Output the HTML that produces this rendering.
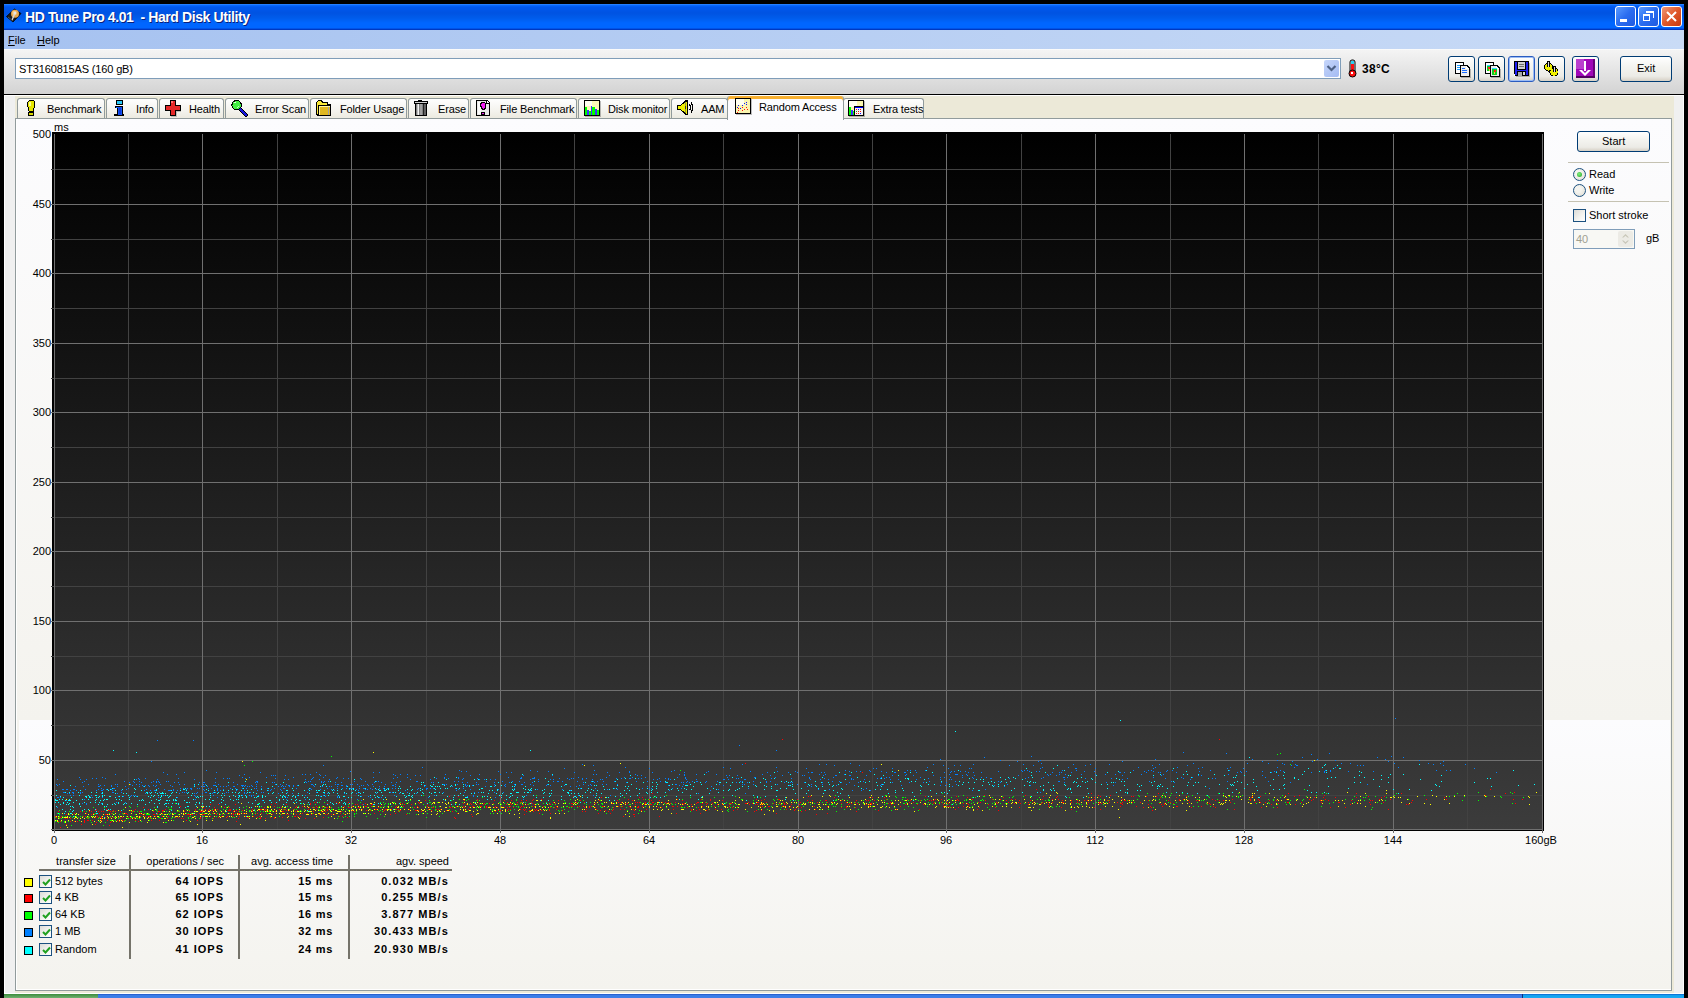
<!DOCTYPE html>
<html><head><meta charset="utf-8">
<style>
*{box-sizing:border-box;margin:0;padding:0}
html,body{width:1688px;height:998px;overflow:hidden;background:#000}
body{position:relative;font-family:"Liberation Sans",sans-serif;font-size:11px;color:#000}
.a{position:absolute}
#title{left:4px;top:4px;width:1680px;height:26px;
 background:linear-gradient(to bottom,#3d8fff 0px,#0a6cff 1px,#0058ee 3px,#0053e2 9px,#005ceb 14px,#0066ff 19px,#0066ff 24px,#0040d0 25px,#0030b0 26px)}
#title .t{left:21px;top:5px;color:#fff;font-weight:bold;font-size:14px;letter-spacing:-0.4px;text-shadow:1px 1px 0 #0a1f7a;white-space:nowrap}
#menu{left:4px;top:30px;width:1680px;height:19px;background:linear-gradient(to right,#a6c2f0,#c9dbf6)}
#menu span{position:absolute;top:4px}
#tool{left:4px;top:49px;width:1680px;height:45px;background:linear-gradient(to bottom,#f4f4f4,#d3d3d3);border-top:1px solid #fafafa}
#dark{left:4px;top:94px;width:1680px;height:1px;background:#000}
#body{left:4px;top:95px;width:1680px;height:899px;background:#f0f0f0;border-left:1px solid #fff;border-top:1px solid #fff;border-right:1px solid #fff;border-bottom:1px solid #fff}
#tan{left:15px;top:96px;width:1659px;height:897px;background:#ece9d8}
#panel{left:15px;top:118px;width:1657px;height:873px;border:1px solid #919b9c;
 background:linear-gradient(to bottom,#fcfcfe 0px,#f4f3ee 602px,#f4f3ee 873px);box-shadow:inset 1px -1px 0 #fff}
#lower{left:19px;top:720px;width:1651px;height:269px;background:linear-gradient(to bottom,#fcfcfe,#f4f3ee)}
#taskbar{left:4px;top:994px;width:1680px;height:4px;background:#3a7be6}

.tx{position:absolute;white-space:nowrap;line-height:13px;font-size:11px}
.b{font-weight:bold}
.xpbtn{position:absolute;border:1px solid #003c74;border-radius:3px;background:linear-gradient(to bottom,#ffffff 0%,#f4f4f0 40%,#ecebe6 80%,#d6d0c5 100%)}
.combo{position:absolute;left:15px;top:58px;width:1326px;height:21px;background:#fff;border:1px solid #7f9db9}
.drop{position:absolute;left:1324px;top:60px;width:15px;height:17px;border-radius:2px;background:linear-gradient(135deg,#c6d6fb 0%,#b4c8f6 50%,#a4bbf3 100%)}
.tab{position:absolute;top:98px;height:20px;border:1px solid #919b9c;border-bottom:none;border-radius:3px 3px 0 0;background:linear-gradient(to bottom,#fefefe,#f4f3ee 60%,#eceae0)}
.tab .tx{top:4px;left:29px;letter-spacing:-0.15px}
.tab svg{position:absolute;left:6px;top:1px}

.radio{position:absolute;width:13px;height:13px;border-radius:50%;border:1px solid #1c5180;background:radial-gradient(circle at 40% 40%,#f4f4f0 30%,#dcdad0 100%)}
.chk{position:absolute;width:13px;height:13px;border:1px solid #1c5180;background:linear-gradient(135deg,#dcdcd7 0%,#f4f4f0 60%,#ffffff 100%)}
.sw{position:absolute;left:24px;width:9px;height:9px;border:1px solid #000}
.sep{position:absolute;width:2px;top:855px;height:104px;background:#75736a}
.lt{position:absolute;white-space:nowrap;line-height:13px;font-size:11px;text-align:right}
.tbtn{position:absolute;top:6px;width:21px;height:21px;border:1px solid #fff;border-radius:3px}
</style></head><body>
<div class="a" id="title"><div class="a t">HD Tune Pro 4.01&nbsp; - Hard Disk Utility</div></div>
<div class="a" id="menu"><span style="left:4px"><u>F</u>ile</span><span style="left:33px"><u>H</u>elp</span></div>
<div class="a" id="tool"></div>
<div class="a" id="dark"></div>
<div class="a" id="body"></div>
<div class="a" id="tan"></div>
<div class="a" id="panel"></div>
<div class="a" id="lower"></div>

<!-- toolbar -->
<div class="combo"></div>
<div class="tx" style="left:19px;top:63px;letter-spacing:-0.15px">ST3160815AS (160 gB)</div>
<div class="drop"><svg width="16" height="17" style="position:absolute;left:0;top:0"><path d="M3.5 6 L7.5 10 L11.5 6" fill="none" stroke="#4d6185" stroke-width="2.2"/></svg></div>
<svg class="a" style="left:1347px;top:59px" width="12" height="19" viewBox="0 0 12 19">
<rect x="3" y="1" width="5" height="13" rx="2" fill="#e0e0e0" stroke="#000" stroke-width="1"/>
<rect x="4" y="2" width="3" height="3" fill="#2ad0f0"/><rect x="4" y="5" width="3" height="9" fill="#ff1010"/>
<circle cx="5.5" cy="14.5" r="3.5" fill="#ff1010" stroke="#000" stroke-width="1"/><rect x="4" y="13" width="2" height="2" fill="#fff"/>
</svg>
<div class="tx b" style="left:1362px;top:63px;font-size:12px;letter-spacing:0.3px">38°C</div>
<div class="xpbtn" style="left:1448px;top:56px;width:27px;height:26px"></div>
<div class="xpbtn" style="left:1478px;top:56px;width:27px;height:26px"></div>
<div class="xpbtn" style="left:1508px;top:56px;width:27px;height:26px;border-color:#2a5cc0;box-shadow:inset 0 0 0 1px #9cbcf5"></div>
<div class="xpbtn" style="left:1538px;top:56px;width:27px;height:26px"></div>
<div class="xpbtn" style="left:1572px;top:56px;width:27px;height:26px"></div>
<div class="xpbtn" style="left:1620px;top:56px;width:52px;height:26px"></div>
<div class="tx" style="left:1637px;top:62px">Exit</div>
<!-- tabs -->
<div class="tab" style="left:17px;width:88px"><div class="tx">Benchmark</div></div>
<div class="tab" style="left:106px;width:52px"><div class="tx">Info</div></div>
<div class="tab" style="left:159px;width:65px"><div class="tx">Health</div></div>
<div class="tab" style="left:225px;width:84px"><div class="tx">Error Scan</div></div>
<div class="tab" style="left:310px;width:97px"><div class="tx">Folder Usage</div></div>
<div class="tab" style="left:408px;width:61px"><div class="tx">Erase</div></div>
<div class="tab" style="left:470px;width:107px"><div class="tx">File Benchmark</div></div>
<div class="tab" style="left:578px;width:92px"><div class="tx">Disk monitor</div></div>
<div class="tab" style="left:671px;width:57px"><div class="tx">AAM</div></div>
<div class="tab" style="left:727px;width:117px;top:96px;height:24px;border-top:none;background:#fcfcfe;box-shadow:inset 0 3px 0 #f8b030"><div class="tx" style="left:31px;top:5px">Random Access</div></div>
<div class="tab" style="left:843px;width:81px"><div class="tx">Extra tests</div></div>
<!-- toolbar icons -->
<svg class="a" style="left:1454px;top:61px" width="17" height="17" viewBox="0 0 17 17" shape-rendering="crispEdges"><path d="M1 1h8l1 1v11H1z" fill="#000"/><path d="M2 2h7v10H2z" fill="#fff"/><rect x="3" y="4" width="4" height="1" fill="#1a9cff"/><rect x="3" y="6" width="5" height="1" fill="#1a9cff"/><rect x="3" y="8" width="5" height="1" fill="#1a9cff"/><path d="M6 4h7l3 3v9H6z" fill="#000"/><path d="M7 5h5v3h3v7H7z" fill="#eee"/><path d="M12 5l3 3h-3z" fill="#fff"/><rect x="8" y="7" width="3" height="1" fill="#1a6cff"/><rect x="8" y="9" width="5" height="1" fill="#1a6cff"/><rect x="8" y="11" width="5" height="1" fill="#1a6cff"/><path d="M16 8h1v9H7v-1h9z" fill="#000" opacity="0.25"/></svg>
<svg class="a" style="left:1484px;top:61px" width="17" height="17" viewBox="0 0 17 17" shape-rendering="crispEdges"><path d="M1 1h8l1 1v11H1z" fill="#000"/><path d="M2 2h7v10H2z" fill="#fff"/><rect x="3" y="4" width="5" height="1" fill="#29d6ff"/><rect x="3" y="5" width="5" height="5" fill="#10d020"/><rect x="4" y="6" width="2" height="2" fill="#ff2020"/><rect x="5" y="8" width="1" height="2" fill="#e0e020"/><path d="M6 4h7l3 3v9H6z" fill="#000"/><path d="M7 5h5v3h3v7H7z" fill="#eee"/><path d="M12 5l3 3h-3z" fill="#fff"/><rect x="8" y="7" width="5" height="1" fill="#29d6ff"/><rect x="8" y="8" width="5" height="6" fill="#10d020"/><rect x="10" y="9" width="2" height="2" fill="#ff2020"/><rect x="10" y="11" width="1" height="2" fill="#e0e020"/><path d="M16 8h1v9H7v-1h9z" fill="#000" opacity="0.25"/></svg>
<svg class="a" style="left:1514px;top:61px" width="17" height="17" viewBox="0 0 17 17" shape-rendering="crispEdges"><rect x="0" y="0" width="15" height="15" fill="#000"/><rect x="1" y="1" width="13" height="13" fill="#2020f0"/><rect x="3" y="1" width="9" height="8" fill="#000"/><rect x="4" y="1" width="7" height="7" fill="#d0d0d0"/><rect x="5" y="3" width="5" height="1" fill="#707070"/><rect x="5" y="5" width="5" height="1" fill="#707070"/><rect x="3" y="10" width="9" height="5" fill="#000"/><rect x="4" y="11" width="4" height="4" fill="#a8a8a8"/><rect x="9" y="11" width="2" height="3" fill="#d8d8d8"/><rect x="0" y="13" width="1" height="2" fill="#fff"/><path d="M15 2h1v14H2v-1h13z" fill="#000" opacity="0.25"/></svg>
<svg class="a" style="left:1543px;top:61px" width="17" height="17" viewBox="0 0 17 17" shape-rendering="crispEdges"><circle cx="5.5" cy="6" r="4.6" fill="#000"/><circle cx="11" cy="11" r="4.6" fill="#000"/><circle cx="5.5" cy="6" r="3.6" fill="#f0f000"/><circle cx="11" cy="11" r="3.6" fill="#f0f000"/><rect x="4" y="0" width="3" height="6" fill="#000"/><rect x="5" y="1" width="1" height="5" fill="#ddd"/><rect x="9.5" y="5" width="3" height="6" fill="#000"/><rect x="10.5" y="6" width="1" height="5" fill="#ddd"/></svg>
<svg class="a" style="left:1576px;top:59px" width="19" height="19" viewBox="0 0 19 19" shape-rendering="crispEdges"><rect x="0" y="0" width="19" height="19" rx="1" fill="#a008b8"/><rect x="0" y="0" width="8" height="10" fill="#d070e0" opacity="0.55"/><rect x="0" y="17" width="19" height="2" fill="#500060"/><rect x="17" y="0" width="2" height="19" fill="#500060" opacity="0.7"/><rect x="8" y="2" width="2" height="10" fill="#fff"/><path d="M3 11h3l3 3 3-3h3l-6 6z" fill="#fff" shape-rendering="auto"/></svg>
<!-- tab icons -->
<svg class="a" style="left:23px;top:100px" width="16" height="17" viewBox="0 0 16 17" shape-rendering="crispEdges" shape-rendering="auto"><path d="M6 0H10L12 2V7L11 8V11L10 12H6L5 11V8L4 7V2Z" fill="#000"/><path d="M6 1H10L11 2V7L10 8V11H6V8L5 7V2Z" fill="#e6e600"/><rect x="6" y="2" width="2" height="4" fill="#fafa90"/><rect x="5" y="12" width="6" height="4" fill="#000"/><rect x="6" y="13" width="4" height="2" fill="#d8d800"/></svg>
<svg class="a" style="left:111px;top:100px" width="16" height="17" viewBox="0 0 16 17" shape-rendering="crispEdges"><rect x="5" y="0" width="7" height="5" fill="#000"/><rect x="6" y="1" width="5" height="3" fill="#28c8f8"/><path d="M4 6H12V14H13V16H3V14H6V8H4Z" fill="#000"/><path d="M5 7H11V15H4V15H7V8H5Z" fill="#1060ff"/><rect x="7" y="7" width="4" height="8" fill="#1450f0"/><rect x="8" y="8" width="2" height="6" fill="#0a3ae0"/></svg>
<svg class="a" style="left:165px;top:100px" width="17" height="17" viewBox="0 0 17 17" shape-rendering="crispEdges"><path d="M5 0H11V5H16V11H11V16H5V11H0V5H5Z" fill="#000"/><path d="M6 1H10V6H15V10H10V15H6V10H1V6H6Z" fill="#e42828"/><rect x="6" y="1" width="2" height="2" fill="#ff7070"/><path d="M11 11H16V12H12V17H6V16H11Z" fill="#000" opacity="0.2"/></svg>
<svg class="a" style="left:231px;top:100px" width="17" height="17" viewBox="0 0 17 17" shape-rendering="crispEdges" shape-rendering="auto"><circle cx="5.6" cy="5.2" r="5.3" fill="#000"/><circle cx="5.6" cy="5.2" r="4.2" fill="#44ee44"/><rect x="3" y="2" width="2" height="1" fill="#e0ffe0"/><path d="M6 8L8 6" stroke="#e0ffe0" stroke-width="0.8"/><path d="M9.5 9.5L15 15" stroke="#000" stroke-width="4" stroke-linecap="round"/><path d="M9.5 9.5L15 15" stroke="#1818e0" stroke-width="2.2" stroke-linecap="round"/></svg>
<svg class="a" style="left:316px;top:100px" width="16" height="17" viewBox="0 0 16 17" shape-rendering="crispEdges" shape-rendering="auto"><path d="M0 2L2 0H5L7 2H12V4H15V16H1L0 15Z" fill="#000"/><path d="M1 2.5L2.5 1H4.5L6.5 3H11V5H2V14H1Z" fill="#f8e838"/><rect x="2" y="5" width="13" height="11" fill="#000"/><rect x="3" y="6" width="11" height="9" fill="#e0b820"/><rect x="3" y="6" width="11" height="1" fill="#fff6a0"/><rect x="3" y="6" width="1" height="9" fill="#fff6a0"/><rect x="12" y="7" width="1" height="8" fill="#a0a0a0"/></svg>
<svg class="a" style="left:413px;top:100px" width="16" height="17" viewBox="0 0 16 17" shape-rendering="crispEdges"><rect x="1" y="1" width="14" height="3" fill="#000"/><rect x="5" y="0" width="4" height="2" fill="#000"/><rect x="2" y="2" width="12" height="1" fill="#d0d0d0"/><rect x="2" y="4" width="12" height="12" fill="#000"/><rect x="3" y="4" width="10" height="11" fill="#808080"/><rect x="4" y="4" width="1" height="11" fill="#c0c0c0"/><rect x="5" y="4" width="1" height="11" fill="#f4f4f4"/><rect x="7" y="4" width="2" height="11" fill="#a0a0a0"/><rect x="10" y="4" width="1" height="11" fill="#222"/><rect x="11" y="4" width="2" height="11" fill="#606060"/></svg>
<svg class="a" style="left:476px;top:100px" width="16" height="17" viewBox="0 0 16 17" shape-rendering="crispEdges" shape-rendering="auto"><path d="M0 0H11L14 3V16H0Z" fill="#000"/><path d="M1 1H10V4H13V15H1Z" fill="#e8e8e8"/><rect x="2" y="2" width="3" height="12" fill="#fafafa"/><path d="M11 1L13 3H11Z" fill="#fff"/><path d="M5 2H8L10 4V8L9 10H6L5 9V8L4 7V4Z" fill="#000"/><path d="M6 3H8L9 4V7L8 9H7L6 8V7L5 6V4Z" fill="#f020f0"/><rect x="5" y="12" width="4" height="3" fill="#000"/><rect x="6" y="13" width="2" height="1" fill="#f020f0"/></svg>
<svg class="a" style="left:584px;top:100px" width="17" height="17" viewBox="0 0 17 17" shape-rendering="crispEdges"><rect x="0" y="0" width="16" height="16" fill="#000"/><rect x="1" y="1" width="14" height="14" fill="#fdf8b8"/><rect x="1" y="1" width="7" height="5" fill="#fffff0"/><rect x="1" y="7" width="2" height="8" fill="#00ff00"/><rect x="3" y="10" width="2" height="5" fill="#4030ff"/><rect x="5" y="11" width="2" height="4" fill="#00ff00"/><rect x="7" y="6" width="1" height="9" fill="#4030ff"/><rect x="8" y="7" width="3" height="8" fill="#00ff00"/><rect x="11" y="9" width="2" height="6" fill="#4030ff"/><rect x="13" y="10" width="2" height="5" fill="#00ff00"/><path d="M16 1h1v16H1v-1h15z" fill="#000" opacity="0.25"/></svg>
<svg class="a" style="left:677px;top:100px" width="17" height="16" viewBox="0 0 17 16" shape-rendering="crispEdges" shape-rendering="auto"><path d="M0 5H3L9 0H11V15H9L3 10H0Z" fill="#000"/><path d="M1 6H3.5L9 1.5H10V13.5H9L3.5 9H1Z" fill="#f0f000"/><rect x="8" y="6" width="1" height="3" fill="#000"/><rect x="8" y="2" width="1" height="11" fill="#606060" opacity="0.6"/><path d="M12.5 4.5Q14.5 7.5 12.5 10.5" stroke="#000" stroke-width="1.1" fill="none"/><path d="M14 2.5Q17.5 7.5 14 12.5" stroke="#000" stroke-width="1.1" fill="none"/></svg>
<svg class="a" style="left:735px;top:98px" width="17" height="17" viewBox="0 0 17 17" shape-rendering="crispEdges"><rect x="0" y="0" width="16" height="16" fill="#000"/><rect x="1" y="1" width="14" height="14" fill="#fbf6b0"/><rect x="1" y="1" width="8" height="6" fill="#fffff0"/><rect x="3" y="7" width="1" height="1" fill="#1010ff"/><rect x="7" y="7" width="1" height="1" fill="#1010ff"/><rect x="9" y="5" width="1" height="1" fill="#1010ff"/><rect x="11" y="4" width="1" height="1" fill="#1010ff"/><rect x="11" y="6" width="1" height="1" fill="#1010ff"/><rect x="2" y="9" width="1" height="1" fill="#1010ff"/><rect x="5" y="10" width="1" height="1" fill="#1010ff"/><rect x="3" y="10" width="1" height="1" fill="#ff1010"/><rect x="7" y="9" width="1" height="1" fill="#ff1010"/><rect x="11" y="9" width="1" height="1" fill="#ff1010"/><rect x="9" y="11" width="1" height="1" fill="#ff1010"/><rect x="12" y="11" width="1" height="1" fill="#ff1010"/><rect x="3" y="12" width="1" height="1" fill="#ff1010"/><rect x="7" y="12" width="1" height="1" fill="#ff1010"/><rect x="2" y="14" width="1" height="1" fill="#ff1010"/><path d="M16 1h1v16H1v-1h15z" fill="#000" opacity="0.25"/></svg>
<svg class="a" style="left:848px;top:100px" width="17" height="17" viewBox="0 0 17 17" shape-rendering="crispEdges"><rect x="0" y="0" width="16" height="16" fill="#000"/><rect x="1" y="1" width="14" height="14" fill="#fbf6b0"/><rect x="1" y="1" width="8" height="6" fill="#fffff0"/><rect x="1" y="7" width="2" height="8" fill="#00ff00"/><rect x="3" y="10" width="2" height="5" fill="#4030ff"/><rect x="5" y="11" width="1" height="4" fill="#00ff00"/><rect x="6" y="6" width="10" height="10" fill="#000"/><rect x="7" y="7" width="8" height="8" fill="#f4f4f4"/><rect x="7" y="7" width="8" height="1" fill="#0000ff"/><rect x="8" y="9" width="1" height="1" fill="#ff1010"/><rect x="10" y="9" width="1" height="1" fill="#1010ff"/><rect x="12" y="9" width="1" height="1" fill="#ff1010"/><rect x="8" y="11" width="1" height="1" fill="#10c010"/><rect x="10" y="11" width="1" height="1" fill="#ff1010"/><rect x="12" y="11" width="1" height="1" fill="#ff1010"/><rect x="8" y="13" width="1" height="1" fill="#ff1010"/><rect x="10" y="13" width="1" height="1" fill="#ff1010"/><rect x="12" y="13" width="1" height="1" fill="#1010ff"/><path d="M16 1h1v16H1v-1h15z" fill="#000" opacity="0.25"/></svg>

<!-- title icon + buttons -->
<svg class="a" style="left:6px;top:8px" width="16" height="15" viewBox="0 0 16 15">
<path d="M0.5 8.5L8.5 1L15 5.5L7 14Z" fill="#1a1a1a" stroke="#000" stroke-width="0.8"/>
<circle cx="9" cy="5.8" r="4" fill="#e8a850"/><circle cx="8.5" cy="5" r="2.2" fill="#f8d090"/>
<path d="M6 12L8.8 5.5" stroke="#d8d8d8" stroke-width="1.4"/><circle cx="9" cy="5" r="1.3" fill="#e8e8e8"/>
<path d="M2 9L7 13" stroke="#555" stroke-width="1"/></svg>
<div class="tbtn" style="left:1615px;background:linear-gradient(135deg,#5a9bff 0%,#2a6cf0 50%,#1f5ae0 100%)"><div class="a" style="left:4px;top:12px;width:7px;height:3px;background:#fff"></div></div>
<div class="tbtn" style="left:1638px;background:linear-gradient(135deg,#5a9bff 0%,#2a6cf0 50%,#1f5ae0 100%)"><div class="a" style="left:7px;top:4px;width:8px;height:7px;border-top:2px solid #fff;border-right:1px solid #fff"></div><div class="a" style="left:4px;top:7px;width:7px;height:7px;border:1px solid #fff;border-top-width:2px"></div></div>
<div class="tbtn" style="left:1661px;background:linear-gradient(135deg,#f09878 0%,#e0582a 50%,#c83a10 100%)"><svg class="a" style="left:3px;top:3px" width="13" height="13"><path d="M2 2L11 11M11 2L2 11" stroke="#fff" stroke-width="2"/></svg></div>
<!-- right controls -->
<div class="xpbtn" style="left:1577px;top:131px;width:73px;height:21px"></div>
<div class="tx" style="left:1602px;top:135px">Start</div>
<div class="a" style="left:1568px;top:162px;width:101px;height:1px;background:#c5c2b2"></div>
<div class="radio" style="left:1573px;top:168px"><div class="a" style="left:3px;top:3px;width:5px;height:5px;border-radius:50%;background:radial-gradient(circle at 40% 40%,#80f080,#20a020)"></div></div>
<div class="tx" style="left:1589px;top:168px">Read</div>
<div class="radio" style="left:1573px;top:184px"></div>
<div class="tx" style="left:1589px;top:184px">Write</div>
<div class="a" style="left:1568px;top:201px;width:101px;height:1px;background:#c5c2b2"></div>
<div class="chk" style="left:1573px;top:209px"></div>
<div class="tx" style="left:1589px;top:209px">Short stroke</div>
<div class="a" style="left:1573px;top:229px;width:62px;height:20px;border:1px solid #7f9db9;background:#f8f8f4"></div>
<div class="a" style="left:1618px;top:231px;width:15px;height:16px;background:#ecebe5;border-radius:2px"></div>
<svg class="a" style="left:1618px;top:231px" width="15" height="16"><path d="M4 6.5L7.5 3 11 6.5H9.5L7.5 4.8 5.5 6.5ZM4 9.5L7.5 13 11 9.5H9.5L7.5 11.2 5.5 9.5Z" fill="#c8c6b8"/></svg>
<div class="tx" style="left:1576px;top:233px;color:#a0a090">40</div>
<div class="tx" style="left:1646px;top:232px">gB</div>
<!-- legend table -->
<div class="a" style="left:39px;top:869px;width:413px;height:2px;background:#75736a"></div>
<div class="sep" style="left:129px"></div><div class="sep" style="left:238px"></div><div class="sep" style="left:348px"></div>
<div class="lt" style="right:1572px;top:855px">transfer size</div>
<div class="lt" style="right:1464px;top:855px">operations / sec</div>
<div class="lt" style="right:1355px;top:855px">avg. access time</div>
<div class="lt" style="right:1239px;top:855px">agv. speed</div>
<div class="sw" style="top:878px;background:#ffff00"></div>
<div class="chk" style="left:39px;top:875px"><svg class="a" style="left:2px;top:2px" width="9" height="9"><path d="M1 4L3.5 6.5 8 1.5" fill="none" stroke="#21a121" stroke-width="2"/></svg></div>
<div class="tx" style="left:55px;top:875px">512 bytes</div>
<div class="lt b" style="right:1464px;top:875px;letter-spacing:1px">64 IOPS</div>
<div class="lt b" style="right:1355px;top:875px;letter-spacing:0.7px">15 ms</div>
<div class="lt b" style="right:1239px;top:875px;letter-spacing:1.1px">0.032 MB/s</div>
<div class="sw" style="top:894px;background:#ff0000"></div>
<div class="chk" style="left:39px;top:891px"><svg class="a" style="left:2px;top:2px" width="9" height="9"><path d="M1 4L3.5 6.5 8 1.5" fill="none" stroke="#21a121" stroke-width="2"/></svg></div>
<div class="tx" style="left:55px;top:891px">4 KB</div>
<div class="lt b" style="right:1464px;top:891px;letter-spacing:1px">65 IOPS</div>
<div class="lt b" style="right:1355px;top:891px;letter-spacing:0.7px">15 ms</div>
<div class="lt b" style="right:1239px;top:891px;letter-spacing:1.1px">0.255 MB/s</div>
<div class="sw" style="top:911px;background:#00ff00"></div>
<div class="chk" style="left:39px;top:908px"><svg class="a" style="left:2px;top:2px" width="9" height="9"><path d="M1 4L3.5 6.5 8 1.5" fill="none" stroke="#21a121" stroke-width="2"/></svg></div>
<div class="tx" style="left:55px;top:908px">64 KB</div>
<div class="lt b" style="right:1464px;top:908px;letter-spacing:1px">62 IOPS</div>
<div class="lt b" style="right:1355px;top:908px;letter-spacing:0.7px">16 ms</div>
<div class="lt b" style="right:1239px;top:908px;letter-spacing:1.1px">3.877 MB/s</div>
<div class="sw" style="top:928px;background:#0080ff"></div>
<div class="chk" style="left:39px;top:925px"><svg class="a" style="left:2px;top:2px" width="9" height="9"><path d="M1 4L3.5 6.5 8 1.5" fill="none" stroke="#21a121" stroke-width="2"/></svg></div>
<div class="tx" style="left:55px;top:925px">1 MB</div>
<div class="lt b" style="right:1464px;top:925px;letter-spacing:1px">30 IOPS</div>
<div class="lt b" style="right:1355px;top:925px;letter-spacing:0.7px">32 ms</div>
<div class="lt b" style="right:1239px;top:925px;letter-spacing:1.1px">30.433 MB/s</div>
<div class="sw" style="top:946px;background:#00ffff"></div>
<div class="chk" style="left:39px;top:943px"><svg class="a" style="left:2px;top:2px" width="9" height="9"><path d="M1 4L3.5 6.5 8 1.5" fill="none" stroke="#21a121" stroke-width="2"/></svg></div>
<div class="tx" style="left:55px;top:943px">Random</div>
<div class="lt b" style="right:1464px;top:943px;letter-spacing:1px">41 IOPS</div>
<div class="lt b" style="right:1355px;top:943px;letter-spacing:0.7px">24 ms</div>
<div class="lt b" style="right:1239px;top:943px;letter-spacing:1.1px">20.930 MB/s</div>

<!-- taskbar -->
<div class="a" style="left:4px;top:993px;width:1680px;height:1px;background:#fff"></div>
<div class="a" style="left:4px;top:994px;width:94px;height:4px;background:linear-gradient(to bottom,#3c8c3c,#70b070)"></div>
<div class="a" style="left:98px;top:994px;width:1425px;height:4px;background:linear-gradient(to bottom,#1848b8 0px,#3a7ce8 1px,#3c80e8 4px)"></div>
<div class="a" style="left:1522px;top:994px;width:1px;height:4px;background:#10307a"></div>
<div class="a" style="left:1523px;top:994px;width:161px;height:4px;background:linear-gradient(to bottom,#0a4cc0 0px,#12a0ee 1px,#18aaf2 4px)"></div>
<svg class="a" style="left:0;top:118px" width="1560" height="740" viewBox="0 0 1560 740" shape-rendering="crispEdges">
<defs><linearGradient id="cg" gradientUnits="userSpaceOnUse" x1="0" y1="16" x2="0" y2="712"><stop offset="0" stop-color="#000"/><stop offset="1" stop-color="#3c3c3c"/></linearGradient></defs>
<rect x="52" y="14" width="1492" height="699" fill="#000"/>
<rect x="54" y="16" width="1489" height="696" fill="url(#cg)"/>
<path d="M128 16h1v697h-1zM277 16h1v697h-1zM426 16h1v697h-1zM574 16h1v697h-1zM723 16h1v697h-1zM872 16h1v697h-1zM1021 16h1v697h-1zM1170 16h1v697h-1zM1318 16h1v697h-1zM1467 16h1v697h-1zM51 677h1492v1h-1492zM51 607h1492v1h-1492zM51 538h1492v1h-1492zM51 468h1492v1h-1492zM51 399h1492v1h-1492zM51 329h1492v1h-1492zM51 260h1492v1h-1492zM51 190h1492v1h-1492zM51 121h1492v1h-1492zM51 51h1492v1h-1492z" fill="#424242"/>
<path d="M54 16h1v699h-1zM202 16h1v699h-1zM351 16h1v699h-1zM500 16h1v699h-1zM649 16h1v699h-1zM798 16h1v699h-1zM946 16h1v699h-1zM1095 16h1v699h-1zM1244 16h1v699h-1zM1393 16h1v699h-1zM1542 16h1v699h-1zM51 711h1492v1h-1492zM51 642h1492v1h-1492zM51 572h1492v1h-1492zM51 503h1492v1h-1492zM51 433h1492v1h-1492zM51 364h1492v1h-1492zM51 294h1492v1h-1492zM51 225h1492v1h-1492zM51 155h1492v1h-1492zM51 86h1492v1h-1492z" fill="#707070"/>
<path d="M52 14h2v699h-2zM52 712h1492v1h-1492zM1543 14h1v699h-1zM52 14h1492v2h-1492z" fill="#000"/>
<path d="M54 712h1v3h-1zM202 712h1v3h-1zM351 712h1v3h-1zM500 712h1v3h-1zM649 712h1v3h-1zM798 712h1v3h-1zM946 712h1v3h-1zM1095 712h1v3h-1zM1244 712h1v3h-1zM1393 712h1v3h-1zM1542 712h1v3h-1zM51 711h3v1h-3zM51 642h3v1h-3zM51 572h3v1h-3zM51 503h3v1h-3zM51 433h3v1h-3zM51 364h3v1h-3zM51 294h3v1h-3zM51 225h3v1h-3zM51 155h3v1h-3zM51 86h3v1h-3z" fill="#707070"/><path d="M51 677h3v1h-3zM51 607h3v1h-3zM51 538h3v1h-3zM51 468h3v1h-3zM51 399h3v1h-3zM51 329h3v1h-3zM51 260h3v1h-3zM51 190h3v1h-3zM51 121h3v1h-3zM51 51h3v1h-3z" fill="#424242"/>
<path d="M55 682h1v1h-1zm1 -16h1v1h-1zm1 -5h1v1h-1zm0 6h1v1h-1zm0 12h1v1h-1zm0 10h1v1h-1zm1 -10h1v1h-1zm1 -13h1v1h-1zm1 13h1v1h-1zm2 -8h1v1h-1zm1 -8h1v1h-1zm0 8h1v1h-1zm0 3h1v1h-1zm1 0h1v1h-1zm2 -3h1v1h-1zm0 11h1v1h-1zm1 -11h1v1h-1zm0 4h1v1h-1zm2 0h1v1h-1zm1 -3h1v1h-1zm0 5h1v1h-1zm2 -3h1v1h-1zm1 -3h1v1h-1zm0 3h1v1h-1zm0 1h1v1h-1zm0 2h1v1h-1zm1 -6h1v1h-1zm1 -3h1v1h-1zm1 4h1v1h-1zm3 -13h1v1h-1zm1 2h1v1h-1zm0 11h1v1h-1zm0 2h1v1h-1zm0 1h1v1h-1zm2 -11h1v1h-1zm0 10h1v1h-1zm0 11h1v1h-1zm1 -17h1v1h-1zm1 -5h1v1h-1zm0 18h1v1h-1zm1 -10h1v1h-1zm1 -10h1v1h-1zm0 24h1v1h-1zm0 1h1v1h-1zm2 -20h1v1h-1zm3 8h1v1h-1zm0 3h1v1h-1zm1 -17h1v1h-1zm0 19h1v1h-1zm4 -19h1v1h-1zm0 12h1v1h-1zm2 -6h1v1h-1zm0 2h1v1h-1zm0 3h1v1h-1zm1 -3h1v1h-1zm0 10h1v1h-1zm1 -11h1v1h-1zm0 15h1v1h-1zm1 -12h1v1h-1zm0 2h1v1h-1zm0 3h1v1h-1zm0 10h1v1h-1zm1 -26h1v1h-1zm0 13h1v1h-1zm0 7h1v1h-1zm1 -8h1v1h-1zm1 -4h1v1h-1zm1 -7h1v1h-1zm1 11h1v1h-1zm4 0h1v1h-1zm1 -4h1v1h-1zm0 1h1v1h-1zm0 3h1v1h-1zm1 1h1v1h-1zm0 2h1v1h-1zm1 -4h1v1h-1zm0 4h1v1h-1zm1 -4h1v1h-1zm1 -14h1v1h-1zm0 10h1v1h-1zm1 18h1v1h-1zm1 -18h1v1h-1zm0 2h1v1h-1zm0 7h1v1h-1zm1 3h1v1h-1zm1 0h1v1h-1zm2 -6h1v1h-1zm0 2h1v1h-1zm2 4h1v1h-1zm1 -15h1v1h-1zm1 5h1v1h-1zm0 16h1v1h-1zm1 -13h1v1h-1zm2 -1h1v1h-1zm1 -6h1v1h-1zm1 2h1v1h-1zm0 12h1v1h-1zm1 -1h1v1h-1zm0 8h1v1h-1zm1 -18h1v1h-1zm1 -4h1v1h-1zm0 14h1v1h-1zm1 -13h1v1h-1zm0 6h1v1h-1zm1 7h1v1h-1zm1 -16h1v1h-1zm0 5h1v1h-1zm0 12h1v1h-1zm2 -18h1v1h-1zm1 1h1v1h-1zm0 2h1v1h-1zm0 3h1v1h-1zm0 2h1v1h-1zm2 -4h1v1h-1zm1 3h1v1h-1zm1 1h1v1h-1zm1 4h1v1h-1zm1 -12h1v1h-1zm0 7h1v1h-1zm0 8h1v1h-1zm1 -4h1v1h-1zm0 3h1v1h-1zm2 -7h1v1h-1zm0 11h1v1h-1zm1 -10h1v1h-1zm0 6h1v1h-1zm1 -2h1v1h-1zm1 -29h1v1h-1zm0 21h1v1h-1zm0 10h1v1h-1zm2 -11h1v1h-1zm0 4h1v1h-1zm1 5h1v1h-1zm1 -4h1v1h-1zm0 4h1v1h-1zm1 -9h1v1h-1zm0 1h1v1h-1zm0 3h1v1h-1zm1 -45h1v1h-1zm0 39h1v1h-1zm1 2h1v1h-1zm0 7h1v1h-1zm0 9h1v1h-1zm1 -15h1v1h-1zm0 10h1v1h-1zm1 -8h1v1h-1zm1 11h1v1h-1zm2 -23h1v1h-1zm0 23h1v1h-1zm1 -6h1v1h-1zm2 -8h1v1h-1zm1 -7h1v1h-1zm1 7h1v1h-1zm0 9h1v1h-1zm0 7h1v1h-1zm1 -7h1v1h-1zm1 -5h1v1h-1zm0 5h1v1h-1zm2 -4h1v1h-1zm0 6h1v1h-1zm1 -3h1v1h-1zm0 1h1v1h-1zm1 -8h1v1h-1zm2 -8h1v1h-1zm1 16h1v1h-1zm0 7h1v1h-1zm1 -19h1v1h-1zm0 4h1v1h-1zm1 2h1v1h-1zm0 9h1v1h-1zm1 -5h1v1h-1zm2 4h1v1h-1zm1 -4h1v1h-1zm1 -16h1v1h-1zm0 12h1v1h-1zm0 8h1v1h-1zm2 -3h1v1h-1zm0 3h1v1h-1zm1 -4h1v1h-1zm3 0h1v1h-1zm1 0h1v1h-1zm0 1h1v1h-1zm2 -49h1v1h-1zm1 39h1v1h-1zm0 6h1v1h-1zm0 8h1v1h-1zm0 2h1v1h-1zm1 1h1v1h-1zm0 3h1v1h-1zm1 -6h1v1h-1zm1 -5h1v1h-1zm0 4h1v1h-1zm2 -10h1v1h-1zm0 6h1v1h-1zm2 -2h1v1h-1zm1 7h1v1h-1zm1 -11h1v1h-1zm0 2h1v1h-1zm0 2h1v1h-1zm0 3h1v1h-1zm1 -7h1v1h-1zm0 4h1v1h-1zm0 4h1v1h-1zm1 -6h1v1h-1zm0 8h1v1h-1zm1 -22h1v1h-1zm0 22h1v1h-1zm1 -6h1v1h-1zm1 2h1v1h-1zm1 5h1v1h-1zm2 -5h1v1h-1zm1 5h1v1h-1zm1 -8h1v1h-1zm0 7h1v1h-1zm0 3h1v1h-1zm1 -10h1v1h-1zm1 -7h1v1h-1zm0 4h1v1h-1zm0 3h1v1h-1zm0 7h1v1h-1zm1 -20h1v1h-1zm0 14h1v1h-1zm1 2h1v1h-1zm0 1h1v1h-1zm0 1h1v1h-1zm0 3h1v1h-1zm0 4h1v1h-1zm1 -13h1v1h-1zm1 19h1v1h-1zm1 -17h1v1h-1zm0 4h1v1h-1zm3 -12h1v1h-1zm0 8h1v1h-1zm0 3h1v1h-1zm1 4h1v1h-1zm2 -7h1v1h-1zm0 6h1v1h-1zm1 -14h1v1h-1zm1 7h1v1h-1zm0 7h1v1h-1zm1 -14h1v1h-1zm1 10h1v1h-1zm3 -6h1v1h-1zm0 4h1v1h-1zm1 0h1v1h-1zm1 2h1v1h-1zm1 2h1v1h-1zm1 -6h1v1h-1zm0 5h1v1h-1zm1 6h1v1h-1zm1 -20h1v1h-1zm2 10h1v1h-1zm0 5h1v1h-1zm1 -13h1v1h-1zm0 8h1v1h-1zm0 1h1v1h-1zm0 2h1v1h-1zm0 7h1v1h-1zm1 -10h1v1h-1zm0 3h1v1h-1zm1 -14h1v1h-1zm0 12h1v1h-1zm0 4h1v1h-1zm0 2h1v1h-1zm0 1h1v1h-1zm1 -15h1v1h-1zm0 7h1v1h-1zm1 3h1v1h-1zm0 5h1v1h-1zm1 -7h1v1h-1zm2 -9h1v1h-1zm0 9h1v1h-1zm0 9h1v1h-1zm1 -3h1v1h-1zm1 -7h1v1h-1zm0 10h1v1h-1zm0 1h1v1h-1zm1 -10h1v1h-1zm1 9h1v1h-1zm1 -7h1v1h-1zm1 -6h1v1h-1zm1 -1h1v1h-1zm0 3h1v1h-1zm0 2h1v1h-1zm0 2h1v1h-1zm1 -7h1v1h-1zm0 1h1v1h-1zm0 8h1v1h-1zm1 5h1v1h-1zm2 -23h1v1h-1zm1 14h1v1h-1zm0 2h1v1h-1zm0 4h1v1h-1zm1 8h1v1h-1zm1 -8h1v1h-1zm3 -15h1v1h-1zm1 11h1v1h-1zm1 2h1v1h-1zm2 0h1v1h-1zm1 -15h1v1h-1zm0 14h1v1h-1zm1 -7h1v1h-1zm1 -7h1v1h-1zm1 7h1v1h-1zm0 6h1v1h-1zm1 -13h1v1h-1zm0 3h1v1h-1zm0 6h1v1h-1zm3 2h1v1h-1zm0 7h1v1h-1zm2 -9h1v1h-1zm0 5h1v1h-1zm1 -3h1v1h-1zm0 4h1v1h-1zm1 -5h1v1h-1zm0 12h1v1h-1zm1 -11h1v1h-1zm0 2h1v1h-1zm1 -9h1v1h-1zm0 9h1v1h-1zm1 -13h1v1h-1zm0 11h1v1h-1zm0 10h1v1h-1zm1 -12h1v1h-1zm0 9h1v1h-1zm0 6h1v1h-1zm1 -7h1v1h-1zm0 5h1v1h-1zm1 -18h1v1h-1zm0 6h1v1h-1zm1 0h1v1h-1zm0 1h1v1h-1zm3 7h1v1h-1zm1 -16h1v1h-1zm0 8h1v1h-1zm0 1h1v1h-1zm3 2h1v1h-1zm1 -3h1v1h-1zm0 10h1v1h-1zm5 -21h1v1h-1zm3 0h1v1h-1zm0 5h1v1h-1zm0 2h1v1h-1zm0 14h1v1h-1zm0 4h1v1h-1zm1 -17h1v1h-1zm1 10h1v1h-1zm1 -11h1v1h-1zm0 8h1v1h-1zm2 -15h1v1h-1zm0 7h1v1h-1zm0 7h1v1h-1zm1 -9h1v1h-1zm0 5h1v1h-1zm0 5h1v1h-1zm1 -11h1v1h-1zm0 6h1v1h-1zm1 -7h1v1h-1zm0 8h1v1h-1zm1 1h1v1h-1zm2 -14h1v1h-1zm0 20h1v1h-1zm3 -18h1v1h-1zm0 5h1v1h-1zm1 -4h1v1h-1zm0 14h1v1h-1zm0 7h1v1h-1zm1 -15h1v1h-1zm0 1h1v1h-1zm1 4h1v1h-1zm1 -21h1v1h-1zm0 12h1v1h-1zm0 5h1v1h-1zm0 13h1v1h-1zm1 -14h1v1h-1zm0 12h1v1h-1zm0 2h1v1h-1zm1 -20h1v1h-1zm0 21h1v1h-1zm2 -8h1v1h-1zm0 5h1v1h-1zm1 -12h1v1h-1zm1 -2h1v1h-1zm0 7h1v1h-1zm2 0h1v1h-1zm0 3h1v1h-1zm3 1h1v1h-1zm1 -8h1v1h-1zm0 2h1v1h-1zm1 -6h1v1h-1zm1 -1h1v1h-1zm0 7h1v1h-1zm0 2h1v1h-1zm0 2h1v1h-1zm0 2h1v1h-1zm0 6h1v1h-1zm0 1h1v1h-1zm1 -13h1v1h-1zm1 12h1v1h-1zm2 -14h1v1h-1zm0 3h1v1h-1zm1 0h1v1h-1zm0 3h1v1h-1zm1 -10h1v1h-1zm1 15h1v1h-1zm1 6h1v1h-1zm1 -14h1v1h-1zm0 1h1v1h-1zm0 2h1v1h-1zm2 -10h1v1h-1zm1 11h1v1h-1zm1 -18h1v1h-1zm0 13h1v1h-1zm0 4h1v1h-1zm2 -4h1v1h-1zm0 4h1v1h-1zm0 4h1v1h-1zm2 -11h1v1h-1zm2 8h1v1h-1zm0 4h1v1h-1zm1 -9h1v1h-1zm0 15h1v1h-1zm1 -9h1v1h-1zm1 -4h1v1h-1zm0 2h1v1h-1zm0 4h1v1h-1zm1 -14h1v1h-1zm0 15h1v1h-1zm1 -14h1v1h-1zm0 6h1v1h-1zm0 11h1v1h-1zm0 4h1v1h-1zm2 -15h1v1h-1zm0 3h1v1h-1zm0 4h1v1h-1zm0 12h1v1h-1zm1 -16h1v1h-1zm1 -7h1v1h-1zm0 8h1v1h-1zm2 -5h1v1h-1zm0 5h1v1h-1zm1 -4h1v1h-1zm0 11h1v1h-1zm2 -8h1v1h-1zm0 9h1v1h-1zm2 -13h1v1h-1zm0 5h1v1h-1zm1 -17h1v1h-1zm0 5h1v1h-1zm0 9h1v1h-1zm1 -4h1v1h-1zm1 -1h1v1h-1zm1 0h1v1h-1zm0 8h1v1h-1zm0 4h1v1h-1zm2 -12h1v1h-1zm1 -9h1v1h-1zm0 14h1v1h-1zm0 2h1v1h-1zm0 9h1v1h-1zm2 -15h1v1h-1zm0 15h1v1h-1zm2 -9h1v1h-1zm1 -2h1v1h-1zm0 3h1v1h-1zm1 -5h1v1h-1zm2 4h1v1h-1zm3 4h1v1h-1zm1 -10h1v1h-1zm1 3h1v1h-1zm0 3h1v1h-1zm0 4h1v1h-1zm1 -18h1v1h-1zm0 4h1v1h-1zm0 7h1v1h-1zm1 10h1v1h-1zm1 -20h1v1h-1zm0 9h1v1h-1zm0 2h1v1h-1zm0 2h1v1h-1zm1 -6h1v1h-1zm1 -5h1v1h-1zm2 16h1v1h-1zm1 -19h1v1h-1zm0 7h1v1h-1zm5 9h1v1h-1zm2 -16h1v1h-1zm0 3h1v1h-1zm0 15h1v1h-1zm2 3h1v1h-1zm1 -16h1v1h-1zm5 -4h1v1h-1zm1 6h1v1h-1zm0 12h1v1h-1zm1 -12h1v1h-1zm0 8h1v1h-1zm1 -1h1v1h-1zm2 -13h1v1h-1zm1 7h1v1h-1zm1 -15h1v1h-1zm2 19h1v1h-1zm1 -1h1v1h-1zm1 3h1v1h-1zm0 1h1v1h-1zm1 -1h1v1h-1zm1 9h1v1h-1zm2 -18h1v1h-1zm0 9h1v1h-1zm1 -6h1v1h-1zm2 0h1v1h-1zm0 6h1v1h-1zm1 7h1v1h-1zm2 -17h1v1h-1zm7 6h1v1h-1zm0 8h1v1h-1zm1 -15h1v1h-1zm0 1h1v1h-1zm0 6h1v1h-1zm1 -10h1v1h-1zm1 5h1v1h-1zm0 5h1v1h-1zm2 -6h1v1h-1zm3 7h1v1h-1zm1 1h1v1h-1zm2 -5h1v1h-1zm1 7h1v1h-1zm1 2h1v1h-1zm1 -6h1v1h-1zm1 -7h1v1h-1zm0 1h1v1h-1zm0 3h1v1h-1zm0 8h1v1h-1zm1 -19h1v1h-1zm2 1h1v1h-1zm1 8h1v1h-1zm0 3h1v1h-1zm1 -4h1v1h-1zm0 10h1v1h-1zm1 4h1v1h-1zm1 -8h1v1h-1zm0 1h1v1h-1zm1 -14h1v1h-1zm0 15h1v1h-1zm1 -4h1v1h-1zm0 3h1v1h-1zm0 11h1v1h-1zm3 -21h1v1h-1zm0 14h1v1h-1zm2 -4h1v1h-1zm1 10h1v1h-1zm0 1h1v1h-1zm1 -4h1v1h-1zm2 -10h1v1h-1zm0 2h1v1h-1zm1 -6h1v1h-1zm1 6h1v1h-1zm0 8h1v1h-1zm1 -18h1v1h-1zm0 5h1v1h-1zm5 0h1v1h-1zm1 7h1v1h-1zm1 -5h1v1h-1zm4 -2h1v1h-1zm0 7h1v1h-1zm4 -4h1v1h-1zm0 2h1v1h-1zm0 2h1v1h-1zm0 6h1v1h-1zm1 -13h1v1h-1zm0 18h1v1h-1zm3 -26h1v1h-1zm0 18h1v1h-1zm2 -15h1v1h-1zm2 7h1v1h-1zm1 11h1v1h-1zm1 -7h1v1h-1zm1 -1h1v1h-1zm0 2h1v1h-1zm1 -14h1v1h-1zm2 5h1v1h-1zm1 5h1v1h-1zm2 -10h1v1h-1zm0 10h1v1h-1zm1 -1h1v1h-1zm2 3h1v1h-1zm0 4h1v1h-1zm1 -3h1v1h-1zm4 -4h1v1h-1zm1 -3h1v1h-1zm1 -1h1v1h-1zm0 1h1v1h-1zm0 6h1v1h-1zm1 0h1v1h-1zm1 -9h1v1h-1zm0 24h1v1h-1zm1 -17h1v1h-1zm2 13h1v1h-1zm4 -25h1v1h-1zm0 9h1v1h-1zm0 5h1v1h-1zm0 6h1v1h-1zm0 2h1v1h-1zm1 11h1v1h-1zm1 -25h1v1h-1zm0 4h1v1h-1zm1 -4h1v1h-1zm0 7h1v1h-1zm1 -8h1v1h-1zm0 1h1v1h-1zm3 -7h1v1h-1zm0 18h1v1h-1zm1 -10h1v1h-1zm0 2h1v1h-1zm8 4h1v1h-1zm1 -1h1v1h-1zm1 -13h1v1h-1zm2 8h1v1h-1zm0 6h1v1h-1zm2 -10h1v1h-1zm1 4h1v1h-1zm0 2h1v1h-1zm4 0h1v1h-1zm1 0h1v1h-1zm1 -3h1v1h-1zm2 8h1v1h-1zm1 -5h1v1h-1zm0 8h1v1h-1zm2 -21h1v1h-1zm0 17h1v1h-1zm3 -7h1v1h-1zm2 1h1v1h-1zm1 7h1v1h-1zm0 4h1v1h-1zm1 -12h1v1h-1zm2 0h1v1h-1zm1 -6h1v1h-1zm2 14h1v1h-1zm1 -5h1v1h-1zm1 -4h1v1h-1zm0 18h1v1h-1zm1 -10h1v1h-1zm1 3h1v1h-1zm2 -24h1v1h-1zm0 14h1v1h-1zm0 1h1v1h-1zm1 3h1v1h-1zm0 2h1v1h-1zm3 -6h1v1h-1zm2 7h1v1h-1zm2 -1h1v1h-1zm1 -3h1v1h-1zm0 4h1v1h-1zm1 -6h1v1h-1zm1 -14h1v1h-1zm0 9h1v1h-1zm0 7h1v1h-1zm0 14h1v1h-1zm1 -25h1v1h-1zm0 12h1v1h-1zm0 3h1v1h-1zm1 3h1v1h-1zm1 -14h1v1h-1zm1 7h1v1h-1zm3 -2h1v1h-1zm2 0h1v1h-1zm0 5h1v1h-1zm1 -3h1v1h-1zm3 -4h1v1h-1zm0 7h1v1h-1zm1 -12h1v1h-1zm0 17h1v1h-1zm2 -14h1v1h-1zm1 20h1v1h-1zm4 -14h1v1h-1zm0 7h1v1h-1zm2 -10h1v1h-1zm1 6h1v1h-1zm0 5h1v1h-1zm2 -17h1v1h-1zm2 6h1v1h-1zm3 -1h1v1h-1zm1 -10h1v1h-1zm1 15h1v1h-1zm2 4h1v1h-1zm1 -15h1v1h-1zm0 1h1v1h-1zm0 6h1v1h-1zm1 0h1v1h-1zm2 -1h1v1h-1zm3 -3h1v1h-1zm1 7h1v1h-1zm1 -6h1v1h-1zm1 3h1v1h-1zm3 -3h1v1h-1zm0 3h1v1h-1zm1 10h1v1h-1zm3 -11h1v1h-1zm2 4h1v1h-1zm0 5h1v1h-1zm2 -18h1v1h-1zm0 21h1v1h-1zm2 -1h1v1h-1zm1 -16h1v1h-1zm0 10h1v1h-1zm1 -3h1v1h-1zm4 0h1v1h-1zm2 -1h1v1h-1zm1 3h1v1h-1zm5 -3h1v1h-1zm0 4h1v1h-1zm0 10h1v1h-1zm1 -10h1v1h-1zm2 -4h1v1h-1zm0 1h1v1h-1zm0 6h1v1h-1zm1 5h1v1h-1zm1 -11h1v1h-1zm1 -8h1v1h-1zm1 17h1v1h-1zm2 -18h1v1h-1zm1 14h1v1h-1zm1 0h1v1h-1zm1 -7h1v1h-1zm2 -3h1v1h-1zm0 11h1v1h-1zm2 -3h1v1h-1zm0 6h1v1h-1zm1 -2h1v1h-1zm1 -4h1v1h-1zm0 2h1v1h-1zm1 -12h1v1h-1zm0 2h1v1h-1zm0 1h1v1h-1zm1 2h1v1h-1zm0 1h1v1h-1zm1 1h1v1h-1zm0 3h1v1h-1zm1 -1h1v1h-1zm2 1h1v1h-1zm3 -1h1v1h-1zm1 5h1v1h-1zm3 -12h1v1h-1zm0 5h1v1h-1zm0 2h1v1h-1zm1 0h1v1h-1zm1 12h1v1h-1zm7 -11h1v1h-1zm1 -10h1v1h-1zm0 9h1v1h-1zm2 -10h1v1h-1zm2 19h1v1h-1zm1 -4h1v1h-1zm5 -12h1v1h-1zm1 7h1v1h-1zm1 8h1v1h-1zm1 -5h1v1h-1zm4 -17h1v1h-1zm0 12h1v1h-1zm0 6h1v1h-1zm1 -6h1v1h-1zm2 -4h1v1h-1zm1 2h1v1h-1zm1 2h1v1h-1zm1 -4h1v1h-1zm1 -7h1v1h-1zm6 10h1v1h-1zm0 4h1v1h-1zm1 -7h1v1h-1zm1 3h1v1h-1zm1 -33h1v1h-1zm1 36h1v1h-1zm2 -17h1v1h-1zm0 17h1v1h-1zm0 3h1v1h-1zm2 -5h1v1h-1zm0 5h1v1h-1zm1 -5h1v1h-1zm0 14h1v1h-1zm2 -11h1v1h-1zm1 6h1v1h-1zm2 -17h1v1h-1zm3 10h1v1h-1zm0 3h1v1h-1zm1 -7h1v1h-1zm1 0h1v1h-1zm7 -3h1v1h-1zm4 7h1v1h-1zm0 1h1v1h-1zm1 -10h1v1h-1zm3 3h1v1h-1zm0 6h1v1h-1zm1 -3h1v1h-1zm0 8h1v1h-1zm4 -9h1v1h-1zm1 -27h1v1h-1zm0 17h1v1h-1zm1 4h1v1h-1zm0 13h1v1h-1zm5 -9h1v1h-1zm2 7h1v1h-1zm2 -1h1v1h-1zm2 -9h1v1h-1zm1 13h1v1h-1zm1 -3h1v1h-1zm1 -4h1v1h-1zm1 4h1v1h-1zm3 -11h1v1h-1zm2 1h1v1h-1zm0 12h1v1h-1zm5 -9h1v1h-1zm2 0h1v1h-1zm0 7h1v1h-1zm2 -14h1v1h-1zm1 18h1v1h-1zm1 -14h1v1h-1zm1 5h1v1h-1zm0 1h1v1h-1zm1 1h1v1h-1zm1 -7h1v1h-1zm0 12h1v1h-1zm0 2h1v1h-1zm1 -14h1v1h-1zm4 14h1v1h-1zm2 3h1v1h-1zm1 -25h1v1h-1zm0 10h1v1h-1zm1 5h1v1h-1zm1 -7h1v1h-1zm1 10h1v1h-1zm0 2h1v1h-1zm1 -9h1v1h-1zm1 -3h1v1h-1zm0 6h1v1h-1zm1 -4h1v1h-1zm1 -10h1v1h-1zm2 15h1v1h-1zm1 10h1v1h-1zm3 -8h1v1h-1zm1 -4h1v1h-1zm1 -12h1v1h-1zm1 10h1v1h-1zm1 0h1v1h-1zm0 10h1v1h-1zm3 -13h1v1h-1zm0 9h1v1h-1zm2 1h1v1h-1zm3 -8h1v1h-1zm1 -4h1v1h-1zm1 14h1v1h-1zm3 -13h1v1h-1zm0 4h1v1h-1zm0 7h1v1h-1zm1 -19h1v1h-1zm0 12h1v1h-1zm1 3h1v1h-1zm0 1h1v1h-1zm1 11h1v1h-1zm1 -11h1v1h-1zm1 6h1v1h-1zm2 -14h1v1h-1zm2 11h1v1h-1zm1 -17h1v1h-1zm1 6h1v1h-1zm1 19h1v1h-1zm2 -9h1v1h-1zm0 8h1v1h-1zm1 -10h1v1h-1zm2 -4h1v1h-1zm0 13h1v1h-1zm3 -18h1v1h-1zm1 1h1v1h-1zm0 19h1v1h-1zm3 -22h1v1h-1zm3 0h1v1h-1zm1 10h1v1h-1zm3 0h1v1h-1zm0 7h1v1h-1zm1 -14h1v1h-1zm0 6h1v1h-1zm0 7h1v1h-1zm2 0h1v1h-1zm1 -6h1v1h-1zm2 -6h1v1h-1zm0 5h1v1h-1zm3 0h1v1h-1zm1 2h1v1h-1zm2 -11h1v1h-1zm0 7h1v1h-1zm0 7h1v1h-1zm2 -10h1v1h-1zm1 0h1v1h-1zm3 -2h1v1h-1zm0 9h1v1h-1zm3 6h1v1h-1zm3 -13h1v1h-1zm1 0h1v1h-1zm0 3h1v1h-1zm1 -1h1v1h-1zm1 -4h1v1h-1zm0 8h1v1h-1zm2 4h1v1h-1zm1 -12h1v1h-1zm3 5h1v1h-1zm2 -5h1v1h-1zm1 2h1v1h-1zm0 7h1v1h-1zm4 -2h1v1h-1zm3 5h1v1h-1zm2 -12h1v1h-1zm2 -3h1v1h-1zm1 11h1v1h-1zm1 3h1v1h-1zm4 -17h1v1h-1zm0 11h1v1h-1zm7 -16h1v1h-1zm0 18h1v1h-1zm0 2h1v1h-1zm0 6h1v1h-1zm1 -3h1v1h-1zm2 -17h1v1h-1zm1 7h1v1h-1zm0 5h1v1h-1zm1 8h1v1h-1zm1 -3h1v1h-1zm2 -14h1v1h-1zm1 6h1v1h-1zm0 5h1v1h-1zm0 5h1v1h-1zm1 -12h1v1h-1zm0 5h1v1h-1zm1 -6h1v1h-1zm0 8h1v1h-1zm1 7h1v1h-1zm2 -21h1v1h-1zm0 6h1v1h-1zm1 3h1v1h-1zm0 7h1v1h-1zm1 -7h1v1h-1zm0 10h1v1h-1zm1 -10h1v1h-1zm3 -9h1v1h-1zm0 6h1v1h-1zm2 4h1v1h-1zm0 2h1v1h-1zm3 -6h1v1h-1zm1 3h1v1h-1zm1 1h1v1h-1zm1 -3h1v1h-1zm1 -4h1v1h-1zm2 0h1v1h-1zm1 9h1v1h-1zm0 13h1v1h-1zm1 -26h1v1h-1zm0 8h1v1h-1zm0 6h1v1h-1zm1 -3h1v1h-1zm7 -3h1v1h-1zm0 5h1v1h-1zm3 -20h1v1h-1zm1 32h1v1h-1zm1 -12h1v1h-1zm4 1h1v1h-1zm1 0h1v1h-1zm3 7h1v1h-1zm4 -14h1v1h-1zm0 10h1v1h-1zm2 -21h1v1h-1zm0 17h1v1h-1zm0 5h1v1h-1zm4 4h1v1h-1zm3 -2h1v1h-1zm2 -19h1v1h-1zm0 13h1v1h-1zm8 -17h1v1h-1zm1 14h1v1h-1zm3 -5h1v1h-1zm1 1h1v1h-1zm1 -7h1v1h-1zm1 6h1v1h-1zm1 8h1v1h-1zm2 -8h1v1h-1zm1 7h1v1h-1zm1 -6h1v1h-1zm1 14h1v1h-1zm1 -29h1v1h-1zm2 9h1v1h-1zm3 6h1v1h-1zm2 -10h1v1h-1zm1 10h1v1h-1zm1 -11h1v1h-1zm0 8h1v1h-1zm0 24h1v1h-1zm1 -29h1v1h-1zm0 15h1v1h-1zm1 -11h1v1h-1zm1 10h1v1h-1zm4 -3h1v1h-1zm1 1h1v1h-1zm2 -1h1v1h-1zm2 -2h1v1h-1zm1 -4h1v1h-1zm3 7h1v1h-1zm2 6h1v1h-1zm1 -9h1v1h-1zm0 2h1v1h-1zm0 7h1v1h-1zm2 -9h1v1h-1zm1 -2h1v1h-1zm1 7h1v1h-1zm1 0h1v1h-1zm0 2h1v1h-1zm0 3h1v1h-1zm1 -8h1v1h-1zm2 3h1v1h-1zm1 -10h1v1h-1zm3 5h1v1h-1zm2 -8h1v1h-1zm2 4h1v1h-1zm1 0h1v1h-1zm0 2h1v1h-1zm5 4h1v1h-1zm3 -3h1v1h-1zm1 -6h1v1h-1zm0 13h1v1h-1zm5 -14h1v1h-1zm4 7h1v1h-1zm1 -3h1v1h-1zm0 6h1v1h-1zm10 0h1v1h-1zm1 8h1v1h-1zm3 -18h1v1h-1zm2 14h1v1h-1zm2 7h1v1h-1zm2 -11h1v1h-1zm0 8h1v1h-1zm4 -10h1v1h-1zm1 0h1v1h-1zm2 -11h1v1h-1zm0 14h1v1h-1zm0 4h1v1h-1zm2 -7h1v1h-1zm3 6h1v1h-1zm6 -8h1v1h-1zm5 -3h1v1h-1zm3 7h1v1h-1zm3 -3h1v1h-1zm2 1h1v1h-1zm2 -2h1v1h-1zm1 11h1v1h-1zm2 -11h1v1h-1zm1 -5h1v1h-1zm1 3h1v1h-1zm0 3h1v1h-1zm0 6h1v1h-1zm2 -18h1v1h-1zm0 8h1v1h-1zm3 5h1v1h-1zm1 -8h1v1h-1zm1 8h1v1h-1zm1 3h1v1h-1zm2 -1h1v1h-1zm2 4h1v1h-1zm1 -7h1v1h-1zm1 -1h1v1h-1zm4 11h1v1h-1zm1 -11h1v1h-1zm2 12h1v1h-1zm2 -10h1v1h-1zm1 -5h1v1h-1zm4 10h1v1h-1zm2 -25h1v1h-1zm0 26h1v1h-1zm4 -13h1v1h-1zm3 14h1v1h-1zm2 -2h1v1h-1zm1 -14h1v1h-1zm5 5h1v1h-1zm0 7h1v1h-1zm1 -4h1v1h-1zm2 4h1v1h-1zm1 -8h1v1h-1zm7 21h1v1h-1zm1 -18h1v1h-1zm2 8h1v1h-1zm3 0h1v1h-1zm11 -25h1v1h-1zm1 15h1v1h-1zm0 13h1v1h-1zm1 -7h1v1h-1zm1 -4h1v1h-1zm1 -3h1v1h-1zm7 5h1v1h-1zm3 -1h1v1h-1zm1 1h1v1h-1zm2 -4h1v1h-1zm1 7h1v1h-1zm2 -4h1v1h-1zm1 -8h1v1h-1zm5 -4h1v1h-1zm10 2h1v1h-1zm0 10h1v1h-1zm0 4h1v1h-1zm3 2h1v1h-1zm3 -14h1v1h-1zm0 18h1v1h-1zm3 -9h1v1h-1zm3 -1h1v1h-1zm2 0h1v1h-1zm1 -11h1v1h-1zm0 7h1v1h-1zm1 8h1v1h-1zm2 -5h1v1h-1zm2 -7h1v1h-1zm1 8h1v1h-1zm1 -7h1v1h-1zm6 18h1v1h-1zm1 -17h1v1h-1zm1 -4h1v1h-1zm2 6h1v1h-1zm1 -3h1v1h-1zm1 1h1v1h-1zm1 0h1v1h-1zm5 -8h1v1h-1zm9 -3h1v1h-1zm0 18h1v1h-1zm1 -11h1v1h-1zm5 -2h1v1h-1zm7 12h1v1h-1zm0 1h1v1h-1zm1 -2h1v1h-1zm4 -17h1v1h-1zm1 17h1v1h-1zm0 1h1v1h-1zm5 -11h1v1h-1zm0 7h1v1h-1zm6 -4h1v1h-1zm7 8h1v1h-1zm2 -8h1v1h-1zm7 2h1v1h-1zm3 0h1v1h-1zm3 0h1v1h-1zm4 19h1v1h-1zm6 -13h1v1h-1zm4 -14h1v1h-1zm8 2h1v1h-1zm3 2h1v1h-1zm3 -5h1v1h-1zm3 7h1v1h-1zm1 -45h1v1h-1zm3 49h1v1h-1zm5 -10h1v1h-1zm16 3h1v1h-1zm9 3h1v1h-1zm5 1h1v1h-1zm3 6h1v1h-1zm4 -7h1v1h-1zm3 -2h1v1h-1zm0 4h1v1h-1zm3 5h1v1h-1zm4 0h1v1h-1zm15 -6h1v1h-1zm9 4h1v1h-1zm22 4h1v1h-1z" fill="#0080ff"/>
<path d="M55 681h1v1h-1zm0 1h1v1h-1zm0 2h1v1h-1zm1 -12h1v1h-1zm0 5h1v1h-1zm0 5h1v1h-1zm0 6h1v1h-1zm1 -6h1v1h-1zm1 2h1v1h-1zm0 11h1v1h-1zm1 -14h1v1h-1zm0 14h1v1h-1zm1 -17h1v1h-1zm0 8h1v1h-1zm2 -5h1v1h-1zm0 10h1v1h-1zm1 -12h1v1h-1zm0 5h1v1h-1zm0 1h1v1h-1zm1 10h1v1h-1zm1 -21h1v1h-1zm0 8h1v1h-1zm0 11h1v1h-1zm1 -7h1v1h-1zm1 -2h1v1h-1zm1 -2h1v1h-1zm0 4h1v1h-1zm1 -12h1v1h-1zm0 7h1v1h-1zm0 1h1v1h-1zm0 3h1v1h-1zm1 -18h1v1h-1zm0 15h1v1h-1zm0 6h1v1h-1zm0 3h1v1h-1zm0 4h1v1h-1zm1 -16h1v1h-1zm0 16h1v1h-1zm1 -7h1v1h-1zm0 5h1v1h-1zm1 -9h1v1h-1zm0 5h1v1h-1zm0 3h1v1h-1zm0 6h1v1h-1zm3 -16h1v1h-1zm2 -8h1v1h-1zm1 3h1v1h-1zm0 8h1v1h-1zm0 1h1v1h-1zm1 -14h1v1h-1zm0 16h1v1h-1zm2 -7h1v1h-1zm0 11h1v1h-1zm2 -8h1v1h-1zm0 7h1v1h-1zm0 2h1v1h-1zm1 -15h1v1h-1zm1 0h1v1h-1zm0 1h1v1h-1zm2 -2h1v1h-1zm0 4h1v1h-1zm0 10h1v1h-1zm1 -13h1v1h-1zm0 1h1v1h-1zm1 0h1v1h-1zm0 5h1v1h-1zm1 -10h1v1h-1zm4 3h1v1h-1zm0 5h1v1h-1zm0 2h1v1h-1zm0 7h1v1h-1zm1 -17h1v1h-1zm0 3h1v1h-1zm0 2h1v1h-1zm0 2h1v1h-1zm0 12h1v1h-1zm0 2h1v1h-1zm1 0h1v1h-1zm1 -16h1v1h-1zm0 7h1v1h-1zm1 -8h1v1h-1zm0 6h1v1h-1zm1 -2h1v1h-1zm2 -8h1v1h-1zm0 1h1v1h-1zm0 2h1v1h-1zm0 1h1v1h-1zm0 7h1v1h-1zm0 1h1v1h-1zm0 12h1v1h-1zm1 -16h1v1h-1zm1 -5h1v1h-1zm0 4h1v1h-1zm0 7h1v1h-1zm0 3h1v1h-1zm0 8h1v1h-1zm2 -18h1v1h-1zm0 7h1v1h-1zm0 4h1v1h-1zm1 -21h1v1h-1zm0 10h1v1h-1zm0 5h1v1h-1zm1 -14h1v1h-1zm0 19h1v1h-1zm1 -13h1v1h-1zm1 -7h1v1h-1zm0 7h1v1h-1zm0 13h1v1h-1zm2 -21h1v1h-1zm0 16h1v1h-1zm1 -54h1v1h-1zm1 53h1v1h-1zm1 -13h1v1h-1zm0 3h1v1h-1zm0 4h1v1h-1zm0 7h1v1h-1zm0 7h1v1h-1zm1 -12h1v1h-1zm2 3h1v1h-1zm0 1h1v1h-1zm1 -7h1v1h-1zm0 3h1v1h-1zm2 1h1v1h-1zm0 10h1v1h-1zm1 -21h1v1h-1zm0 7h1v1h-1zm1 -3h1v1h-1zm0 11h1v1h-1zm1 -1h1v1h-1zm1 4h1v1h-1zm1 -14h1v1h-1zm0 10h1v1h-1zm2 -8h1v1h-1zm1 2h1v1h-1zm0 2h1v1h-1zm2 4h1v1h-1zm2 7h1v1h-1zm1 -31h1v1h-1zm0 9h1v1h-1zm0 4h1v1h-1zm0 4h1v1h-1zm1 -7h1v1h-1zm1 -37h1v1h-1zm1 44h1v1h-1zm0 8h1v1h-1zm2 -4h1v1h-1zm2 -10h1v1h-1zm0 10h1v1h-1zm1 -1h1v1h-1zm1 1h1v1h-1zm1 -14h1v1h-1zm0 23h1v1h-1zm1 -5h1v1h-1zm1 -12h1v1h-1zm1 0h1v1h-1zm0 1h1v1h-1zm1 3h1v1h-1zm1 6h1v1h-1zm1 -9h1v1h-1zm0 4h1v1h-1zm0 12h1v1h-1zm1 -17h1v1h-1zm0 3h1v1h-1zm0 5h1v1h-1zm2 -4h1v1h-1zm1 -1h1v1h-1zm0 8h1v1h-1zm0 13h1v1h-1zm1 -24h1v1h-1zm1 -3h1v1h-1zm0 1h1v1h-1zm0 9h1v1h-1zm0 14h1v1h-1zm1 -20h1v1h-1zm0 13h1v1h-1zm0 1h1v1h-1zm1 -12h1v1h-1zm0 5h1v1h-1zm1 0h1v1h-1zm0 3h1v1h-1zm1 -10h1v1h-1zm0 4h1v1h-1zm0 2h1v1h-1zm1 -6h1v1h-1zm0 2h1v1h-1zm0 1h1v1h-1zm1 -4h1v1h-1zm0 1h1v1h-1zm1 0h1v1h-1zm1 11h1v1h-1zm1 -11h1v1h-1zm0 2h1v1h-1zm0 8h1v1h-1zm1 -3h1v1h-1zm0 3h1v1h-1zm0 3h1v1h-1zm1 -11h1v1h-1zm0 5h1v1h-1zm1 -3h1v1h-1zm0 6h1v1h-1zm1 -7h1v1h-1zm0 4h1v1h-1zm1 -5h1v1h-1zm0 14h1v1h-1zm1 -19h1v1h-1zm0 3h1v1h-1zm0 13h1v1h-1zm0 4h1v1h-1zm1 -18h1v1h-1zm0 11h1v1h-1zm1 -4h1v1h-1zm0 1h1v1h-1zm2 -1h1v1h-1zm0 1h1v1h-1zm1 -8h1v1h-1zm0 5h1v1h-1zm0 3h1v1h-1zm0 3h1v1h-1zm1 7h1v1h-1zm1 -7h1v1h-1zm0 1h1v1h-1zm1 3h1v1h-1zm1 -17h1v1h-1zm3 -1h1v1h-1zm1 0h1v1h-1zm0 11h1v1h-1zm1 -12h1v1h-1zm0 19h1v1h-1zm1 -17h1v1h-1zm0 12h1v1h-1zm0 7h1v1h-1zm1 -16h1v1h-1zm0 9h1v1h-1zm0 4h1v1h-1zm1 -14h1v1h-1zm0 5h1v1h-1zm0 9h1v1h-1zm1 -4h1v1h-1zm2 -7h1v1h-1zm1 -2h1v1h-1zm1 6h1v1h-1zm0 14h1v1h-1zm1 -29h1v1h-1zm0 2h1v1h-1zm1 18h1v1h-1zm1 -7h1v1h-1zm0 5h1v1h-1zm0 4h1v1h-1zm1 -10h1v1h-1zm1 -12h1v1h-1zm0 13h1v1h-1zm1 5h1v1h-1zm0 1h1v1h-1zm1 -7h1v1h-1zm2 0h1v1h-1zm0 7h1v1h-1zm0 3h1v1h-1zm3 -7h1v1h-1zm1 -14h1v1h-1zm0 4h1v1h-1zm0 17h1v1h-1zm2 -16h1v1h-1zm1 9h1v1h-1zm0 7h1v1h-1zm1 -13h1v1h-1zm0 2h1v1h-1zm0 2h1v1h-1zm0 5h1v1h-1zm2 -2h1v1h-1zm1 0h1v1h-1zm1 -10h1v1h-1zm0 2h1v1h-1zm0 21h1v1h-1zm1 -4h1v1h-1zm1 -23h1v1h-1zm1 7h1v1h-1zm1 -1h1v1h-1zm3 3h1v1h-1zm0 4h1v1h-1zm0 3h1v1h-1zm1 -9h1v1h-1zm0 4h1v1h-1zm1 -7h1v1h-1zm0 10h1v1h-1zm1 -5h1v1h-1zm1 9h1v1h-1zm1 7h1v1h-1zm2 -29h1v1h-1zm0 8h1v1h-1zm1 6h1v1h-1zm1 3h1v1h-1zm2 -10h1v1h-1zm0 3h1v1h-1zm1 3h1v1h-1zm0 5h1v1h-1zm0 9h1v1h-1zm2 -17h1v1h-1zm0 4h1v1h-1zm1 -7h1v1h-1zm0 10h1v1h-1zm2 -6h1v1h-1zm0 4h1v1h-1zm0 2h1v1h-1zm0 3h1v1h-1zm1 -10h1v1h-1zm0 3h1v1h-1zm0 1h1v1h-1zm0 11h1v1h-1zm2 -17h1v1h-1zm0 5h1v1h-1zm1 2h1v1h-1zm1 -9h1v1h-1zm2 -7h1v1h-1zm0 14h1v1h-1zm1 1h1v1h-1zm0 1h1v1h-1zm0 19h1v1h-1zm1 -26h1v1h-1zm0 2h1v1h-1zm1 10h1v1h-1zm1 -10h1v1h-1zm2 -3h1v1h-1zm0 18h1v1h-1zm1 -4h1v1h-1zm1 -11h1v1h-1zm1 5h1v1h-1zm0 13h1v1h-1zm1 -10h1v1h-1zm1 -7h1v1h-1zm0 4h1v1h-1zm1 -1h1v1h-1zm0 8h1v1h-1zm0 6h1v1h-1zm1 -14h1v1h-1zm0 8h1v1h-1zm1 -1h1v1h-1zm0 3h1v1h-1zm2 -17h1v1h-1zm1 6h1v1h-1zm0 1h1v1h-1zm0 1h1v1h-1zm1 3h1v1h-1zm1 2h1v1h-1zm1 -6h1v1h-1zm1 -14h1v1h-1zm1 8h1v1h-1zm1 -2h1v1h-1zm0 5h1v1h-1zm1 7h1v1h-1zm1 0h1v1h-1zm1 2h1v1h-1zm1 -16h1v1h-1zm0 7h1v1h-1zm1 -1h1v1h-1zm3 -8h1v1h-1zm0 13h1v1h-1zm0 5h1v1h-1zm3 -3h1v1h-1zm0 1h1v1h-1zm1 -5h1v1h-1zm1 16h1v1h-1zm1 -19h1v1h-1zm0 4h1v1h-1zm0 1h1v1h-1zm1 -15h1v1h-1zm0 13h1v1h-1zm0 4h1v1h-1zm0 5h1v1h-1zm1 -8h1v1h-1zm1 1h1v1h-1zm0 9h1v1h-1zm1 -16h1v1h-1zm0 3h1v1h-1zm0 9h1v1h-1zm1 -12h1v1h-1zm0 10h1v1h-1zm1 -5h1v1h-1zm3 4h1v1h-1zm1 -11h1v1h-1zm0 8h1v1h-1zm1 -6h1v1h-1zm0 5h1v1h-1zm0 7h1v1h-1zm2 -6h1v1h-1zm0 1h1v1h-1zm0 3h1v1h-1zm1 -1h1v1h-1zm0 3h1v1h-1zm2 -17h1v1h-1zm0 8h1v1h-1zm0 2h1v1h-1zm0 12h1v1h-1zm1 -7h1v1h-1zm1 0h1v1h-1zm0 3h1v1h-1zm1 0h1v1h-1zm1 -8h1v1h-1zm1 8h1v1h-1zm1 -21h1v1h-1zm0 8h1v1h-1zm0 7h1v1h-1zm3 0h1v1h-1zm0 13h1v1h-1zm1 -8h1v1h-1zm1 -14h1v1h-1zm0 2h1v1h-1zm0 3h1v1h-1zm0 6h1v1h-1zm0 5h1v1h-1zm0 7h1v1h-1zm4 -11h1v1h-1zm2 -16h1v1h-1zm0 15h1v1h-1zm1 -9h1v1h-1zm0 5h1v1h-1zm1 -3h1v1h-1zm0 10h1v1h-1zm1 -12h1v1h-1zm0 5h1v1h-1zm1 -5h1v1h-1zm1 -4h1v1h-1zm0 13h1v1h-1zm1 -3h1v1h-1zm1 -11h1v1h-1zm1 -1h1v1h-1zm0 8h1v1h-1zm1 -2h1v1h-1zm0 2h1v1h-1zm0 3h1v1h-1zm0 15h1v1h-1zm1 -26h1v1h-1zm1 2h1v1h-1zm1 14h1v1h-1zm0 4h1v1h-1zm1 -12h1v1h-1zm0 3h1v1h-1zm1 -2h1v1h-1zm1 -12h1v1h-1zm0 21h1v1h-1zm2 -12h1v1h-1zm0 13h1v1h-1zm1 -14h1v1h-1zm0 3h1v1h-1zm0 12h1v1h-1zm3 -1h1v1h-1zm1 -13h1v1h-1zm0 3h1v1h-1zm1 2h1v1h-1zm1 2h1v1h-1zm2 -8h1v1h-1zm0 11h1v1h-1zm0 6h1v1h-1zm2 -10h1v1h-1zm0 7h1v1h-1zm1 -11h1v1h-1zm0 4h1v1h-1zm0 6h1v1h-1zm1 1h1v1h-1zm0 1h1v1h-1zm1 -11h1v1h-1zm1 -7h1v1h-1zm1 11h1v1h-1zm1 -9h1v1h-1zm0 15h1v1h-1zm2 -14h1v1h-1zm0 4h1v1h-1zm0 4h1v1h-1zm1 -5h1v1h-1zm1 -4h1v1h-1zm0 1h1v1h-1zm1 -10h1v1h-1zm1 11h1v1h-1zm2 14h1v1h-1zm1 -12h1v1h-1zm0 3h1v1h-1zm2 -2h1v1h-1zm0 3h1v1h-1zm3 -4h1v1h-1zm2 -4h1v1h-1zm5 7h1v1h-1zm2 4h1v1h-1zm1 5h1v1h-1zm1 -9h1v1h-1zm0 9h1v1h-1zm1 -23h1v1h-1zm0 7h1v1h-1zm0 4h1v1h-1zm0 5h1v1h-1zm2 -5h1v1h-1zm0 4h1v1h-1zm1 -7h1v1h-1zm0 8h1v1h-1zm0 6h1v1h-1zm0 3h1v1h-1zm1 -16h1v1h-1zm1 0h1v1h-1zm0 13h1v1h-1zm1 -11h1v1h-1zm1 3h1v1h-1zm1 4h1v1h-1zm1 -11h1v1h-1zm0 2h1v1h-1zm1 0h1v1h-1zm0 7h1v1h-1zm1 -8h1v1h-1zm2 -1h1v1h-1zm0 1h1v1h-1zm1 3h1v1h-1zm1 12h1v1h-1zm3 -12h1v1h-1zm0 17h1v1h-1zm2 -17h1v1h-1zm1 4h1v1h-1zm2 -8h1v1h-1zm0 2h1v1h-1zm1 -4h1v1h-1zm0 17h1v1h-1zm1 -15h1v1h-1zm0 4h1v1h-1zm0 15h1v1h-1zm2 -14h1v1h-1zm1 0h1v1h-1zm1 2h1v1h-1zm1 2h1v1h-1zm0 3h1v1h-1zm1 -4h1v1h-1zm1 -7h1v1h-1zm1 6h1v1h-1zm0 5h1v1h-1zm1 -7h1v1h-1zm0 2h1v1h-1zm1 -9h1v1h-1zm1 4h1v1h-1zm0 6h1v1h-1zm1 -7h1v1h-1zm0 6h1v1h-1zm0 2h1v1h-1zm2 -4h1v1h-1zm3 -1h1v1h-1zm1 8h1v1h-1zm2 -12h1v1h-1zm0 2h1v1h-1zm1 -8h1v1h-1zm0 2h1v1h-1zm0 11h1v1h-1zm1 -6h1v1h-1zm0 3h1v1h-1zm1 -10h1v1h-1zm0 11h1v1h-1zm1 -8h1v1h-1zm3 18h1v1h-1zm2 -11h1v1h-1zm0 4h1v1h-1zm0 6h1v1h-1zm1 -17h1v1h-1zm1 1h1v1h-1zm0 7h1v1h-1zm1 -7h1v1h-1zm1 -2h1v1h-1zm1 -7h1v1h-1zm0 11h1v1h-1zm0 4h1v1h-1zm1 -6h1v1h-1zm0 3h1v1h-1zm0 3h1v1h-1zm1 3h1v1h-1zm1 -9h1v1h-1zm1 -4h1v1h-1zm1 4h1v1h-1zm0 6h1v1h-1zm1 -4h1v1h-1zm2 -4h1v1h-1zm0 9h1v1h-1zm1 6h1v1h-1zm1 -14h1v1h-1zm1 3h1v1h-1zm0 12h1v1h-1zm1 -21h1v1h-1zm0 25h1v1h-1zm1 -16h1v1h-1zm0 8h1v1h-1zm3 -10h1v1h-1zm0 14h1v1h-1zm1 -15h1v1h-1zm0 19h1v1h-1zm2 -7h1v1h-1zm0 2h1v1h-1zm1 -4h1v1h-1zm1 -11h1v1h-1zm0 1h1v1h-1zm0 19h1v1h-1zm1 -27h1v1h-1zm0 11h1v1h-1zm2 7h1v1h-1zm1 -7h1v1h-1zm0 16h1v1h-1zm1 -11h1v1h-1zm3 -9h1v1h-1zm0 2h1v1h-1zm0 9h1v1h-1zm2 -5h1v1h-1zm0 7h1v1h-1zm1 0h1v1h-1zm1 0h1v1h-1zm2 -12h1v1h-1zm0 1h1v1h-1zm2 7h1v1h-1zm2 -8h1v1h-1zm1 -6h1v1h-1zm0 14h1v1h-1zm1 9h1v1h-1zm2 -6h1v1h-1zm1 -17h1v1h-1zm1 10h1v1h-1zm2 -1h1v1h-1zm0 4h1v1h-1zm1 -4h1v1h-1zm0 8h1v1h-1zm1 -4h1v1h-1zm1 4h1v1h-1zm2 -17h1v1h-1zm1 17h1v1h-1zm0 3h1v1h-1zm1 -6h1v1h-1zm1 -3h1v1h-1zm1 -4h1v1h-1zm1 0h1v1h-1zm0 13h1v1h-1zm1 -9h1v1h-1zm3 -5h1v1h-1zm1 8h1v1h-1zm1 -4h1v1h-1zm0 1h1v1h-1zm1 -8h1v1h-1zm1 13h1v1h-1zm2 -10h1v1h-1zm0 10h1v1h-1zm0 2h1v1h-1zm1 -4h1v1h-1zm4 2h1v1h-1zm0 4h1v1h-1zm3 -2h1v1h-1zm1 -4h1v1h-1zm0 3h1v1h-1zm1 -14h1v1h-1zm0 11h1v1h-1zm1 -7h1v1h-1zm0 3h1v1h-1zm0 6h1v1h-1zm1 -5h1v1h-1zm1 -4h1v1h-1zm0 3h1v1h-1zm1 -5h1v1h-1zm1 8h1v1h-1zm1 0h1v1h-1zm0 5h1v1h-1zm1 -5h1v1h-1zm4 -18h1v1h-1zm0 22h1v1h-1zm1 -8h1v1h-1zm0 9h1v1h-1zm0 5h1v1h-1zm1 -10h1v1h-1zm0 4h1v1h-1zm1 -10h1v1h-1zm0 3h1v1h-1zm2 3h1v1h-1zm1 -3h1v1h-1zm0 3h1v1h-1zm1 -2h1v1h-1zm1 -40h1v1h-1zm0 39h1v1h-1zm1 -1h1v1h-1zm0 2h1v1h-1zm2 5h1v1h-1zm1 -14h1v1h-1zm1 8h1v1h-1zm1 8h1v1h-1zm4 3h1v1h-1zm2 -10h1v1h-1zm1 3h1v1h-1zm0 4h1v1h-1zm1 -8h1v1h-1zm0 3h1v1h-1zm1 -14h1v1h-1zm1 25h1v1h-1zm2 -22h1v1h-1zm0 3h1v1h-1zm0 16h1v1h-1zm1 -7h1v1h-1zm0 3h1v1h-1zm0 7h1v1h-1zm1 -8h1v1h-1zm1 -5h1v1h-1zm0 3h1v1h-1zm1 -19h1v1h-1zm9 12h1v1h-1zm0 10h1v1h-1zm0 3h1v1h-1zm2 -9h1v1h-1zm2 -6h1v1h-1zm1 0h1v1h-1zm1 8h1v1h-1zm1 0h1v1h-1zm0 1h1v1h-1zm1 -3h1v1h-1zm0 5h1v1h-1zm2 -5h1v1h-1zm0 3h1v1h-1zm2 4h1v1h-1zm1 -4h1v1h-1zm0 3h1v1h-1zm1 0h1v1h-1zm1 1h1v1h-1zm2 -9h1v1h-1zm0 5h1v1h-1zm1 2h1v1h-1zm1 7h1v1h-1zm1 -14h1v1h-1zm1 7h1v1h-1zm0 2h1v1h-1zm3 -15h1v1h-1zm0 10h1v1h-1zm1 10h1v1h-1zm1 -12h1v1h-1zm0 7h1v1h-1zm1 -9h1v1h-1zm2 4h1v1h-1zm1 -3h1v1h-1zm1 -8h1v1h-1zm1 9h1v1h-1zm1 -5h1v1h-1zm0 17h1v1h-1zm1 -5h1v1h-1zm1 -12h1v1h-1zm0 8h1v1h-1zm0 2h1v1h-1zm1 -5h1v1h-1zm2 7h1v1h-1zm1 3h1v1h-1zm1 -7h1v1h-1zm2 -7h1v1h-1zm1 3h1v1h-1zm2 8h1v1h-1zm2 0h1v1h-1zm1 -8h1v1h-1zm0 11h1v1h-1zm2 3h1v1h-1zm2 -15h1v1h-1zm1 12h1v1h-1zm1 -19h1v1h-1zm0 15h1v1h-1zm1 -8h1v1h-1zm1 -9h1v1h-1zm0 6h1v1h-1zm3 8h1v1h-1zm0 3h1v1h-1zm2 -1h1v1h-1zm2 -5h1v1h-1zm1 -12h1v1h-1zm0 8h1v1h-1zm1 7h1v1h-1zm1 -11h1v1h-1zm0 6h1v1h-1zm1 -2h1v1h-1zm1 4h1v1h-1zm1 -15h1v1h-1zm0 21h1v1h-1zm1 -12h1v1h-1zm4 -6h1v1h-1zm1 10h1v1h-1zm1 7h1v1h-1zm2 -6h1v1h-1zm0 4h1v1h-1zm4 -11h1v1h-1zm3 10h1v1h-1zm1 -4h1v1h-1zm0 5h1v1h-1zm0 10h1v1h-1zm3 -6h1v1h-1zm1 -7h1v1h-1zm0 2h1v1h-1zm1 -10h1v1h-1zm0 4h1v1h-1zm0 3h1v1h-1zm2 7h1v1h-1zm2 -14h1v1h-1zm0 4h1v1h-1zm0 2h1v1h-1zm0 9h1v1h-1zm1 -13h1v1h-1zm0 8h1v1h-1zm2 10h1v1h-1zm1 -5h1v1h-1zm4 -1h1v1h-1zm1 -15h1v1h-1zm0 11h1v1h-1zm1 -10h1v1h-1zm1 0h1v1h-1zm1 7h1v1h-1zm1 -4h1v1h-1zm2 4h1v1h-1zm1 -5h1v1h-1zm2 -5h1v1h-1zm2 17h1v1h-1zm0 3h1v1h-1zm1 -11h1v1h-1zm1 2h1v1h-1zm1 9h1v1h-1zm3 -7h1v1h-1zm2 -4h1v1h-1zm1 -3h1v1h-1zm1 0h1v1h-1zm0 4h1v1h-1zm1 -4h1v1h-1zm3 -1h1v1h-1zm0 11h1v1h-1zm1 -6h1v1h-1zm2 -3h1v1h-1zm1 -4h1v1h-1zm2 11h1v1h-1zm2 6h1v1h-1zm2 -17h1v1h-1zm1 2h1v1h-1zm0 13h1v1h-1zm1 -1h1v1h-1zm2 -22h1v1h-1zm3 14h1v1h-1zm2 5h1v1h-1zm4 -5h1v1h-1zm3 -4h1v1h-1zm0 5h1v1h-1zm2 3h1v1h-1zm1 -10h1v1h-1zm1 0h1v1h-1zm3 8h1v1h-1zm1 13h1v1h-1zm2 -21h1v1h-1zm2 8h1v1h-1zm1 -1h1v1h-1zm1 -4h1v1h-1zm2 -8h1v1h-1zm0 5h1v1h-1zm0 13h1v1h-1zm3 -5h1v1h-1zm2 -1h1v1h-1zm2 -7h1v1h-1zm0 6h1v1h-1zm2 -11h1v1h-1zm1 5h1v1h-1zm0 4h1v1h-1zm4 14h1v1h-1zm2 -14h1v1h-1zm0 16h1v1h-1zm1 -20h1v1h-1zm4 13h1v1h-1zm1 8h1v1h-1zm1 -25h1v1h-1zm0 7h1v1h-1zm1 1h1v1h-1zm1 10h1v1h-1zm0 1h1v1h-1zm3 -15h1v1h-1zm3 -4h1v1h-1zm1 7h1v1h-1zm0 4h1v1h-1zm1 -10h1v1h-1zm0 17h1v1h-1zm1 -10h1v1h-1zm5 0h1v1h-1zm0 2h1v1h-1zm3 -16h1v1h-1zm0 6h1v1h-1zm1 6h1v1h-1zm1 6h1v1h-1zm0 6h1v1h-1zm1 -6h1v1h-1zm3 -2h1v1h-1zm1 -7h1v1h-1zm4 16h1v1h-1zm0 2h1v1h-1zm1 -18h1v1h-1zm0 7h1v1h-1zm2 -6h1v1h-1zm0 3h1v1h-1zm2 -11h1v1h-1zm0 11h1v1h-1zm1 -4h1v1h-1zm1 3h1v1h-1zm0 2h1v1h-1zm1 3h1v1h-1zm0 11h1v1h-1zm2 -7h1v1h-1zm6 -5h1v1h-1zm4 -6h1v1h-1zm1 11h1v1h-1zm2 -9h1v1h-1zm0 6h1v1h-1zm1 -5h1v1h-1zm6 -4h1v1h-1zm0 4h1v1h-1zm1 1h1v1h-1zm2 2h1v1h-1zm3 -6h1v1h-1zm1 -5h1v1h-1zm0 9h1v1h-1zm1 7h1v1h-1zm1 -3h1v1h-1zm1 0h1v1h-1zm3 -8h1v1h-1zm1 2h1v1h-1zm3 2h1v1h-1zm1 -1h1v1h-1zm0 5h1v1h-1zm0 10h1v1h-1zm4 -8h1v1h-1zm1 -8h1v1h-1zm0 12h1v1h-1zm1 -24h1v1h-1zm1 10h1v1h-1zm0 11h1v1h-1zm1 -5h1v1h-1zm1 1h1v1h-1zm3 -15h1v1h-1zm0 5h1v1h-1zm3 16h1v1h-1zm3 -23h1v1h-1zm6 5h1v1h-1zm1 9h1v1h-1zm2 -5h1v1h-1zm1 7h1v1h-1zm4 -6h1v1h-1zm4 -1h1v1h-1zm0 9h1v1h-1zm5 -16h1v1h-1zm1 15h1v1h-1zm1 -7h1v1h-1zm1 3h1v1h-1zm3 4h1v1h-1zm1 -11h1v1h-1zm0 8h1v1h-1zm1 -2h1v1h-1zm0 12h1v1h-1zm1 -21h1v1h-1zm1 7h1v1h-1zm3 7h1v1h-1zm1 4h1v1h-1zm2 -11h1v1h-1zm2 -11h1v1h-1zm3 19h1v1h-1zm0 2h1v1h-1zm1 5h1v1h-1zm2 -22h1v1h-1zm2 6h1v1h-1zm2 7h1v1h-1zm1 2h1v1h-1zm2 -12h1v1h-1zm2 0h1v1h-1zm1 0h1v1h-1zm0 1h1v1h-1zm2 -7h1v1h-1zm1 9h1v1h-1zm1 11h1v1h-1zm1 8h1v1h-1zm1 -4h1v1h-1zm1 -15h1v1h-1zm5 4h1v1h-1zm0 5h1v1h-1zm1 -4h1v1h-1zm3 -7h1v1h-1zm2 -9h1v1h-1zm0 12h1v1h-1zm2 2h1v1h-1zm0 12h1v1h-1zm2 -6h1v1h-1zm2 -18h1v1h-1zm2 12h1v1h-1zm2 9h1v1h-1zm5 -12h1v1h-1zm0 11h1v1h-1zm3 0h1v1h-1zm3 1h1v1h-1zm2 -9h1v1h-1zm0 2h1v1h-1zm0 4h1v1h-1zm3 14h1v1h-1zm3 -73h1v1h-1zm3 39h1v1h-1zm0 15h1v1h-1zm1 -4h1v1h-1zm3 3h1v1h-1zm1 -2h1v1h-1zm5 0h1v1h-1zm1 -4h1v1h-1zm0 10h1v1h-1zm4 0h1v1h-1zm0 9h1v1h-1zm1 -15h1v1h-1zm2 -3h1v1h-1zm1 17h1v1h-1zm1 -6h1v1h-1zm1 0h1v1h-1zm1 -11h1v1h-1zm2 6h1v1h-1zm1 -6h1v1h-1zm0 2h1v1h-1zm5 1h1v1h-1zm1 2h1v1h-1zm2 -3h1v1h-1zm1 4h1v1h-1zm1 1h1v1h-1zm1 -4h1v1h-1zm4 2h1v1h-1zm0 2h1v1h-1zm2 -9h1v1h-1zm1 4h1v1h-1zm3 4h1v1h-1zm1 -6h1v1h-1zm1 3h1v1h-1zm2 -5h1v1h-1zm2 4h1v1h-1zm1 9h1v1h-1zm2 -13h1v1h-1zm1 11h1v1h-1zm1 -10h1v1h-1zm7 1h1v1h-1zm0 13h1v1h-1zm2 -7h1v1h-1zm2 -17h1v1h-1zm1 13h1v1h-1zm2 1h1v1h-1zm0 3h1v1h-1zm1 -4h1v1h-1zm1 -9h1v1h-1zm0 3h1v1h-1zm0 21h1v1h-1zm1 -19h1v1h-1zm1 5h1v1h-1zm2 0h1v1h-1zm2 10h1v1h-1zm3 -6h1v1h-1zm3 -1h1v1h-1zm0 4h1v1h-1zm0 1h1v1h-1zm2 -18h1v1h-1zm3 10h1v1h-1zm2 7h1v1h-1zm1 1h1v1h-1zm2 -22h1v1h-1zm0 17h1v1h-1zm0 3h1v1h-1zm1 2h1v1h-1zm3 -25h1v1h-1zm7 5h1v1h-1zm0 14h1v1h-1zm1 1h1v1h-1zm0 11h1v1h-1zm1 1h1v1h-1zm1 -8h1v1h-1zm1 -14h1v1h-1zm0 13h1v1h-1zm2 -13h1v1h-1zm0 13h1v1h-1zm0 1h1v1h-1zm1 3h1v1h-1zm2 -10h1v1h-1zm1 -1h1v1h-1zm2 1h1v1h-1zm1 -4h1v1h-1zm0 8h1v1h-1zm1 -1h1v1h-1zm2 1h1v1h-1zm1 -9h1v1h-1zm1 4h1v1h-1zm1 16h1v1h-1zm2 -15h1v1h-1zm2 -1h1v1h-1zm0 7h1v1h-1zm1 5h1v1h-1zm3 -15h1v1h-1zm1 1h1v1h-1zm3 3h1v1h-1zm1 -7h1v1h-1zm5 9h1v1h-1zm5 12h1v1h-1zm1 -24h1v1h-1zm0 12h1v1h-1zm0 4h1v1h-1zm4 -6h1v1h-1zm2 0h1v1h-1zm3 -4h1v1h-1zm0 14h1v1h-1zm2 -21h1v1h-1zm1 8h1v1h-1zm1 -59h1v1h-1zm0 70h1v1h-1zm1 -9h1v1h-1zm3 0h1v1h-1zm0 4h1v1h-1zm1 7h1v1h-1zm2 -3h1v1h-1zm0 3h1v1h-1zm0 1h1v1h-1zm3 -21h1v1h-1zm7 12h1v1h-1zm0 6h1v1h-1zm2 -4h1v1h-1zm1 4h1v1h-1zm1 -5h1v1h-1zm10 -3h1v1h-1zm1 3h1v1h-1zm1 -10h1v1h-1zm1 6h1v1h-1zm3 5h1v1h-1zm0 2h1v1h-1zm1 -3h1v1h-1zm1 1h1v1h-1zm1 -12h1v1h-1zm0 10h1v1h-1zm2 2h1v1h-1zm4 6h1v1h-1zm1 -4h1v1h-1zm6 -20h1v1h-1zm0 13h1v1h-1zm0 5h1v1h-1zm3 6h1v1h-1zm1 -14h1v1h-1zm5 14h1v1h-1zm1 -18h1v1h-1zm3 -3h1v1h-1zm1 3h1v1h-1zm0 11h1v1h-1zm0 8h1v1h-1zm1 -11h1v1h-1zm3 -5h1v1h-1zm2 8h1v1h-1zm2 -3h1v1h-1zm2 11h1v1h-1zm1 -19h1v1h-1zm0 8h1v1h-1zm7 4h1v1h-1zm2 9h1v1h-1zm1 -17h1v1h-1zm6 -4h1v1h-1zm5 10h1v1h-1zm0 9h1v1h-1zm5 -18h1v1h-1zm3 13h1v1h-1zm1 -18h1v1h-1zm2 14h1v1h-1zm1 1h1v1h-1zm1 -1h1v1h-1zm0 8h1v1h-1zm1 -15h1v1h-1zm0 8h1v1h-1zm1 -3h1v1h-1zm1 -5h1v1h-1zm1 -2h1v1h-1zm0 14h1v1h-1zm1 -8h1v1h-1zm4 1h1v1h-1zm3 -7h1v1h-1zm0 13h1v1h-1zm3 -4h1v1h-1zm2 -27h1v1h-1zm4 22h1v1h-1zm0 3h1v1h-1zm3 4h1v1h-1zm1 4h1v1h-1zm1 7h1v1h-1zm1 0h1v1h-1zm11 -25h1v1h-1zm0 13h1v1h-1zm3 -6h1v1h-1zm0 10h1v1h-1zm3 -17h1v1h-1zm3 17h1v1h-1zm4 -14h1v1h-1zm0 10h1v1h-1zm1 -13h1v1h-1zm0 6h1v1h-1zm0 6h1v1h-1zm0 4h1v1h-1zm10 -11h1v1h-1zm0 1h1v1h-1zm4 1h1v1h-1zm4 -5h1v1h-1zm2 -3h1v1h-1zm3 19h1v1h-1zm1 -22h1v1h-1zm1 17h1v1h-1zm2 7h1v1h-1zm5 0h1v1h-1zm3 -21h1v1h-1zm3 -4h1v1h-1zm2 -2h1v1h-1zm0 27h1v1h-1zm1 -28h1v1h-1zm1 6h1v1h-1zm0 2h1v1h-1zm1 6h1v1h-1zm1 8h1v1h-1zm0 7h1v1h-1zm3 -16h1v1h-1zm2 -9h1v1h-1zm2 9h1v1h-1zm2 -12h1v1h-1zm2 3h1v1h-1zm1 0h1v1h-1zm8 20h1v1h-1zm6 -11h1v1h-1zm0 5h1v1h-1zm5 -11h1v1h-1zm0 4h1v1h-1zm1 7h1v1h-1zm1 -10h1v1h-1zm3 5h1v1h-1zm9 2h1v1h-1zm6 7h1v1h-1zm2 -11h1v1h-1zm0 4h1v1h-1zm7 -2h1v1h-1zm0 5h1v1h-1zm2 -8h1v1h-1zm3 15h1v1h-1zm5 4h1v1h-1zm5 -19h1v1h-1zm6 15h1v1h-1zm10 -25h1v1h-1zm1 15h1v1h-1zm11 11h1v1h-1zm4 -6h1v1h-1zm1 1h1v1h-1zm3 1h1v1h-1zm2 -11h1v1h-1zm0 6h1v1h-1zm33 1h1v1h-1zm13 -4h1v1h-1zm3 0h1v1h-1zm1 8h1v1h-1zm22 -16h1v1h-1zm5 15h1v1h-1zm16 -1h1v1h-1z" fill="#00ffff"/>
<path d="M55 699h1v1h-1zm0 4h1v1h-1zm1 -1h1v1h-1zm1 -7h1v1h-1zm0 7h1v1h-1zm1 -3h1v1h-1zm0 4h1v1h-1zm0 1h1v1h-1zm1 -12h1v1h-1zm0 3h1v1h-1zm0 1h1v1h-1zm0 2h1v1h-1zm0 2h1v1h-1zm2 0h1v1h-1zm0 3h1v1h-1zm1 -5h1v1h-1zm1 1h1v1h-1zm1 0h1v1h-1zm0 4h1v1h-1zm0 1h1v1h-1zm1 -6h1v1h-1zm3 5h1v1h-1zm1 -10h1v1h-1zm0 3h1v1h-1zm1 2h1v1h-1zm0 5h1v1h-1zm1 4h1v1h-1zm1 -8h1v1h-1zm2 -1h1v1h-1zm1 1h1v1h-1zm1 -3h1v1h-1zm0 2h1v1h-1zm2 1h1v1h-1zm1 3h1v1h-1zm1 -4h1v1h-1zm2 -5h1v1h-1zm0 5h1v1h-1zm1 0h1v1h-1zm2 -3h1v1h-1zm1 -2h1v1h-1zm0 6h1v1h-1zm1 0h1v1h-1zm0 1h1v1h-1zm1 -2h1v1h-1zm0 2h1v1h-1zm1 -1h1v1h-1zm1 3h1v1h-1zm1 -4h1v1h-1zm0 6h1v1h-1zm1 -6h1v1h-1zm1 -9h1v1h-1zm1 7h1v1h-1zm1 -1h1v1h-1zm3 5h1v1h-1zm0 2h1v1h-1zm1 -3h1v1h-1zm0 4h1v1h-1zm3 -5h1v1h-1zm1 9h1v1h-1zm1 -18h1v1h-1zm1 15h1v1h-1zm3 -5h1v1h-1zm0 1h1v1h-1zm1 -5h1v1h-1zm0 1h1v1h-1zm1 2h1v1h-1zm0 4h1v1h-1zm1 0h1v1h-1zm1 -7h1v1h-1zm1 -2h1v1h-1zm0 9h1v1h-1zm1 -6h1v1h-1zm0 3h1v1h-1zm1 0h1v1h-1zm0 3h1v1h-1zm3 -4h1v1h-1zm0 2h1v1h-1zm1 -4h1v1h-1zm0 3h1v1h-1zm3 -4h1v1h-1zm1 -4h1v1h-1zm0 5h1v1h-1zm0 2h1v1h-1zm1 5h1v1h-1zm1 -8h1v1h-1zm0 7h1v1h-1zm1 -4h1v1h-1zm1 0h1v1h-1zm0 2h1v1h-1zm1 0h1v1h-1zm1 -12h1v1h-1zm1 1h1v1h-1zm0 3h1v1h-1zm1 6h1v1h-1zm0 1h1v1h-1zm1 -6h1v1h-1zm0 6h1v1h-1zm0 1h1v1h-1zm2 -7h1v1h-1zm0 6h1v1h-1zm1 -3h1v1h-1zm0 7h1v1h-1zm1 -4h1v1h-1zm1 -11h1v1h-1zm0 5h1v1h-1zm0 5h1v1h-1zm0 2h1v1h-1zm2 0h1v1h-1zm1 -7h1v1h-1zm0 2h1v1h-1zm0 4h1v1h-1zm1 -6h1v1h-1zm0 10h1v1h-1zm1 -7h1v1h-1zm1 0h1v1h-1zm1 -4h1v1h-1zm0 3h1v1h-1zm2 0h1v1h-1zm0 1h1v1h-1zm1 -1h1v1h-1zm0 1h1v1h-1zm1 -1h1v1h-1zm0 1h1v1h-1zm1 0h1v1h-1zm0 6h1v1h-1zm1 -3h1v1h-1zm1 1h1v1h-1zm2 -8h1v1h-1zm1 -3h1v1h-1zm2 2h1v1h-1zm0 1h1v1h-1zm1 1h1v1h-1zm0 3h1v1h-1zm1 3h1v1h-1zm1 -3h1v1h-1zm0 3h1v1h-1zm1 1h1v1h-1zm1 0h1v1h-1zm1 -4h1v1h-1zm0 4h1v1h-1zm1 -7h1v1h-1zm1 5h1v1h-1zm1 -2h1v1h-1zm0 8h1v1h-1zm1 -11h1v1h-1zm0 3h1v1h-1zm0 8h1v1h-1zm1 -5h1v1h-1zm1 -10h1v1h-1zm0 6h1v1h-1zm1 -4h1v1h-1zm0 5h1v1h-1zm1 -5h1v1h-1zm0 4h1v1h-1zm1 -6h1v1h-1zm0 2h1v1h-1zm0 9h1v1h-1zm1 -1h1v1h-1zm1 3h1v1h-1zm1 -7h1v1h-1zm0 4h1v1h-1zm1 -14h1v1h-1zm0 10h1v1h-1zm1 3h1v1h-1zm1 -5h1v1h-1zm1 -1h1v1h-1zm0 4h1v1h-1zm1 -3h1v1h-1zm4 2h1v1h-1zm2 0h1v1h-1zm1 -4h1v1h-1zm0 4h1v1h-1zm1 -3h1v1h-1zm1 -1h1v1h-1zm0 4h1v1h-1zm0 4h1v1h-1zm0 1h1v1h-1zm1 -8h1v1h-1zm0 10h1v1h-1zm1 -4h1v1h-1zm1 -3h1v1h-1zm0 5h1v1h-1zm4 -7h1v1h-1zm0 5h1v1h-1zm4 -7h1v1h-1zm0 9h1v1h-1zm1 -2h1v1h-1zm0 2h1v1h-1zm1 -9h1v1h-1zm0 1h1v1h-1zm0 4h1v1h-1zm1 -1h1v1h-1zm1 3h1v1h-1zm1 -3h1v1h-1zm0 1h1v1h-1zm2 4h1v1h-1zm1 -5h1v1h-1zm3 1h1v1h-1zm2 -5h1v1h-1zm0 1h1v1h-1zm0 8h1v1h-1zm1 -7h1v1h-1zm0 2h1v1h-1zm1 0h1v1h-1zm2 3h1v1h-1zm1 -3h1v1h-1zm3 -3h1v1h-1zm0 4h1v1h-1zm1 -7h1v1h-1zm1 6h1v1h-1zm1 -4h1v1h-1zm1 5h1v1h-1zm1 -4h1v1h-1zm1 -3h1v1h-1zm0 2h1v1h-1zm1 -2h1v1h-1zm1 -1h1v1h-1zm1 7h1v1h-1zm1 -3h1v1h-1zm2 7h1v1h-1zm1 -3h1v1h-1zm1 3h1v1h-1zm1 -3h1v1h-1zm1 -5h1v1h-1zm3 2h1v1h-1zm2 0h1v1h-1zm2 -4h1v1h-1zm1 -42h1v1h-1zm0 45h1v1h-1zm0 3h1v1h-1zm2 -7h1v1h-1zm0 3h1v1h-1zm2 7h1v1h-1zm1 -6h1v1h-1zm0 1h1v1h-1zm1 -1h1v1h-1zm2 -49h1v1h-1zm0 52h1v1h-1zm0 1h1v1h-1zm2 -5h1v1h-1zm1 2h1v1h-1zm0 2h1v1h-1zm3 -10h1v1h-1zm1 4h1v1h-1zm0 11h1v1h-1zm1 -7h1v1h-1zm1 -5h1v1h-1zm2 5h1v1h-1zm2 0h1v1h-1zm1 -1h1v1h-1zm0 1h1v1h-1zm0 2h1v1h-1zm2 -7h1v1h-1zm0 7h1v1h-1zm1 -3h1v1h-1zm0 1h1v1h-1zm0 2h1v1h-1zm1 -3h1v1h-1zm0 6h1v1h-1zm1 -6h1v1h-1zm1 1h1v1h-1zm1 0h1v1h-1zm4 -4h1v1h-1zm2 0h1v1h-1zm0 9h1v1h-1zm1 -5h1v1h-1zm0 3h1v1h-1zm1 -3h1v1h-1zm1 -4h1v1h-1zm1 4h1v1h-1zm1 -2h1v1h-1zm1 0h1v1h-1zm1 5h1v1h-1zm1 -8h1v1h-1zm2 3h1v1h-1zm0 1h1v1h-1zm2 3h1v1h-1zm1 3h1v1h-1zm2 -7h1v1h-1zm2 0h1v1h-1zm2 -3h1v1h-1zm0 5h1v1h-1zm1 0h1v1h-1zm1 -1h1v1h-1zm1 -7h1v1h-1zm0 8h1v1h-1zm3 -2h1v1h-1zm1 1h1v1h-1zm2 -6h1v1h-1zm0 7h1v1h-1zm5 2h1v1h-1zm1 -6h1v1h-1zm0 6h1v1h-1zm2 -9h1v1h-1zm3 3h1v1h-1zm0 2h1v1h-1zm1 -7h1v1h-1zm0 4h1v1h-1zm0 4h1v1h-1zm0 4h1v1h-1zm1 -4h1v1h-1zm2 -4h1v1h-1zm0 3h1v1h-1zm0 2h1v1h-1zm2 -9h1v1h-1zm0 5h1v1h-1zm0 2h1v1h-1zm0 1h1v1h-1zm1 -3h1v1h-1zm1 0h1v1h-1zm2 10h1v1h-1zm2 -6h1v1h-1zm1 -55h1v1h-1zm0 51h1v1h-1zm0 2h1v1h-1zm0 2h1v1h-1zm1 -2h1v1h-1zm1 1h1v1h-1zm4 8h1v1h-1zm1 -11h1v1h-1zm0 2h1v1h-1zm0 7h1v1h-1zm1 -7h1v1h-1zm1 2h1v1h-1zm1 -4h1v1h-1zm1 0h1v1h-1zm0 3h1v1h-1zm0 11h1v1h-1zm1 -8h1v1h-1zm0 4h1v1h-1zm2 -6h1v1h-1zm0 5h1v1h-1zm1 -7h1v1h-1zm2 -5h1v1h-1zm0 2h1v1h-1zm0 4h1v1h-1zm1 6h1v1h-1zm3 -13h1v1h-1zm0 7h1v1h-1zm1 -1h1v1h-1zm1 2h1v1h-1zm0 2h1v1h-1zm0 1h1v1h-1zm0 2h1v1h-1zm1 -10h1v1h-1zm1 5h1v1h-1zm0 2h1v1h-1zm2 -13h1v1h-1zm0 6h1v1h-1zm0 1h1v1h-1zm2 -5h1v1h-1zm0 4h1v1h-1zm4 7h1v1h-1zm1 -7h1v1h-1zm1 10h1v1h-1zm1 -12h1v1h-1zm0 3h1v1h-1zm3 2h1v1h-1zm0 5h1v1h-1zm1 -4h1v1h-1zm1 -4h1v1h-1zm5 12h1v1h-1zm1 -8h1v1h-1zm2 -8h1v1h-1zm0 5h1v1h-1zm0 3h1v1h-1zm0 4h1v1h-1zm1 -7h1v1h-1zm1 4h1v1h-1zm1 -9h1v1h-1zm1 2h1v1h-1zm0 2h1v1h-1zm0 10h1v1h-1zm1 -13h1v1h-1zm2 3h1v1h-1zm1 -3h1v1h-1zm0 1h1v1h-1zm1 5h1v1h-1zm2 -3h1v1h-1zm0 3h1v1h-1zm0 1h1v1h-1zm2 -8h1v1h-1zm1 0h1v1h-1zm0 7h1v1h-1zm1 -5h1v1h-1zm0 5h1v1h-1zm3 -3h1v1h-1zm0 4h1v1h-1zm1 1h1v1h-1zm1 -9h1v1h-1zm0 7h1v1h-1zm1 -2h1v1h-1zm1 -3h1v1h-1zm0 3h1v1h-1zm2 2h1v1h-1zm2 -6h1v1h-1zm1 10h1v1h-1zm1 -11h1v1h-1zm1 11h1v1h-1zm1 -13h1v1h-1zm2 7h1v1h-1zm1 2h1v1h-1zm2 -5h1v1h-1zm1 10h1v1h-1zm6 -1h1v1h-1zm1 -18h1v1h-1zm0 9h1v1h-1zm0 6h1v1h-1zm2 -10h1v1h-1zm0 6h1v1h-1zm0 5h1v1h-1zm1 6h1v1h-1zm1 -7h1v1h-1zm0 3h1v1h-1zm1 -4h1v1h-1zm1 -9h1v1h-1zm0 2h1v1h-1zm1 0h1v1h-1zm0 7h1v1h-1zm1 -5h1v1h-1zm0 3h1v1h-1zm0 4h1v1h-1zm2 -5h1v1h-1zm2 0h1v1h-1zm0 1h1v1h-1zm0 2h1v1h-1zm0 1h1v1h-1zm2 -8h1v1h-1zm0 9h1v1h-1zm2 -5h1v1h-1zm0 5h1v1h-1zm0 5h1v1h-1zm3 -14h1v1h-1zm0 11h1v1h-1zm2 -2h1v1h-1zm5 -5h1v1h-1zm0 3h1v1h-1zm1 2h1v1h-1zm1 -11h1v1h-1zm1 6h1v1h-1zm0 1h1v1h-1zm1 -1h1v1h-1zm2 -3h1v1h-1zm0 4h1v1h-1zm0 3h1v1h-1zm1 1h1v1h-1zm2 -5h1v1h-1zm1 -7h1v1h-1zm2 7h1v1h-1zm1 -4h1v1h-1zm1 1h1v1h-1zm1 4h1v1h-1zm2 -7h1v1h-1zm1 11h1v1h-1zm1 -12h1v1h-1zm1 5h1v1h-1zm4 3h1v1h-1zm0 4h1v1h-1zm1 -9h1v1h-1zm2 -2h1v1h-1zm0 7h1v1h-1zm0 2h1v1h-1zm1 -7h1v1h-1zm2 -2h1v1h-1zm0 6h1v1h-1zm0 1h1v1h-1zm1 2h1v1h-1zm1 -6h1v1h-1zm1 -6h1v1h-1zm2 9h1v1h-1zm0 1h1v1h-1zm1 -3h1v1h-1zm1 -1h1v1h-1zm0 3h1v1h-1zm0 1h1v1h-1zm1 -4h1v1h-1zm3 10h1v1h-1zm2 -4h1v1h-1zm0 1h1v1h-1zm1 -6h1v1h-1zm0 9h1v1h-1zm1 -4h1v1h-1zm3 -2h1v1h-1zm1 -4h1v1h-1zm1 -1h1v1h-1zm0 9h1v1h-1zm1 -8h1v1h-1zm0 3h1v1h-1zm1 -2h1v1h-1zm0 9h1v1h-1zm3 -10h1v1h-1zm0 4h1v1h-1zm1 2h1v1h-1zm2 -6h1v1h-1zm0 7h1v1h-1zm1 1h1v1h-1zm1 -7h1v1h-1zm0 2h1v1h-1zm1 -4h1v1h-1zm0 8h1v1h-1zm3 -8h1v1h-1zm0 4h1v1h-1zm1 -3h1v1h-1zm0 1h1v1h-1zm0 5h1v1h-1zm2 -10h1v1h-1zm0 1h1v1h-1zm0 6h1v1h-1zm1 -2h1v1h-1zm1 2h1v1h-1zm0 1h1v1h-1zm2 -4h1v1h-1zm1 -1h1v1h-1zm1 2h1v1h-1zm2 3h1v1h-1zm1 -5h1v1h-1zm1 9h1v1h-1zm2 -7h1v1h-1zm1 -1h1v1h-1zm0 8h1v1h-1zm2 -5h1v1h-1zm5 -11h1v1h-1zm0 9h1v1h-1zm1 -1h1v1h-1zm3 3h1v1h-1zm2 1h1v1h-1zm0 7h1v1h-1zm1 -11h1v1h-1zm1 3h1v1h-1zm1 0h1v1h-1zm0 3h1v1h-1zm1 -7h1v1h-1zm1 7h1v1h-1zm2 -6h1v1h-1zm1 3h1v1h-1zm1 0h1v1h-1zm1 -2h1v1h-1zm1 -4h1v1h-1zm0 7h1v1h-1zm1 0h1v1h-1zm1 -3h1v1h-1zm3 -4h1v1h-1zm0 10h1v1h-1zm1 1h1v1h-1zm2 -4h1v1h-1zm0 3h1v1h-1zm2 -3h1v1h-1zm1 -7h1v1h-1zm0 3h1v1h-1zm0 6h1v1h-1zm1 -7h1v1h-1zm1 4h1v1h-1zm1 0h1v1h-1zm1 5h1v1h-1zm1 -8h1v1h-1zm0 4h1v1h-1zm1 -8h1v1h-1zm1 8h1v1h-1zm2 -5h1v1h-1zm1 1h1v1h-1zm0 6h1v1h-1zm1 -7h1v1h-1zm1 2h1v1h-1zm1 3h1v1h-1zm1 -5h1v1h-1zm1 -2h1v1h-1zm0 6h1v1h-1zm3 3h1v1h-1zm1 -9h1v1h-1zm1 3h1v1h-1zm0 6h1v1h-1zm2 -5h1v1h-1zm4 -2h1v1h-1zm2 4h1v1h-1zm5 4h1v1h-1zm1 -11h1v1h-1zm0 5h1v1h-1zm2 -4h1v1h-1zm0 6h1v1h-1zm0 4h1v1h-1zm1 -7h1v1h-1zm0 4h1v1h-1zm1 -4h1v1h-1zm0 1h1v1h-1zm0 3h1v1h-1zm1 -1h1v1h-1zm3 -4h1v1h-1zm0 11h1v1h-1zm1 -6h1v1h-1zm4 2h1v1h-1zm1 -2h1v1h-1zm1 2h1v1h-1zm1 -6h1v1h-1zm2 0h1v1h-1zm3 -4h1v1h-1zm1 10h1v1h-1zm1 -3h1v1h-1zm3 -9h1v1h-1zm2 10h1v1h-1zm1 3h1v1h-1zm0 1h1v1h-1zm2 -7h1v1h-1zm0 9h1v1h-1zm1 -9h1v1h-1zm5 3h1v1h-1zm2 -5h1v1h-1zm1 -3h1v1h-1zm0 14h1v1h-1zm1 -3h1v1h-1zm1 -8h1v1h-1zm2 1h1v1h-1zm0 1h1v1h-1zm1 -5h1v1h-1zm1 12h1v1h-1zm1 -12h1v1h-1zm0 7h1v1h-1zm1 -2h1v1h-1zm0 5h1v1h-1zm2 -10h1v1h-1zm0 3h1v1h-1zm2 1h1v1h-1zm3 -6h1v1h-1zm0 9h1v1h-1zm1 -2h1v1h-1zm1 -8h1v1h-1zm0 7h1v1h-1zm1 3h1v1h-1zm1 3h1v1h-1zm2 -5h1v1h-1zm3 -2h1v1h-1zm0 7h1v1h-1zm2 -6h1v1h-1zm2 -8h1v1h-1zm0 9h1v1h-1zm0 3h1v1h-1zm5 -4h1v1h-1zm1 1h1v1h-1zm3 0h1v1h-1zm5 -34h1v1h-1zm1 37h1v1h-1zm1 -8h1v1h-1zm0 8h1v1h-1zm2 0h1v1h-1zm2 -5h1v1h-1zm2 4h1v1h-1zm2 -9h1v1h-1zm0 14h1v1h-1zm6 -4h1v1h-1zm4 -5h1v1h-1zm1 0h1v1h-1zm1 -3h1v1h-1zm4 3h1v1h-1zm3 7h1v1h-1zm2 -3h1v1h-1zm3 -9h1v1h-1zm0 5h1v1h-1zm1 1h1v1h-1zm3 3h1v1h-1zm5 -9h1v1h-1zm0 7h1v1h-1zm1 2h1v1h-1zm1 -3h1v1h-1zm1 -1h1v1h-1zm1 5h1v1h-1zm0 3h1v1h-1zm1 -1h1v1h-1zm0 2h1v1h-1zm1 -8h1v1h-1zm1 1h1v1h-1zm0 3h1v1h-1zm3 -1h1v1h-1zm1 -4h1v1h-1zm1 -6h1v1h-1zm1 8h1v1h-1zm1 3h1v1h-1zm4 -8h1v1h-1zm1 0h1v1h-1zm5 12h1v1h-1zm6 -11h1v1h-1zm0 2h1v1h-1zm1 -5h1v1h-1zm4 3h1v1h-1zm0 9h1v1h-1zm2 -12h1v1h-1zm1 7h1v1h-1zm3 3h1v1h-1zm2 -4h1v1h-1zm1 6h1v1h-1zm4 -3h1v1h-1zm1 -3h1v1h-1zm1 -4h1v1h-1zm1 1h1v1h-1zm2 6h1v1h-1zm1 -7h1v1h-1zm1 5h1v1h-1zm1 -2h1v1h-1zm1 7h1v1h-1zm1 -6h1v1h-1zm0 1h1v1h-1zm0 3h1v1h-1zm1 -4h1v1h-1zm2 6h1v1h-1zm6 -9h1v1h-1zm1 4h1v1h-1zm3 6h1v1h-1zm1 -10h1v1h-1zm1 3h1v1h-1zm2 -3h1v1h-1zm0 7h1v1h-1zm1 -3h1v1h-1zm1 6h1v1h-1zm1 -6h1v1h-1zm2 -2h1v1h-1zm0 1h1v1h-1zm0 3h1v1h-1zm5 -4h1v1h-1zm2 2h1v1h-1zm4 -1h1v1h-1zm6 -3h1v1h-1zm0 9h1v1h-1zm2 -7h1v1h-1zm4 0h1v1h-1zm0 2h1v1h-1zm2 2h1v1h-1zm0 3h1v1h-1zm1 -5h1v1h-1zm2 0h1v1h-1zm1 0h1v1h-1zm1 2h1v1h-1zm1 -3h1v1h-1zm1 -8h1v1h-1zm0 5h1v1h-1zm0 6h1v1h-1zm1 -7h1v1h-1zm0 1h1v1h-1zm0 11h1v1h-1zm5 -7h1v1h-1zm0 2h1v1h-1zm1 -7h1v1h-1zm2 10h1v1h-1zm2 -2h1v1h-1zm1 -7h1v1h-1zm2 2h1v1h-1zm5 0h1v1h-1zm0 5h1v1h-1zm1 0h1v1h-1zm3 -5h1v1h-1zm0 7h1v1h-1zm5 -9h1v1h-1zm0 3h1v1h-1zm1 1h1v1h-1zm5 -2h1v1h-1zm1 -2h1v1h-1zm2 6h1v1h-1zm3 3h1v1h-1zm1 -7h1v1h-1zm1 -3h1v1h-1zm3 8h1v1h-1zm4 -7h1v1h-1zm0 4h1v1h-1zm1 -9h1v1h-1zm0 12h1v1h-1zm1 -12h1v1h-1zm0 4h1v1h-1zm0 4h1v1h-1zm1 -4h1v1h-1zm0 4h1v1h-1zm2 4h1v1h-1zm2 -7h1v1h-1zm0 10h1v1h-1zm2 -7h1v1h-1zm1 4h1v1h-1zm1 -11h1v1h-1zm1 1h1v1h-1zm2 3h1v1h-1zm4 -3h1v1h-1zm0 2h1v1h-1zm1 -2h1v1h-1zm0 6h1v1h-1zm1 -3h1v1h-1zm0 3h1v1h-1zm0 6h1v1h-1zm1 -12h1v1h-1zm0 7h1v1h-1zm1 -2h1v1h-1zm2 -2h1v1h-1zm0 6h1v1h-1zm5 -7h1v1h-1zm0 8h1v1h-1zm3 -8h1v1h-1zm0 4h1v1h-1zm1 0h1v1h-1zm1 -3h1v1h-1zm0 10h1v1h-1zm2 -17h1v1h-1zm1 7h1v1h-1zm3 -1h1v1h-1zm0 4h1v1h-1zm1 -3h1v1h-1zm2 -1h1v1h-1zm0 5h1v1h-1zm0 2h1v1h-1zm1 -4h1v1h-1zm2 1h1v1h-1zm2 1h1v1h-1zm3 -2h1v1h-1zm4 0h1v1h-1zm0 1h1v1h-1zm2 -1h1v1h-1zm1 -9h1v1h-1zm0 9h1v1h-1zm3 0h1v1h-1zm2 2h1v1h-1zm1 -5h1v1h-1zm1 0h1v1h-1zm1 8h1v1h-1zm1 -10h1v1h-1zm0 7h1v1h-1zm2 -4h1v1h-1zm0 3h1v1h-1zm0 4h1v1h-1zm3 -3h1v1h-1zm2 -8h1v1h-1zm1 7h1v1h-1zm3 -1h1v1h-1zm1 -7h1v1h-1zm1 5h1v1h-1zm2 -1h1v1h-1zm0 1h1v1h-1zm0 3h1v1h-1zm1 3h1v1h-1zm2 -4h1v1h-1zm1 5h1v1h-1zm1 -7h1v1h-1zm0 3h1v1h-1zm1 -6h1v1h-1zm0 9h1v1h-1zm1 -4h1v1h-1zm2 -5h1v1h-1zm2 5h1v1h-1zm3 -2h1v1h-1zm1 0h1v1h-1zm1 -1h1v1h-1zm1 -3h1v1h-1zm0 4h1v1h-1zm1 -4h1v1h-1zm3 7h1v1h-1zm0 4h1v1h-1zm2 2h1v1h-1zm3 -12h1v1h-1zm0 6h1v1h-1zm1 -4h1v1h-1zm1 3h1v1h-1zm0 2h1v1h-1zm2 2h1v1h-1zm4 -3h1v1h-1zm2 -7h1v1h-1zm0 4h1v1h-1zm3 3h1v1h-1zm1 -3h1v1h-1zm0 3h1v1h-1zm1 0h1v1h-1zm2 -6h1v1h-1zm1 3h1v1h-1zm2 -3h1v1h-1zm1 -1h1v1h-1zm2 6h1v1h-1zm8 -6h1v1h-1zm1 7h1v1h-1zm6 -7h1v1h-1zm0 6h1v1h-1zm1 8h1v1h-1zm6 -11h1v1h-1zm0 4h1v1h-1zm2 -6h1v1h-1zm0 12h1v1h-1zm2 -7h1v1h-1zm4 -2h1v1h-1zm3 -1h1v1h-1zm0 1h1v1h-1zm0 2h1v1h-1zm0 2h1v1h-1zm1 -4h1v1h-1zm2 6h1v1h-1zm1 1h1v1h-1zm4 -1h1v1h-1zm3 0h1v1h-1zm6 -3h1v1h-1zm4 -6h1v1h-1zm1 3h1v1h-1zm0 3h1v1h-1zm0 4h1v1h-1zm6 -4h1v1h-1zm0 8h1v1h-1zm1 -12h1v1h-1zm1 4h1v1h-1zm1 1h1v1h-1zm2 0h1v1h-1zm5 0h1v1h-1zm2 -7h1v1h-1zm1 0h1v1h-1zm4 6h1v1h-1zm3 -1h1v1h-1zm2 -2h1v1h-1zm0 2h1v1h-1zm2 -3h1v1h-1zm3 5h1v1h-1zm1 -4h1v1h-1zm2 2h1v1h-1zm2 -2h1v1h-1zm12 2h1v1h-1zm4 -2h1v1h-1zm3 0h1v1h-1zm4 0h1v1h-1zm0 3h1v1h-1zm3 -1h1v1h-1zm3 -3h1v1h-1zm1 -4h1v1h-1zm1 1h1v1h-1zm8 -3h1v1h-1zm2 7h1v1h-1zm2 3h1v1h-1zm2 4h1v1h-1zm2 -8h1v1h-1zm4 0h1v1h-1zm0 3h1v1h-1zm0 1h1v1h-1zm2 -7h1v1h-1zm1 1h1v1h-1zm1 -4h1v1h-1zm1 2h1v1h-1zm1 2h1v1h-1zm1 3h1v1h-1zm2 0h1v1h-1zm0 2h1v1h-1zm2 -7h1v1h-1zm0 8h1v1h-1zm1 -10h1v1h-1zm2 11h1v1h-1zm1 0h1v1h-1zm2 -2h1v1h-1zm6 -9h1v1h-1zm2 7h1v1h-1zm4 -4h1v1h-1zm4 -1h1v1h-1zm1 11h1v1h-1zm4 -7h1v1h-1zm0 3h1v1h-1zm1 4h1v1h-1zm1 -9h1v1h-1zm0 2h1v1h-1zm2 1h1v1h-1zm2 0h1v1h-1zm3 -5h1v1h-1zm0 4h1v1h-1zm0 4h1v1h-1zm1 1h1v1h-1zm1 -8h1v1h-1zm1 1h1v1h-1zm1 9h1v1h-1zm7 -7h1v1h-1zm1 -6h1v1h-1zm0 9h1v1h-1zm5 -9h1v1h-1zm0 3h1v1h-1zm4 13h1v1h-1zm2 -13h1v1h-1zm1 6h1v1h-1zm2 -6h1v1h-1zm2 7h1v1h-1zm4 -10h1v1h-1zm0 3h1v1h-1zm0 1h1v1h-1zm4 -2h1v1h-1zm6 4h1v1h-1zm2 0h1v1h-1zm6 4h1v1h-1zm9 -10h1v1h-1zm3 6h1v1h-1zm0 3h1v1h-1zm1 1h1v1h-1zm4 -4h1v1h-1zm0 1h1v1h-1zm0 7h1v1h-1zm4 -53h1v1h-1zm0 50h1v1h-1zm3 -51h1v1h-1zm0 44h1v1h-1zm2 -2h1v1h-1zm3 7h1v1h-1zm1 2h1v1h-1zm3 -2h1v1h-1zm0 1h1v1h-1zm1 -39h1v1h-1zm0 36h1v1h-1zm6 -1h1v1h-1zm4 4h1v1h-1zm2 -3h1v1h-1zm1 -1h1v1h-1zm1 -10h1v1h-1zm2 7h1v1h-1zm10 -1h1v1h-1zm5 11h1v1h-1zm1 -13h1v1h-1zm1 7h1v1h-1zm3 -7h1v1h-1zm3 10h1v1h-1zm4 -1h1v1h-1zm12 -3h1v1h-1zm7 0h1v1h-1zm2 -3h1v1h-1zm0 6h1v1h-1zm2 -5h1v1h-1zm4 2h1v1h-1zm3 -2h1v1h-1zm1 3h1v1h-1zm1 -3h1v1h-1zm1 -2h1v1h-1zm3 4h1v1h-1zm2 10h1v1h-1zm1 -2h1v1h-1zm3 -11h1v1h-1zm2 6h1v1h-1zm4 1h1v1h-1zm4 -3h1v1h-1zm1 -3h1v1h-1zm8 -2h1v1h-1zm2 -2h1v1h-1zm12 6h1v1h-1zm16 -4h1v1h-1zm8 0h1v1h-1zm17 1h1v1h-1zm5 -1h1v1h-1zm3 -2h1v1h-1zm5 7h1v1h-1zm2 -4h1v1h-1zm14 -4h1v1h-1zm0 8h1v1h-1zm8 -4h1v1h-1zm14 0h1v1h-1zm1 1h1v1h-1zm9 -5h1v1h-1zm2 1h1v1h-1zm0 10h1v1h-1zm11 -6h1v1h-1z" fill="#00ff00"/>
<path d="M55 698h1v1h-1zm1 1h1v1h-1zm2 -6h1v1h-1zm0 10h1v1h-1zm1 -4h1v1h-1zm1 0h1v1h-1zm0 4h1v1h-1zm0 6h1v1h-1zm1 -11h1v1h-1zm0 4h1v1h-1zm4 -2h1v1h-1zm1 -4h1v1h-1zm0 10h1v1h-1zm1 -6h1v1h-1zm3 0h1v1h-1zm0 3h1v1h-1zm2 -1h1v1h-1zm2 -7h1v1h-1zm0 8h1v1h-1zm1 -5h1v1h-1zm0 1h1v1h-1zm2 1h1v1h-1zm0 3h1v1h-1zm3 -10h1v1h-1zm1 13h1v1h-1zm2 -8h1v1h-1zm1 -5h1v1h-1zm0 9h1v1h-1zm0 1h1v1h-1zm0 1h1v1h-1zm1 -6h1v1h-1zm1 -3h1v1h-1zm1 3h1v1h-1zm0 2h1v1h-1zm0 2h1v1h-1zm1 -3h1v1h-1zm0 3h1v1h-1zm1 -9h1v1h-1zm2 0h1v1h-1zm0 3h1v1h-1zm0 2h1v1h-1zm1 4h1v1h-1zm1 -7h1v1h-1zm2 -3h1v1h-1zm0 6h1v1h-1zm0 1h1v1h-1zm0 7h1v1h-1zm1 -15h1v1h-1zm0 5h1v1h-1zm0 8h1v1h-1zm1 -6h1v1h-1zm1 -5h1v1h-1zm0 6h1v1h-1zm1 -4h1v1h-1zm2 -2h1v1h-1zm0 5h1v1h-1zm0 1h1v1h-1zm0 1h1v1h-1zm0 2h1v1h-1zm2 -9h1v1h-1zm2 3h1v1h-1zm0 3h1v1h-1zm1 -8h1v1h-1zm0 5h1v1h-1zm1 4h1v1h-1zm0 2h1v1h-1zm1 -10h1v1h-1zm0 4h1v1h-1zm1 -4h1v1h-1zm0 15h1v1h-1zm1 -14h1v1h-1zm0 6h1v1h-1zm0 5h1v1h-1zm1 -9h1v1h-1zm0 8h1v1h-1zm1 -10h1v1h-1zm0 5h1v1h-1zm1 -6h1v1h-1zm0 7h1v1h-1zm2 -6h1v1h-1zm0 7h1v1h-1zm2 2h1v1h-1zm1 -4h1v1h-1zm0 1h1v1h-1zm1 4h1v1h-1zm1 -10h1v1h-1zm0 7h1v1h-1zm1 2h1v1h-1zm1 -3h1v1h-1zm0 3h1v1h-1zm1 -7h1v1h-1zm1 7h1v1h-1zm1 -7h1v1h-1zm1 0h1v1h-1zm1 1h1v1h-1zm1 3h1v1h-1zm2 1h1v1h-1zm1 -7h1v1h-1zm0 2h1v1h-1zm2 -3h1v1h-1zm0 1h1v1h-1zm0 6h1v1h-1zm1 1h1v1h-1zm1 -9h1v1h-1zm0 11h1v1h-1zm1 -6h1v1h-1zm2 3h1v1h-1zm0 4h1v1h-1zm1 -10h1v1h-1zm1 2h1v1h-1zm0 3h1v1h-1zm1 -3h1v1h-1zm1 1h1v1h-1zm1 -7h1v1h-1zm0 7h1v1h-1zm1 0h1v1h-1zm1 2h1v1h-1zm3 -7h1v1h-1zm0 7h1v1h-1zm1 0h1v1h-1zm1 2h1v1h-1zm1 -2h1v1h-1zm0 4h1v1h-1zm2 -9h1v1h-1zm0 3h1v1h-1zm0 4h1v1h-1zm1 -4h1v1h-1zm0 2h1v1h-1zm1 0h1v1h-1zm1 -2h1v1h-1zm1 -1h1v1h-1zm0 3h1v1h-1zm1 -5h1v1h-1zm1 0h1v1h-1zm0 9h1v1h-1zm1 -2h1v1h-1zm1 -5h1v1h-1zm1 -3h1v1h-1zm0 1h1v1h-1zm0 2h1v1h-1zm0 3h1v1h-1zm1 -6h1v1h-1zm1 4h1v1h-1zm0 4h1v1h-1zm1 -9h1v1h-1zm2 9h1v1h-1zm1 -2h1v1h-1zm7 1h1v1h-1zm3 -6h1v1h-1zm0 6h1v1h-1zm2 -11h1v1h-1zm1 12h1v1h-1zm1 -2h1v1h-1zm1 -3h1v1h-1zm0 5h1v1h-1zm1 -7h1v1h-1zm0 3h1v1h-1zm2 6h1v1h-1zm1 -10h1v1h-1zm0 4h1v1h-1zm1 0h1v1h-1zm1 -3h1v1h-1zm0 3h1v1h-1zm0 2h1v1h-1zm2 -2h1v1h-1zm1 0h1v1h-1zm3 -5h1v1h-1zm0 1h1v1h-1zm1 4h1v1h-1zm1 6h1v1h-1zm2 -7h1v1h-1zm1 -2h1v1h-1zm0 6h1v1h-1zm0 1h1v1h-1zm1 -7h1v1h-1zm1 0h1v1h-1zm0 3h1v1h-1zm1 -7h1v1h-1zm0 3h1v1h-1zm0 4h1v1h-1zm1 0h1v1h-1zm1 -5h1v1h-1zm3 1h1v1h-1zm1 -1h1v1h-1zm1 -5h1v1h-1zm0 12h1v1h-1zm2 -6h1v1h-1zm0 3h1v1h-1zm1 -2h1v1h-1zm0 7h1v1h-1zm1 -11h1v1h-1zm0 2h1v1h-1zm0 1h1v1h-1zm1 3h1v1h-1zm1 1h1v1h-1zm1 -5h1v1h-1zm1 -5h1v1h-1zm0 13h1v1h-1zm1 -4h1v1h-1zm0 3h1v1h-1zm2 0h1v1h-1zm1 -2h1v1h-1zm0 2h1v1h-1zm2 -9h1v1h-1zm2 10h1v1h-1zm1 -4h1v1h-1zm0 3h1v1h-1zm1 -6h1v1h-1zm1 -3h1v1h-1zm0 2h1v1h-1zm0 1h1v1h-1zm1 -1h1v1h-1zm0 1h1v1h-1zm1 4h1v1h-1zm2 -3h1v1h-1zm0 2h1v1h-1zm0 1h1v1h-1zm0 2h1v1h-1zm1 -6h1v1h-1zm1 -6h1v1h-1zm0 9h1v1h-1zm1 -3h1v1h-1zm0 11h1v1h-1zm2 -10h1v1h-1zm0 2h1v1h-1zm0 1h1v1h-1zm0 4h1v1h-1zm1 -5h1v1h-1zm0 3h1v1h-1zm3 -6h1v1h-1zm1 3h1v1h-1zm2 0h1v1h-1zm0 3h1v1h-1zm1 -5h1v1h-1zm1 6h1v1h-1zm1 0h1v1h-1zm3 -7h1v1h-1zm1 -1h1v1h-1zm0 2h1v1h-1zm1 5h1v1h-1zm2 -2h1v1h-1zm2 -1h1v1h-1zm0 4h1v1h-1zm2 -7h1v1h-1zm0 6h1v1h-1zm1 -7h1v1h-1zm0 8h1v1h-1zm0 1h1v1h-1zm1 -9h1v1h-1zm0 4h1v1h-1zm3 -6h1v1h-1zm0 3h1v1h-1zm1 -1h1v1h-1zm0 9h1v1h-1zm1 -8h1v1h-1zm1 -1h1v1h-1zm0 2h1v1h-1zm0 3h1v1h-1zm1 -3h1v1h-1zm2 -4h1v1h-1zm0 10h1v1h-1zm1 -13h1v1h-1zm1 6h1v1h-1zm0 4h1v1h-1zm2 -8h1v1h-1zm0 11h1v1h-1zm0 1h1v1h-1zm1 -15h1v1h-1zm0 8h1v1h-1zm1 2h1v1h-1zm3 -4h1v1h-1zm0 4h1v1h-1zm2 -6h1v1h-1zm0 4h1v1h-1zm0 3h1v1h-1zm1 -3h1v1h-1zm0 6h1v1h-1zm1 -8h1v1h-1zm0 2h1v1h-1zm2 -2h1v1h-1zm1 -5h1v1h-1zm0 6h1v1h-1zm0 4h1v1h-1zm2 0h1v1h-1zm0 6h1v1h-1zm1 -10h1v1h-1zm4 -1h1v1h-1zm0 4h1v1h-1zm0 1h1v1h-1zm1 2h1v1h-1zm1 -9h1v1h-1zm0 4h1v1h-1zm0 5h1v1h-1zm1 -10h1v1h-1zm0 8h1v1h-1zm1 -4h1v1h-1zm0 6h1v1h-1zm2 -9h1v1h-1zm0 7h1v1h-1zm1 2h1v1h-1zm2 -10h1v1h-1zm0 7h1v1h-1zm2 -9h1v1h-1zm0 7h1v1h-1zm1 -4h1v1h-1zm0 3h1v1h-1zm0 8h1v1h-1zm2 -5h1v1h-1zm1 -4h1v1h-1zm1 -2h1v1h-1zm1 -4h1v1h-1zm0 1h1v1h-1zm1 7h1v1h-1zm0 2h1v1h-1zm0 1h1v1h-1zm1 -7h1v1h-1zm1 4h1v1h-1zm0 2h1v1h-1zm1 -11h1v1h-1zm0 5h1v1h-1zm0 2h1v1h-1zm0 9h1v1h-1zm2 -16h1v1h-1zm0 4h1v1h-1zm0 3h1v1h-1zm1 -2h1v1h-1zm1 6h1v1h-1zm1 1h1v1h-1zm2 -5h1v1h-1zm0 2h1v1h-1zm1 -4h1v1h-1zm1 4h1v1h-1zm0 6h1v1h-1zm1 -11h1v1h-1zm1 3h1v1h-1zm0 2h1v1h-1zm0 3h1v1h-1zm1 -7h1v1h-1zm1 -4h1v1h-1zm0 4h1v1h-1zm0 2h1v1h-1zm0 1h1v1h-1zm0 4h1v1h-1zm3 -7h1v1h-1zm1 7h1v1h-1zm2 -4h1v1h-1zm1 4h1v1h-1zm2 -12h1v1h-1zm2 1h1v1h-1zm1 13h1v1h-1zm1 -3h1v1h-1zm1 -2h1v1h-1zm1 -4h1v1h-1zm0 9h1v1h-1zm2 -10h1v1h-1zm0 8h1v1h-1zm3 3h1v1h-1zm1 -15h1v1h-1zm0 5h1v1h-1zm1 -3h1v1h-1zm0 3h1v1h-1zm3 -1h1v1h-1zm0 4h1v1h-1zm2 1h1v1h-1zm1 -7h1v1h-1zm2 0h1v1h-1zm1 3h1v1h-1zm1 0h1v1h-1zm1 0h1v1h-1zm2 -3h1v1h-1zm0 5h1v1h-1zm3 -6h1v1h-1zm0 3h1v1h-1zm1 0h1v1h-1zm0 4h1v1h-1zm4 0h1v1h-1zm1 -6h1v1h-1zm0 2h1v1h-1zm1 -2h1v1h-1zm2 9h1v1h-1zm1 -4h1v1h-1zm1 0h1v1h-1zm2 -2h1v1h-1zm1 4h1v1h-1zm1 -5h1v1h-1zm3 5h1v1h-1zm1 -1h1v1h-1zm1 -1h1v1h-1zm1 0h1v1h-1zm4 5h1v1h-1zm1 -5h1v1h-1zm4 -2h1v1h-1zm0 6h1v1h-1zm1 -7h1v1h-1zm0 3h1v1h-1zm2 -3h1v1h-1zm0 3h1v1h-1zm0 2h1v1h-1zm1 -1h1v1h-1zm1 -7h1v1h-1zm0 7h1v1h-1zm2 -7h1v1h-1zm1 3h1v1h-1zm1 -2h1v1h-1zm2 10h1v1h-1zm3 -5h1v1h-1zm2 -5h1v1h-1zm3 3h1v1h-1zm1 3h1v1h-1zm1 0h1v1h-1zm1 -4h1v1h-1zm1 -4h1v1h-1zm0 5h1v1h-1zm0 3h1v1h-1zm1 -7h1v1h-1zm2 8h1v1h-1zm4 -11h1v1h-1zm2 4h1v1h-1zm0 2h1v1h-1zm1 3h1v1h-1zm1 -2h1v1h-1zm2 3h1v1h-1zm1 -3h1v1h-1zm1 0h1v1h-1zm3 2h1v1h-1zm1 4h1v1h-1zm1 -4h1v1h-1zm1 1h1v1h-1zm1 -1h1v1h-1zm1 0h1v1h-1zm5 1h1v1h-1zm1 0h1v1h-1zm2 -14h1v1h-1zm0 11h1v1h-1zm0 3h1v1h-1zm1 -6h1v1h-1zm0 3h1v1h-1zm2 0h1v1h-1zm0 4h1v1h-1zm2 6h1v1h-1zm1 1h1v1h-1zm1 -12h1v1h-1zm1 7h1v1h-1zm1 -17h1v1h-1zm1 10h1v1h-1zm4 -3h1v1h-1zm0 3h1v1h-1zm0 4h1v1h-1zm1 -10h1v1h-1zm0 7h1v1h-1zm1 3h1v1h-1zm1 -6h1v1h-1zm2 5h1v1h-1zm1 -2h1v1h-1zm1 -4h1v1h-1zm1 1h1v1h-1zm0 10h1v1h-1zm1 -8h1v1h-1zm0 10h1v1h-1zm1 -10h1v1h-1zm0 1h1v1h-1zm4 -8h1v1h-1zm0 1h1v1h-1zm2 3h1v1h-1zm1 3h1v1h-1zm1 0h1v1h-1zm2 -2h1v1h-1zm1 -1h1v1h-1zm2 3h1v1h-1zm0 1h1v1h-1zm3 -4h1v1h-1zm0 3h1v1h-1zm1 1h1v1h-1zm3 -4h1v1h-1zm1 -3h1v1h-1zm0 7h1v1h-1zm1 -1h1v1h-1zm0 5h1v1h-1zm2 -4h1v1h-1zm1 2h1v1h-1zm0 1h1v1h-1zm2 -13h1v1h-1zm0 13h1v1h-1zm1 -4h1v1h-1zm1 4h1v1h-1zm2 -10h1v1h-1zm0 7h1v1h-1zm2 -3h1v1h-1zm1 -2h1v1h-1zm0 5h1v1h-1zm0 3h1v1h-1zm1 -1h1v1h-1zm1 -2h1v1h-1zm1 -4h1v1h-1zm0 3h1v1h-1zm0 3h1v1h-1zm1 -9h1v1h-1zm0 4h1v1h-1zm2 3h1v1h-1zm3 -3h1v1h-1zm1 -2h1v1h-1zm1 8h1v1h-1zm2 -8h1v1h-1zm0 5h1v1h-1zm0 2h1v1h-1zm1 -9h1v1h-1zm0 6h1v1h-1zm1 -4h1v1h-1zm1 2h1v1h-1zm0 2h1v1h-1zm0 3h1v1h-1zm1 1h1v1h-1zm0 4h1v1h-1zm1 -5h1v1h-1zm1 -9h1v1h-1zm0 11h1v1h-1zm1 -7h1v1h-1zm2 6h1v1h-1zm1 0h1v1h-1zm1 -8h1v1h-1zm1 -2h1v1h-1zm0 3h1v1h-1zm0 3h1v1h-1zm1 -7h1v1h-1zm0 12h1v1h-1zm1 -7h1v1h-1zm0 2h1v1h-1zm0 3h1v1h-1zm1 -3h1v1h-1zm0 4h1v1h-1zm1 -1h1v1h-1zm1 1h1v1h-1zm1 0h1v1h-1zm1 -1h1v1h-1zm0 4h1v1h-1zm2 -14h1v1h-1zm0 11h1v1h-1zm2 -4h1v1h-1zm6 -2h1v1h-1zm0 5h1v1h-1zm0 1h1v1h-1zm1 -6h1v1h-1zm0 3h1v1h-1zm0 6h1v1h-1zm3 -11h1v1h-1zm1 5h1v1h-1zm1 -4h1v1h-1zm1 3h1v1h-1zm0 3h1v1h-1zm1 -2h1v1h-1zm1 -7h1v1h-1zm4 10h1v1h-1zm3 -7h1v1h-1zm3 4h1v1h-1zm3 -4h1v1h-1zm0 3h1v1h-1zm1 -3h1v1h-1zm0 3h1v1h-1zm1 -10h1v1h-1zm3 6h1v1h-1zm1 4h1v1h-1zm2 0h1v1h-1zm1 -6h1v1h-1zm2 9h1v1h-1zm0 2h1v1h-1zm1 -5h1v1h-1zm1 -4h1v1h-1zm0 5h1v1h-1zm1 4h1v1h-1zm1 -2h1v1h-1zm3 -3h1v1h-1zm0 1h1v1h-1zm2 -1h1v1h-1zm4 -3h1v1h-1zm0 4h1v1h-1zm1 2h1v1h-1zm2 4h1v1h-1zm1 -13h1v1h-1zm1 10h1v1h-1zm1 -13h1v1h-1zm1 9h1v1h-1zm1 0h1v1h-1zm2 4h1v1h-1zm3 1h1v1h-1zm2 2h1v1h-1zm2 -10h1v1h-1zm0 7h1v1h-1zm1 -3h1v1h-1zm0 2h1v1h-1zm4 -9h1v1h-1zm1 2h1v1h-1zm0 4h1v1h-1zm2 0h1v1h-1zm0 3h1v1h-1zm1 -7h1v1h-1zm1 4h1v1h-1zm1 10h1v1h-1zm1 -7h1v1h-1zm1 -6h1v1h-1zm0 1h1v1h-1zm2 -1h1v1h-1zm1 -4h1v1h-1zm1 7h1v1h-1zm1 1h1v1h-1zm2 -7h1v1h-1zm1 9h1v1h-1zm0 5h1v1h-1zm1 -8h1v1h-1zm0 4h1v1h-1zm0 4h1v1h-1zm0 2h1v1h-1zm1 -14h1v1h-1zm0 2h1v1h-1zm2 -2h1v1h-1zm0 5h1v1h-1zm1 -1h1v1h-1zm0 1h1v1h-1zm1 -10h1v1h-1zm0 5h1v1h-1zm2 8h1v1h-1zm1 -13h1v1h-1zm0 9h1v1h-1zm1 -7h1v1h-1zm1 5h1v1h-1zm1 -2h1v1h-1zm0 1h1v1h-1zm1 6h1v1h-1zm3 -10h1v1h-1zm0 3h1v1h-1zm1 2h1v1h-1zm1 -4h1v1h-1zm0 4h1v1h-1zm1 -11h1v1h-1zm0 9h1v1h-1zm1 0h1v1h-1zm4 1h1v1h-1zm1 4h1v1h-1zm1 -7h1v1h-1zm0 16h1v1h-1zm2 -9h1v1h-1zm1 -5h1v1h-1zm3 0h1v1h-1zm1 1h1v1h-1zm2 -1h1v1h-1zm2 1h1v1h-1zm2 3h1v1h-1zm1 0h1v1h-1zm0 3h1v1h-1zm2 -7h1v1h-1zm1 11h1v1h-1zm1 -14h1v1h-1zm0 7h1v1h-1zm4 0h1v1h-1zm1 -6h1v1h-1zm0 3h1v1h-1zm0 1h1v1h-1zm1 0h1v1h-1zm1 -1h1v1h-1zm3 4h1v1h-1zm2 -1h1v1h-1zm2 -2h1v1h-1zm0 2h1v1h-1zm0 3h1v1h-1zm0 1h1v1h-1zm5 -7h1v1h-1zm0 7h1v1h-1zm1 -8h1v1h-1zm1 0h1v1h-1zm0 5h1v1h-1zm1 2h1v1h-1zm1 4h1v1h-1zm1 -14h1v1h-1zm1 4h1v1h-1zm0 3h1v1h-1zm3 -4h1v1h-1zm1 2h1v1h-1zm0 6h1v1h-1zm1 -7h1v1h-1zm1 6h1v1h-1zm2 -10h1v1h-1zm0 1h1v1h-1zm2 3h1v1h-1zm2 3h1v1h-1zm1 3h1v1h-1zm2 -5h1v1h-1zm2 -4h1v1h-1zm2 9h1v1h-1zm1 -9h1v1h-1zm0 4h1v1h-1zm3 2h1v1h-1zm4 -2h1v1h-1zm0 2h1v1h-1zm1 -3h1v1h-1zm1 0h1v1h-1zm1 4h1v1h-1zm1 3h1v1h-1zm4 -4h1v1h-1zm0 3h1v1h-1zm1 -5h1v1h-1zm7 -41h1v1h-1zm0 40h1v1h-1zm1 0h1v1h-1zm2 -1h1v1h-1zm1 2h1v1h-1zm3 -1h1v1h-1zm2 8h1v1h-1zm1 -7h1v1h-1zm1 -5h1v1h-1zm0 11h1v1h-1zm1 -8h1v1h-1zm0 2h1v1h-1zm1 -2h1v1h-1zm2 4h1v1h-1zm1 -6h1v1h-1zm0 4h1v1h-1zm0 6h1v1h-1zm1 -7h1v1h-1zm0 3h1v1h-1zm2 -7h1v1h-1zm2 3h1v1h-1zm2 4h1v1h-1zm1 0h1v1h-1zm4 -3h1v1h-1zm3 10h1v1h-1zm2 -14h1v1h-1zm1 0h1v1h-1zm0 4h1v1h-1zm1 1h1v1h-1zm2 -65h1v1h-1zm0 67h1v1h-1zm1 -4h1v1h-1zm1 1h1v1h-1zm0 1h1v1h-1zm0 2h1v1h-1zm2 -4h1v1h-1zm0 2h1v1h-1zm0 5h1v1h-1zm3 -2h1v1h-1zm1 -1h1v1h-1zm1 -2h1v1h-1zm3 6h1v1h-1zm1 -1h1v1h-1zm2 -10h1v1h-1zm1 8h1v1h-1zm1 -3h1v1h-1zm1 -2h1v1h-1zm1 5h1v1h-1zm0 4h1v1h-1zm4 -1h1v1h-1zm2 -10h1v1h-1zm1 -4h1v1h-1zm1 6h1v1h-1zm1 -6h1v1h-1zm2 4h1v1h-1zm2 6h1v1h-1zm1 3h1v1h-1zm1 5h1v1h-1zm1 -12h1v1h-1zm3 5h1v1h-1zm5 -7h1v1h-1zm1 0h1v1h-1zm1 2h1v1h-1zm0 4h1v1h-1zm0 7h1v1h-1zm1 -7h1v1h-1zm4 -4h1v1h-1zm2 -5h1v1h-1zm7 3h1v1h-1zm0 3h1v1h-1zm0 4h1v1h-1zm5 -5h1v1h-1zm0 4h1v1h-1zm0 1h1v1h-1zm2 -3h1v1h-1zm1 -1h1v1h-1zm2 0h1v1h-1zm4 -1h1v1h-1zm0 5h1v1h-1zm1 -7h1v1h-1zm0 11h1v1h-1zm1 -8h1v1h-1zm5 -31h1v1h-1zm4 28h1v1h-1zm0 3h1v1h-1zm0 1h1v1h-1zm2 -4h1v1h-1zm1 -3h1v1h-1zm0 7h1v1h-1zm0 2h1v1h-1zm1 -3h1v1h-1zm0 1h1v1h-1zm1 -1h1v1h-1zm0 1h1v1h-1zm1 -7h1v1h-1zm2 3h1v1h-1zm4 10h1v1h-1zm3 -3h1v1h-1zm3 -10h1v1h-1zm2 2h1v1h-1zm0 7h1v1h-1zm2 -3h1v1h-1zm2 -1h1v1h-1zm1 2h1v1h-1zm3 -1h1v1h-1zm2 6h1v1h-1zm4 -7h1v1h-1zm0 4h1v1h-1zm5 -2h1v1h-1zm2 -5h1v1h-1zm2 3h1v1h-1zm1 -2h1v1h-1zm3 2h1v1h-1zm4 2h1v1h-1zm2 5h1v1h-1zm1 -9h1v1h-1zm3 4h1v1h-1zm1 -1h1v1h-1zm1 -7h1v1h-1zm4 4h1v1h-1zm2 0h1v1h-1zm2 0h1v1h-1zm0 3h1v1h-1zm1 -1h1v1h-1zm1 -3h1v1h-1zm4 5h1v1h-1zm2 -5h1v1h-1zm0 3h1v1h-1zm2 2h1v1h-1zm0 2h1v1h-1zm3 -4h1v1h-1zm1 4h1v1h-1zm1 -3h1v1h-1zm1 3h1v1h-1zm2 1h1v1h-1zm4 2h1v1h-1zm1 -13h1v1h-1zm0 4h1v1h-1zm1 -1h1v1h-1zm1 1h1v1h-1zm0 7h1v1h-1zm2 -5h1v1h-1zm3 1h1v1h-1zm0 3h1v1h-1zm4 -9h1v1h-1zm0 6h1v1h-1zm1 1h1v1h-1zm0 2h1v1h-1zm1 -7h1v1h-1zm3 0h1v1h-1zm2 5h1v1h-1zm3 5h1v1h-1zm1 -7h1v1h-1zm1 5h1v1h-1zm1 -5h1v1h-1zm4 -7h1v1h-1zm1 5h1v1h-1zm3 4h1v1h-1zm4 -5h1v1h-1zm3 8h1v1h-1zm1 -5h1v1h-1zm1 1h1v1h-1zm1 -1h1v1h-1zm0 8h1v1h-1zm2 -11h1v1h-1zm3 -2h1v1h-1zm3 3h1v1h-1zm2 2h1v1h-1zm3 -3h1v1h-1zm3 4h1v1h-1zm1 -4h1v1h-1zm3 3h1v1h-1zm1 -2h1v1h-1zm0 7h1v1h-1zm1 -4h1v1h-1zm5 -8h1v1h-1zm3 7h1v1h-1zm0 2h1v1h-1zm1 0h1v1h-1zm1 -4h1v1h-1zm3 2h1v1h-1zm3 -13h1v1h-1zm5 14h1v1h-1zm1 -4h1v1h-1zm0 3h1v1h-1zm1 -6h1v1h-1zm5 6h1v1h-1zm0 2h1v1h-1zm0 2h1v1h-1zm4 -7h1v1h-1zm0 3h1v1h-1zm4 -5h1v1h-1zm1 -1h1v1h-1zm1 3h1v1h-1zm3 8h1v1h-1zm1 -7h1v1h-1zm0 2h1v1h-1zm1 0h1v1h-1zm8 -2h1v1h-1zm0 2h1v1h-1zm0 7h1v1h-1zm6 -9h1v1h-1zm0 2h1v1h-1zm2 1h1v1h-1zm5 -3h1v1h-1zm3 0h1v1h-1zm0 4h1v1h-1zm1 -2h1v1h-1zm1 -5h1v1h-1zm1 3h1v1h-1zm1 -7h1v1h-1zm1 6h1v1h-1zm2 -2h1v1h-1zm0 2h1v1h-1zm0 8h1v1h-1zm4 -12h1v1h-1zm0 7h1v1h-1zm1 0h1v1h-1zm0 1h1v1h-1zm1 -7h1v1h-1zm0 13h1v1h-1zm1 -6h1v1h-1zm6 -3h1v1h-1zm2 0h1v1h-1zm0 2h1v1h-1zm1 -7h1v1h-1zm7 7h1v1h-1zm3 1h1v1h-1zm0 3h1v1h-1zm1 -3h1v1h-1zm1 -4h1v1h-1zm0 3h1v1h-1zm0 2h1v1h-1zm2 -4h1v1h-1zm1 0h1v1h-1zm2 3h1v1h-1zm1 -3h1v1h-1zm3 -4h1v1h-1zm1 6h1v1h-1zm1 -6h1v1h-1zm3 10h1v1h-1zm4 -4h1v1h-1zm3 5h1v1h-1zm3 -11h1v1h-1zm2 4h1v1h-1zm0 4h1v1h-1zm2 2h1v1h-1zm1 1h1v1h-1zm1 3h1v1h-1zm4 -14h1v1h-1zm2 -3h1v1h-1zm1 10h1v1h-1zm1 -6h1v1h-1zm1 7h1v1h-1zm1 2h1v1h-1zm2 -3h1v1h-1zm0 1h1v1h-1zm4 -4h1v1h-1zm2 2h1v1h-1zm3 1h1v1h-1zm3 -6h1v1h-1zm0 9h1v1h-1zm1 0h1v1h-1zm2 -7h1v1h-1zm0 1h1v1h-1zm3 3h1v1h-1zm1 -4h1v1h-1zm3 -3h1v1h-1zm2 4h1v1h-1zm1 2h1v1h-1zm2 5h1v1h-1zm5 -7h1v1h-1zm2 0h1v1h-1zm3 6h1v1h-1zm6 -3h1v1h-1zm2 0h1v1h-1zm1 1h1v1h-1zm2 -5h1v1h-1zm1 7h1v1h-1zm2 -6h1v1h-1zm0 7h1v1h-1zm4 -68h1v1h-1zm0 61h1v1h-1zm4 0h1v1h-1zm7 2h1v1h-1zm2 -3h1v1h-1zm2 10h1v1h-1zm15 -10h1v1h-1zm1 0h1v1h-1zm0 1h1v1h-1zm1 -3h1v1h-1zm1 -1h1v1h-1zm3 6h1v1h-1zm3 -3h1v1h-1zm1 1h1v1h-1zm1 -4h1v1h-1zm0 6h1v1h-1zm1 5h1v1h-1zm4 -5h1v1h-1zm2 1h1v1h-1zm2 -3h1v1h-1zm2 4h1v1h-1zm5 -4h1v1h-1zm1 7h1v1h-1zm1 -4h1v1h-1zm7 -8h1v1h-1zm1 4h1v1h-1zm1 3h1v1h-1zm1 -9h1v1h-1zm0 9h1v1h-1zm6 -6h1v1h-1zm1 8h1v1h-1zm4 -9h1v1h-1zm2 7h1v1h-1zm8 -3h1v1h-1zm2 1h1v1h-1zm2 -1h1v1h-1zm1 -2h1v1h-1zm6 3h1v1h-1zm1 2h1v1h-1zm1 -2h1v1h-1zm1 -3h1v1h-1zm1 -2h1v1h-1zm1 4h1v1h-1zm3 1h1v1h-1zm2 7h1v1h-1zm5 -10h1v1h-1zm3 5h1v1h-1zm1 0h1v1h-1zm6 5h1v1h-1zm5 -3h1v1h-1zm1 -4h1v1h-1zm5 -7h1v1h-1zm0 4h1v1h-1zm1 5h1v1h-1zm8 4h1v1h-1zm3 -10h1v1h-1zm1 6h1v1h-1zm1 -2h1v1h-1zm0 4h1v1h-1zm2 -4h1v1h-1zm7 -1h1v1h-1zm2 -2h1v1h-1zm2 5h1v1h-1zm1 -6h1v1h-1zm4 13h1v1h-1zm2 -10h1v1h-1zm11 -6h1v1h-1zm5 11h1v1h-1zm2 0h1v1h-1zm3 -2h1v1h-1zm1 -2h1v1h-1zm14 -1h1v1h-1zm4 5h1v1h-1zm14 -7h1v1h-1zm2 2h1v1h-1zm39 -4h1v1h-1zm5 -6h1v1h-1zm15 4h1v1h-1zm8 6h1v1h-1zm1 -7h1v1h-1zm1 11h1v1h-1zm7 -4h1v1h-1z" fill="#ff0000"/>
<path d="M55 702h1v1h-1zm1 -4h1v1h-1zm1 4h1v1h-1zm0 1h1v1h-1zm1 -5h1v1h-1zm0 2h1v1h-1zm3 2h1v1h-1zm1 -7h1v1h-1zm0 4h1v1h-1zm2 0h1v1h-1zm1 0h1v1h-1zm0 4h1v1h-1zm0 1h1v1h-1zm1 -23h1v1h-1zm0 18h1v1h-1zm0 8h1v1h-1zm1 -9h1v1h-1zm0 1h1v1h-1zm0 10h1v1h-1zm1 -14h1v1h-1zm0 1h1v1h-1zm0 6h1v1h-1zm1 -3h1v1h-1zm3 -3h1v1h-1zm0 6h1v1h-1zm2 -2h1v1h-1zm1 -4h1v1h-1zm0 2h1v1h-1zm0 1h1v1h-1zm0 4h1v1h-1zm1 -8h1v1h-1zm0 4h1v1h-1zm1 1h1v1h-1zm1 -4h1v1h-1zm2 4h1v1h-1zm1 3h1v1h-1zm1 -4h1v1h-1zm2 1h1v1h-1zm1 -5h1v1h-1zm2 3h1v1h-1zm1 -2h1v1h-1zm1 -4h1v1h-1zm2 6h1v1h-1zm1 1h1v1h-1zm0 7h1v1h-1zm1 -10h1v1h-1zm0 2h1v1h-1zm1 1h1v1h-1zm0 4h1v1h-1zm1 -5h1v1h-1zm3 4h1v1h-1zm2 -2h1v1h-1zm0 2h1v1h-1zm0 2h1v1h-1zm1 -1h1v1h-1zm1 -5h1v1h-1zm0 2h1v1h-1zm1 -4h1v1h-1zm1 4h1v1h-1zm3 -8h1v1h-1zm0 4h1v1h-1zm0 2h1v1h-1zm1 1h1v1h-1zm1 -3h1v1h-1zm2 4h1v1h-1zm1 -2h1v1h-1zm0 4h1v1h-1zm1 -6h1v1h-1zm0 7h1v1h-1zm2 -8h1v1h-1zm0 3h1v1h-1zm0 2h1v1h-1zm1 -1h1v1h-1zm0 4h1v1h-1zm2 -11h1v1h-1zm0 6h1v1h-1zm1 4h1v1h-1zm1 -4h1v1h-1zm1 0h1v1h-1zm0 4h1v1h-1zm1 1h1v1h-1zm0 6h1v1h-1zm1 -11h1v1h-1zm1 -3h1v1h-1zm1 -6h1v1h-1zm1 11h1v1h-1zm1 -2h1v1h-1zm2 -32h1v1h-1zm0 26h1v1h-1zm0 12h1v1h-1zm1 -6h1v1h-1zm1 -6h1v1h-1zm0 3h1v1h-1zm1 5h1v1h-1zm3 0h1v1h-1zm1 -4h1v1h-1zm0 2h1v1h-1zm1 0h1v1h-1zm2 -3h1v1h-1zm0 3h1v1h-1zm0 1h1v1h-1zm1 3h1v1h-1zm1 -7h1v1h-1zm2 1h1v1h-1zm0 2h1v1h-1zm1 1h1v1h-1zm0 1h1v1h-1zm3 -5h1v1h-1zm0 5h1v1h-1zm0 4h1v1h-1zm1 -5h1v1h-1zm0 3h1v1h-1zm2 -4h1v1h-1zm2 -6h1v1h-1zm1 8h1v1h-1zm1 -2h1v1h-1zm1 -7h1v1h-1zm0 9h1v1h-1zm2 -2h1v1h-1zm1 0h1v1h-1zm2 -2h1v1h-1zm1 -1h1v1h-1zm2 3h1v1h-1zm0 6h1v1h-1zm1 -11h1v1h-1zm0 3h1v1h-1zm0 4h1v1h-1zm1 -4h1v1h-1zm0 4h1v1h-1zm1 -2h1v1h-1zm1 -2h1v1h-1zm1 6h1v1h-1zm1 -9h1v1h-1zm2 9h1v1h-1zm1 -7h1v1h-1zm0 1h1v1h-1zm0 2h1v1h-1zm1 -2h1v1h-1zm2 2h1v1h-1zm1 0h1v1h-1zm1 -6h1v1h-1zm0 6h1v1h-1zm2 -2h1v1h-1zm0 2h1v1h-1zm2 -3h1v1h-1zm1 3h1v1h-1zm1 -6h1v1h-1zm0 1h1v1h-1zm0 2h1v1h-1zm0 1h1v1h-1zm0 7h1v1h-1zm2 -8h1v1h-1zm2 -3h1v1h-1zm3 4h1v1h-1zm0 7h1v1h-1zm2 -8h1v1h-1zm0 4h1v1h-1zm1 0h1v1h-1zm1 -6h1v1h-1zm0 2h1v1h-1zm0 3h1v1h-1zm1 2h1v1h-1zm1 -7h1v1h-1zm1 -4h1v1h-1zm0 4h1v1h-1zm0 13h1v1h-1zm3 -10h1v1h-1zm0 2h1v1h-1zm1 -10h1v1h-1zm0 4h1v1h-1zm0 4h1v1h-1zm1 -7h1v1h-1zm1 -1h1v1h-1zm0 5h1v1h-1zm1 0h1v1h-1zm1 -1h1v1h-1zm0 3h1v1h-1zm0 3h1v1h-1zm1 -3h1v1h-1zm0 3h1v1h-1zm0 4h1v1h-1zm1 -4h1v1h-1zm1 -5h1v1h-1zm0 3h1v1h-1zm1 -3h1v1h-1zm0 2h1v1h-1zm0 3h1v1h-1zm1 -6h1v1h-1zm2 10h1v1h-1zm1 -9h1v1h-1zm1 2h1v1h-1zm0 3h1v1h-1zm1 -7h1v1h-1zm0 1h1v1h-1zm1 1h1v1h-1zm3 3h1v1h-1zm0 2h1v1h-1zm1 1h1v1h-1zm1 -11h1v1h-1zm0 5h1v1h-1zm1 5h1v1h-1zm1 -3h1v1h-1zm0 3h1v1h-1zm2 -6h1v1h-1zm0 1h1v1h-1zm2 -4h1v1h-1zm0 13h1v1h-1zm1 -7h1v1h-1zm1 3h1v1h-1zm2 -3h1v1h-1zm0 3h1v1h-1zm3 -5h1v1h-1zm2 5h1v1h-1zm1 -3h1v1h-1zm0 1h1v1h-1zm2 -5h1v1h-1zm0 5h1v1h-1zm1 10h1v1h-1zm1 -21h1v1h-1zm0 10h1v1h-1zm1 -52h1v1h-1zm2 49h1v1h-1zm0 3h1v1h-1zm0 3h1v1h-1zm2 -37h1v1h-1zm0 32h1v1h-1zm0 2h1v1h-1zm1 3h1v1h-1zm2 -9h1v1h-1zm0 9h1v1h-1zm0 2h1v1h-1zm2 -7h1v1h-1zm1 2h1v1h-1zm0 3h1v1h-1zm1 -6h1v1h-1zm2 -4h1v1h-1zm1 12h1v1h-1zm1 -12h1v1h-1zm0 4h1v1h-1zm1 -1h1v1h-1zm1 0h1v1h-1zm1 5h1v1h-1zm1 2h1v1h-1zm1 -7h1v1h-1zm1 0h1v1h-1zm2 2h1v1h-1zm0 9h1v1h-1zm2 -14h1v1h-1zm0 1h1v1h-1zm0 2h1v1h-1zm0 1h1v1h-1zm0 1h1v1h-1zm1 -4h1v1h-1zm1 6h1v1h-1zm1 -7h1v1h-1zm0 1h1v1h-1zm0 4h1v1h-1zm0 2h1v1h-1zm1 -4h1v1h-1zm0 5h1v1h-1zm0 2h1v1h-1zm2 -5h1v1h-1zm1 -2h1v1h-1zm1 8h1v1h-1zm1 -7h1v1h-1zm0 1h1v1h-1zm0 2h1v1h-1zm3 0h1v1h-1zm1 -3h1v1h-1zm0 1h1v1h-1zm1 -2h1v1h-1zm0 2h1v1h-1zm1 -5h1v1h-1zm0 7h1v1h-1zm1 0h1v1h-1zm1 -6h1v1h-1zm0 6h1v1h-1zm1 -6h1v1h-1zm2 6h1v1h-1zm0 4h1v1h-1zm1 -8h1v1h-1zm0 1h1v1h-1zm0 6h1v1h-1zm2 -9h1v1h-1zm1 4h1v1h-1zm2 -1h1v1h-1zm0 1h1v1h-1zm0 2h1v1h-1zm0 1h1v1h-1zm1 -11h1v1h-1zm3 4h1v1h-1zm0 4h1v1h-1zm1 0h1v1h-1zm0 6h1v1h-1zm1 1h1v1h-1zm1 -7h1v1h-1zm0 2h1v1h-1zm4 -9h1v1h-1zm0 2h1v1h-1zm0 5h1v1h-1zm1 -1h1v1h-1zm1 4h1v1h-1zm1 -8h1v1h-1zm0 8h1v1h-1zm1 -7h1v1h-1zm0 4h1v1h-1zm0 3h1v1h-1zm2 -5h1v1h-1zm0 2h1v1h-1zm1 0h1v1h-1zm0 2h1v1h-1zm2 -4h1v1h-1zm1 0h1v1h-1zm1 1h1v1h-1zm0 4h1v1h-1zm1 0h1v1h-1zm0 2h1v1h-1zm2 -6h1v1h-1zm0 3h1v1h-1zm1 -6h1v1h-1zm0 6h1v1h-1zm1 1h1v1h-1zm1 -4h1v1h-1zm1 1h1v1h-1zm1 -5h1v1h-1zm0 3h1v1h-1zm0 4h1v1h-1zm1 -3h1v1h-1zm0 3h1v1h-1zm4 0h1v1h-1zm1 -7h1v1h-1zm0 1h1v1h-1zm0 2h1v1h-1zm1 1h1v1h-1zm1 1h1v1h-1zm0 5h1v1h-1zm2 -7h1v1h-1zm0 5h1v1h-1zm1 4h1v1h-1zm1 -8h1v1h-1zm1 0h1v1h-1zm0 3h1v1h-1zm1 -2h1v1h-1zm0 2h1v1h-1zm1 -2h1v1h-1zm1 -9h1v1h-1zm0 9h1v1h-1zm1 0h1v1h-1zm1 -2h1v1h-1zm2 -2h1v1h-1zm0 2h1v1h-1zm2 2h1v1h-1zm0 3h1v1h-1zm2 -1h1v1h-1zm2 -3h1v1h-1zm0 1h1v1h-1zm0 2h1v1h-1zm2 -6h1v1h-1zm0 3h1v1h-1zm1 -1h1v1h-1zm1 -3h1v1h-1zm0 4h1v1h-1zm2 -3h1v1h-1zm1 2h1v1h-1zm0 1h1v1h-1zm2 -4h1v1h-1zm1 3h1v1h-1zm1 -2h1v1h-1zm1 2h1v1h-1zm0 1h1v1h-1zm2 -11h1v1h-1zm0 7h1v1h-1zm0 1h1v1h-1zm0 6h1v1h-1zm2 0h1v1h-1zm2 -9h1v1h-1zm1 3h1v1h-1zm0 3h1v1h-1zm0 3h1v1h-1zm1 -4h1v1h-1zm1 -6h1v1h-1zm1 0h1v1h-1zm1 7h1v1h-1zm1 -58h1v1h-1zm0 54h1v1h-1zm1 -4h1v1h-1zm0 4h1v1h-1zm0 3h1v1h-1zm3 0h1v1h-1zm1 -3h1v1h-1zm3 -2h1v1h-1zm1 5h1v1h-1zm1 -2h1v1h-1zm2 7h1v1h-1zm1 -15h1v1h-1zm1 10h1v1h-1zm0 1h1v1h-1zm1 -4h1v1h-1zm0 1h1v1h-1zm0 2h1v1h-1zm2 -6h1v1h-1zm0 6h1v1h-1zm0 1h1v1h-1zm2 -8h1v1h-1zm1 1h1v1h-1zm1 6h1v1h-1zm0 2h1v1h-1zm1 -8h1v1h-1zm2 4h1v1h-1zm1 -1h1v1h-1zm0 1h1v1h-1zm1 -8h1v1h-1zm1 5h1v1h-1zm0 5h1v1h-1zm1 -3h1v1h-1zm3 3h1v1h-1zm2 -9h1v1h-1zm1 3h1v1h-1zm1 6h1v1h-1zm2 -10h1v1h-1zm0 8h1v1h-1zm0 3h1v1h-1zm5 -7h1v1h-1zm2 4h1v1h-1zm0 3h1v1h-1zm1 1h1v1h-1zm0 3h1v1h-1zm1 -14h1v1h-1zm1 2h1v1h-1zm1 0h1v1h-1zm0 7h1v1h-1zm1 1h1v1h-1zm1 0h1v1h-1zm0 3h1v1h-1zm1 -4h1v1h-1zm1 -2h1v1h-1zm0 4h1v1h-1zm3 -4h1v1h-1zm1 2h1v1h-1zm2 2h1v1h-1zm0 3h1v1h-1zm1 -11h1v1h-1zm1 -1h1v1h-1zm1 -3h1v1h-1zm0 3h1v1h-1zm0 1h1v1h-1zm2 11h1v1h-1zm1 -3h1v1h-1zm0 2h1v1h-1zm1 -11h1v1h-1zm1 0h1v1h-1zm0 8h1v1h-1zm1 -4h1v1h-1zm0 5h1v1h-1zm1 -2h1v1h-1zm1 -7h1v1h-1zm2 9h1v1h-1zm1 -12h1v1h-1zm0 4h1v1h-1zm0 4h1v1h-1zm1 -3h1v1h-1zm0 3h1v1h-1zm1 3h1v1h-1zm1 -8h1v1h-1zm0 1h1v1h-1zm0 7h1v1h-1zm6 -3h1v1h-1zm1 -5h1v1h-1zm1 0h1v1h-1zm1 4h1v1h-1zm1 7h1v1h-1zm2 -6h1v1h-1zm0 2h1v1h-1zm2 -2h1v1h-1zm1 -8h1v1h-1zm0 10h1v1h-1zm0 1h1v1h-1zm1 -11h1v1h-1zm0 3h1v1h-1zm1 4h1v1h-1zm0 3h1v1h-1zm0 2h1v1h-1zm1 0h1v1h-1zm1 -8h1v1h-1zm0 1h1v1h-1zm2 6h1v1h-1zm1 -3h1v1h-1zm0 3h1v1h-1zm3 -8h1v1h-1zm0 5h1v1h-1zm0 4h1v1h-1zm1 -4h1v1h-1zm1 -4h1v1h-1zm1 1h1v1h-1zm0 10h1v1h-1zm1 -12h1v1h-1zm0 4h1v1h-1zm0 4h1v1h-1zm0 3h1v1h-1zm1 -6h1v1h-1zm0 6h1v1h-1zm2 -10h1v1h-1zm0 4h1v1h-1zm2 -4h1v1h-1zm6 4h1v1h-1zm1 0h1v1h-1zm1 -10h1v1h-1zm0 10h1v1h-1zm0 2h1v1h-1zm2 -5h1v1h-1zm0 7h1v1h-1zm1 -4h1v1h-1zm1 3h1v1h-1zm1 0h1v1h-1zm1 -3h1v1h-1zm1 6h1v1h-1zm1 -10h1v1h-1zm0 6h1v1h-1zm2 -5h1v1h-1zm1 3h1v1h-1zm1 0h1v1h-1zm0 3h1v1h-1zm1 -8h1v1h-1zm0 5h1v1h-1zm2 2h1v1h-1zm0 1h1v1h-1zm0 1h1v1h-1zm3 -7h1v1h-1zm1 0h1v1h-1zm0 9h1v1h-1zm1 -11h1v1h-1zm2 1h1v1h-1zm2 11h1v1h-1zm1 -10h1v1h-1zm3 6h1v1h-1zm1 -1h1v1h-1zm0 4h1v1h-1zm0 4h1v1h-1zm3 -14h1v1h-1zm3 1h1v1h-1zm1 3h1v1h-1zm3 0h1v1h-1zm1 -4h1v1h-1zm0 8h1v1h-1zm1 -1h1v1h-1zm1 -1h1v1h-1zm0 1h1v1h-1zm3 -6h1v1h-1zm0 2h1v1h-1zm0 1h1v1h-1zm1 -7h1v1h-1zm1 0h1v1h-1zm1 4h1v1h-1zm0 6h1v1h-1zm1 -4h1v1h-1zm1 3h1v1h-1zm1 -9h1v1h-1zm1 7h1v1h-1zm1 2h1v1h-1zm1 1h1v1h-1zm1 -3h1v1h-1zm1 3h1v1h-1zm1 -6h1v1h-1zm1 3h1v1h-1zm2 10h1v1h-1zm0 1h1v1h-1zm4 -16h1v1h-1zm1 11h1v1h-1zm2 -7h1v1h-1zm1 -3h1v1h-1zm1 10h1v1h-1zm4 -10h1v1h-1zm0 3h1v1h-1zm1 7h1v1h-1zm1 -10h1v1h-1zm8 1h1v1h-1zm1 -1h1v1h-1zm1 -3h1v1h-1zm0 2h1v1h-1zm0 2h1v1h-1zm2 -5h1v1h-1zm0 4h1v1h-1zm3 -7h1v1h-1zm2 13h1v1h-1zm2 -44h1v1h-1zm0 44h1v1h-1zm2 -3h1v1h-1zm0 1h1v1h-1zm7 -1h1v1h-1zm1 -4h1v1h-1zm0 2h1v1h-1zm0 3h1v1h-1zm1 -7h1v1h-1zm0 9h1v1h-1zm2 -7h1v1h-1zm1 -3h1v1h-1zm3 1h1v1h-1zm3 2h1v1h-1zm0 4h1v1h-1zm0 5h1v1h-1zm1 -14h1v1h-1zm1 5h1v1h-1zm2 4h1v1h-1zm1 3h1v1h-1zm2 -7h1v1h-1zm0 1h1v1h-1zm2 0h1v1h-1zm3 -1h1v1h-1zm0 1h1v1h-1zm0 3h1v1h-1zm1 0h1v1h-1zm3 -43h1v1h-1zm0 41h1v1h-1zm1 0h1v1h-1zm1 -2h1v1h-1zm1 1h1v1h-1zm2 -1h1v1h-1zm0 2h1v1h-1zm0 10h1v1h-1zm2 -3h1v1h-1zm1 -9h1v1h-1zm1 14h1v1h-1zm1 -10h1v1h-1zm1 3h1v1h-1zm1 -6h1v1h-1zm2 -3h1v1h-1zm1 6h1v1h-1zm0 3h1v1h-1zm6 2h1v1h-1zm1 -7h1v1h-1zm1 -1h1v1h-1zm0 4h1v1h-1zm2 -3h1v1h-1zm1 0h1v1h-1zm2 0h1v1h-1zm1 2h1v1h-1zm0 1h1v1h-1zm4 -1h1v1h-1zm0 3h1v1h-1zm3 -3h1v1h-1zm1 -4h1v1h-1zm0 2h1v1h-1zm0 5h1v1h-1zm1 -7h1v1h-1zm2 5h1v1h-1zm1 -5h1v1h-1zm0 8h1v1h-1zm1 -1h1v1h-1zm1 -5h1v1h-1zm3 2h1v1h-1zm1 -3h1v1h-1zm1 -3h1v1h-1zm0 3h1v1h-1zm0 6h1v1h-1zm1 -5h1v1h-1zm2 9h1v1h-1zm5 -14h1v1h-1zm2 4h1v1h-1zm2 1h1v1h-1zm1 5h1v1h-1zm1 -5h1v1h-1zm0 5h1v1h-1zm1 0h1v1h-1zm2 -6h1v1h-1zm2 1h1v1h-1zm2 2h1v1h-1zm3 0h1v1h-1zm1 3h1v1h-1zm1 -5h1v1h-1zm7 2h1v1h-1zm0 1h1v1h-1zm1 -10h1v1h-1zm0 5h1v1h-1zm1 7h1v1h-1zm1 0h1v1h-1zm1 1h1v1h-1zm1 -4h1v1h-1zm2 0h1v1h-1zm0 1h1v1h-1zm3 -3h1v1h-1zm3 -2h1v1h-1zm1 0h1v1h-1zm0 5h1v1h-1zm2 -5h1v1h-1zm0 8h1v1h-1zm1 -6h1v1h-1zm1 -4h1v1h-1zm3 3h1v1h-1zm0 8h1v1h-1zm1 -7h1v1h-1zm1 2h1v1h-1zm1 0h1v1h-1zm0 1h1v1h-1zm2 0h1v1h-1zm5 -5h1v1h-1zm3 -2h1v1h-1zm0 3h1v1h-1zm0 4h1v1h-1zm3 -3h1v1h-1zm0 3h1v1h-1zm1 -10h1v1h-1zm0 7h1v1h-1zm3 -4h1v1h-1zm3 9h1v1h-1zm2 -6h1v1h-1zm4 4h1v1h-1zm2 -4h1v1h-1zm3 -1h1v1h-1zm2 -2h1v1h-1zm0 6h1v1h-1zm2 -2h1v1h-1zm0 3h1v1h-1zm1 -5h1v1h-1zm0 1h1v1h-1zm0 6h1v1h-1zm1 -5h1v1h-1zm1 -1h1v1h-1zm1 1h1v1h-1zm0 10h1v1h-1zm1 -8h1v1h-1zm2 -2h1v1h-1zm2 6h1v1h-1zm3 -3h1v1h-1zm1 3h1v1h-1zm0 1h1v1h-1zm3 -9h1v1h-1zm0 2h1v1h-1zm0 2h1v1h-1zm1 0h1v1h-1zm3 -6h1v1h-1zm1 3h1v1h-1zm1 -3h1v1h-1zm1 6h1v1h-1zm2 0h1v1h-1zm0 1h1v1h-1zm1 -10h1v1h-1zm0 5h1v1h-1zm1 1h1v1h-1zm2 3h1v1h-1zm1 3h1v1h-1zm1 -7h1v1h-1zm1 -3h1v1h-1zm1 8h1v1h-1zm1 -5h1v1h-1zm2 0h1v1h-1zm0 5h1v1h-1zm1 -1h1v1h-1zm1 4h1v1h-1zm4 -6h1v1h-1zm1 -7h1v1h-1zm0 6h1v1h-1zm1 1h1v1h-1zm1 -1h1v1h-1zm0 1h1v1h-1zm4 5h1v1h-1zm1 -7h1v1h-1zm1 -7h1v1h-1zm1 7h1v1h-1zm0 1h1v1h-1zm0 3h1v1h-1zm2 3h1v1h-1zm3 -2h1v1h-1zm1 -3h1v1h-1zm1 -2h1v1h-1zm0 2h1v1h-1zm0 2h1v1h-1zm0 3h1v1h-1zm1 -2h1v1h-1zm2 -11h1v1h-1zm0 13h1v1h-1zm1 -5h1v1h-1zm2 0h1v1h-1zm3 2h1v1h-1zm0 1h1v1h-1zm1 -12h1v1h-1zm1 1h1v1h-1zm1 6h1v1h-1zm1 1h1v1h-1zm2 -1h1v1h-1zm2 2h1v1h-1zm1 -1h1v1h-1zm1 -4h1v1h-1zm2 1h1v1h-1zm4 0h1v1h-1zm3 2h1v1h-1zm0 4h1v1h-1zm2 -9h1v1h-1zm0 9h1v1h-1zm1 3h1v1h-1zm1 -7h1v1h-1zm3 2h1v1h-1zm1 0h1v1h-1zm4 0h1v1h-1zm2 -4h1v1h-1zm0 7h1v1h-1zm2 -5h1v1h-1zm1 1h1v1h-1zm0 1h1v1h-1zm1 -5h1v1h-1zm1 4h1v1h-1zm2 1h1v1h-1zm0 2h1v1h-1zm0 1h1v1h-1zm2 -10h1v1h-1zm0 7h1v1h-1zm0 2h1v1h-1zm1 -11h1v1h-1zm1 4h1v1h-1zm1 4h1v1h-1zm0 3h1v1h-1zm1 0h1v1h-1zm3 -2h1v1h-1zm1 -7h1v1h-1zm0 3h1v1h-1zm2 7h1v1h-1zm1 -43h1v1h-1zm0 36h1v1h-1zm0 7h1v1h-1zm1 -5h1v1h-1zm0 4h1v1h-1zm2 -4h1v1h-1zm2 -6h1v1h-1zm0 10h1v1h-1zm3 -10h1v1h-1zm0 11h1v1h-1zm2 -4h1v1h-1zm1 -1h1v1h-1zm0 1h1v1h-1zm2 3h1v1h-1zm1 -6h1v1h-1zm0 9h1v1h-1zm2 0h1v1h-1zm1 -39h1v1h-1zm0 30h1v1h-1zm0 4h1v1h-1zm2 -2h1v1h-1zm5 -2h1v1h-1zm1 0h1v1h-1zm1 3h1v1h-1zm0 1h1v1h-1zm4 -5h1v1h-1zm0 4h1v1h-1zm3 8h1v1h-1zm1 -12h1v1h-1zm5 3h1v1h-1zm4 1h1v1h-1zm1 0h1v1h-1zm0 1h1v1h-1zm4 0h1v1h-1zm2 -8h1v1h-1zm2 3h1v1h-1zm2 4h1v1h-1zm0 4h1v1h-1zm1 -1h1v1h-1zm1 -7h1v1h-1zm1 1h1v1h-1zm6 -4h1v1h-1zm0 4h1v1h-1zm0 3h1v1h-1zm0 3h1v1h-1zm0 1h1v1h-1zm1 -1h1v1h-1zm1 -3h1v1h-1zm0 4h1v1h-1zm1 -7h1v1h-1zm1 7h1v1h-1zm1 -5h1v1h-1zm3 -2h1v1h-1zm1 7h1v1h-1zm2 -7h1v1h-1zm0 2h1v1h-1zm5 0h1v1h-1zm0 1h1v1h-1zm6 0h1v1h-1zm0 4h1v1h-1zm0 2h1v1h-1zm1 -3h1v1h-1zm2 -7h1v1h-1zm0 8h1v1h-1zm1 -8h1v1h-1zm2 8h1v1h-1zm1 2h1v1h-1zm0 1h1v1h-1zm1 -6h1v1h-1zm3 -1h1v1h-1zm1 3h1v1h-1zm1 -10h1v1h-1zm3 14h1v1h-1zm3 -7h1v1h-1zm4 -8h1v1h-1zm1 2h1v1h-1zm2 9h1v1h-1zm3 -7h1v1h-1zm0 4h1v1h-1zm0 1h1v1h-1zm3 -2h1v1h-1zm1 -3h1v1h-1zm2 -3h1v1h-1zm1 10h1v1h-1zm1 -6h1v1h-1zm3 3h1v1h-1zm0 1h1v1h-1zm0 2h1v1h-1zm5 -3h1v1h-1zm0 4h1v1h-1zm1 -7h1v1h-1zm0 2h1v1h-1zm3 0h1v1h-1zm1 0h1v1h-1zm0 1h1v1h-1zm8 -4h1v1h-1zm1 3h1v1h-1zm3 5h1v1h-1zm1 -3h1v1h-1zm0 3h1v1h-1zm1 -10h1v1h-1zm0 10h1v1h-1zm1 3h1v1h-1zm1 -10h1v1h-1zm0 3h1v1h-1zm1 4h1v1h-1zm1 -5h1v1h-1zm0 2h1v1h-1zm1 -1h1v1h-1zm4 1h1v1h-1zm1 -5h1v1h-1zm0 5h1v1h-1zm4 -1h1v1h-1zm2 -10h1v1h-1zm0 9h1v1h-1zm3 -5h1v1h-1zm0 5h1v1h-1zm0 5h1v1h-1zm1 -12h1v1h-1zm0 11h1v1h-1zm1 -3h1v1h-1zm1 -3h1v1h-1zm3 -1h1v1h-1zm1 -7h1v1h-1zm1 1h1v1h-1zm0 11h1v1h-1zm2 -2h1v1h-1zm2 0h1v1h-1zm2 1h1v1h-1zm2 -3h1v1h-1zm0 3h1v1h-1zm0 7h1v1h-1zm5 -10h1v1h-1zm0 3h1v1h-1zm0 1h1v1h-1zm1 2h1v1h-1zm0 1h1v1h-1zm3 0h1v1h-1zm2 -8h1v1h-1zm1 7h1v1h-1zm1 1h1v1h-1zm1 -7h1v1h-1zm2 2h1v1h-1zm1 4h1v1h-1zm4 -10h1v1h-1zm0 6h1v1h-1zm0 1h1v1h-1zm0 3h1v1h-1zm2 -6h1v1h-1zm1 7h1v1h-1zm2 -10h1v1h-1zm0 3h1v1h-1zm1 7h1v1h-1zm5 -10h1v1h-1zm1 5h1v1h-1zm0 2h1v1h-1zm2 -2h1v1h-1zm3 0h1v1h-1zm1 -3h1v1h-1zm0 1h1v1h-1zm0 3h1v1h-1zm1 0h1v1h-1zm0 3h1v1h-1zm2 -3h1v1h-1zm2 -6h1v1h-1zm3 2h1v1h-1zm0 7h1v1h-1zm2 -4h1v1h-1zm4 -6h1v1h-1zm0 13h1v1h-1zm1 8h1v1h-1zm2 -20h1v1h-1zm0 3h1v1h-1zm3 -1h1v1h-1zm3 4h1v1h-1zm2 -3h1v1h-1zm0 2h1v1h-1zm2 0h1v1h-1zm2 -2h1v1h-1zm9 3h1v1h-1zm2 -3h1v1h-1zm1 -4h1v1h-1zm3 11h1v1h-1zm4 -7h1v1h-1zm1 -4h1v1h-1zm0 3h1v1h-1zm2 -3h1v1h-1zm0 4h1v1h-1zm0 9h1v1h-1zm5 -7h1v1h-1zm2 -7h1v1h-1zm3 1h1v1h-1zm0 7h1v1h-1zm1 1h1v1h-1zm3 -7h1v1h-1zm0 9h1v1h-1zm4 1h1v1h-1zm2 -7h1v1h-1zm4 -5h1v1h-1zm1 5h1v1h-1zm2 3h1v1h-1zm2 -4h1v1h-1zm2 -2h1v1h-1zm0 2h1v1h-1zm0 11h1v1h-1zm1 -10h1v1h-1zm0 3h1v1h-1zm2 3h1v1h-1zm2 -3h1v1h-1zm4 -6h1v1h-1zm4 0h1v1h-1zm0 3h1v1h-1zm5 -1h1v1h-1zm3 3h1v1h-1zm6 2h1v1h-1zm6 -2h1v1h-1zm1 2h1v1h-1zm1 -1h1v1h-1zm1 1h1v1h-1zm1 -9h1v1h-1zm0 8h1v1h-1zm2 -7h1v1h-1zm0 4h1v1h-1zm0 2h1v1h-1zm1 -5h1v1h-1zm0 3h1v1h-1zm2 -5h1v1h-1zm1 0h1v1h-1zm0 5h1v1h-1zm7 -4h1v1h-1zm3 -4h1v1h-1zm1 4h1v1h-1zm1 3h1v1h-1zm7 3h1v1h-1zm1 -5h1v1h-1zm1 6h1v1h-1zm1 0h1v1h-1zm1 -10h1v1h-1zm0 2h1v1h-1zm0 2h1v1h-1zm2 -4h1v1h-1zm0 6h1v1h-1zm0 1h1v1h-1zm5 2h1v1h-1zm4 2h1v1h-1zm3 2h1v1h-1zm1 -3h1v1h-1zm2 -10h1v1h-1zm5 4h1v1h-1zm2 6h1v1h-1zm0 1h1v1h-1zm1 -5h1v1h-1zm1 1h1v1h-1zm3 0h1v1h-1zm3 -3h1v1h-1zm1 -1h1v1h-1zm2 3h1v1h-1zm1 0h1v1h-1zm2 5h1v1h-1zm6 -4h1v1h-1zm1 -1h1v1h-1zm5 7h1v1h-1zm1 -2h1v1h-1zm3 -1h1v1h-1zm1 -6h1v1h-1zm1 5h1v1h-1zm2 -5h1v1h-1zm4 -37h1v1h-1zm2 37h1v1h-1zm5 3h1v1h-1zm1 3h1v1h-1zm13 -3h1v1h-1zm3 0h1v1h-1zm0 6h1v1h-1zm4 -6h1v1h-1zm2 3h1v1h-1zm3 -11h1v1h-1zm5 11h1v1h-1zm5 0h1v1h-1zm1 -3h1v1h-1zm2 -4h1v1h-1zm0 4h1v1h-1zm0 3h1v1h-1zm5 -10h1v1h-1zm0 13h1v1h-1zm10 -4h1v1h-1zm4 -2h1v1h-1zm2 -1h1v1h-1zm1 1h1v1h-1zm4 -10h1v1h-1zm0 3h1v1h-1zm4 4h1v1h-1zm1 0h1v1h-1zm2 -1h1v1h-1zm1 1h1v1h-1zm4 0h1v1h-1zm2 0h1v1h-1zm1 5h1v1h-1zm6 -3h1v1h-1zm2 4h1v1h-1zm8 -7h1v1h-1zm7 7h1v1h-1zm6 1h1v1h-1zm2 -9h1v1h-1zm4 1h1v1h-1zm8 3h1v1h-1zm2 -3h1v1h-1zm3 7h1v1h-1zm5 -7h1v1h-1zm10 -1h1v1h-1zm20 0h1v1h-1zm1 1h1v1h-1zm9 0h1v1h-1zm34 0h1v1h-1zm1 1h1v1h-1zm0 7h1v1h-1zm7 -12h1v1h-1z" fill="#ffff00"/>
<g font-family="Liberation Sans" font-size="11" fill="#000" shape-rendering="auto"><text x="51" y="646" text-anchor="end">50</text><text x="51" y="576" text-anchor="end">100</text><text x="51" y="507" text-anchor="end">150</text><text x="51" y="437" text-anchor="end">200</text><text x="51" y="368" text-anchor="end">250</text><text x="51" y="298" text-anchor="end">300</text><text x="51" y="229" text-anchor="end">350</text><text x="51" y="159" text-anchor="end">400</text><text x="51" y="90" text-anchor="end">450</text><text x="51" y="20" text-anchor="end">500</text><text x="54" y="13">ms</text><text x="54" y="726" text-anchor="middle">0</text><text x="202" y="726" text-anchor="middle">16</text><text x="351" y="726" text-anchor="middle">32</text><text x="500" y="726" text-anchor="middle">48</text><text x="649" y="726" text-anchor="middle">64</text><text x="798" y="726" text-anchor="middle">80</text><text x="946" y="726" text-anchor="middle">96</text><text x="1095" y="726" text-anchor="middle">112</text><text x="1244" y="726" text-anchor="middle">128</text><text x="1393" y="726" text-anchor="middle">144</text><text x="1541" y="726" text-anchor="middle">160gB</text></g>
</svg>



</body></html>
